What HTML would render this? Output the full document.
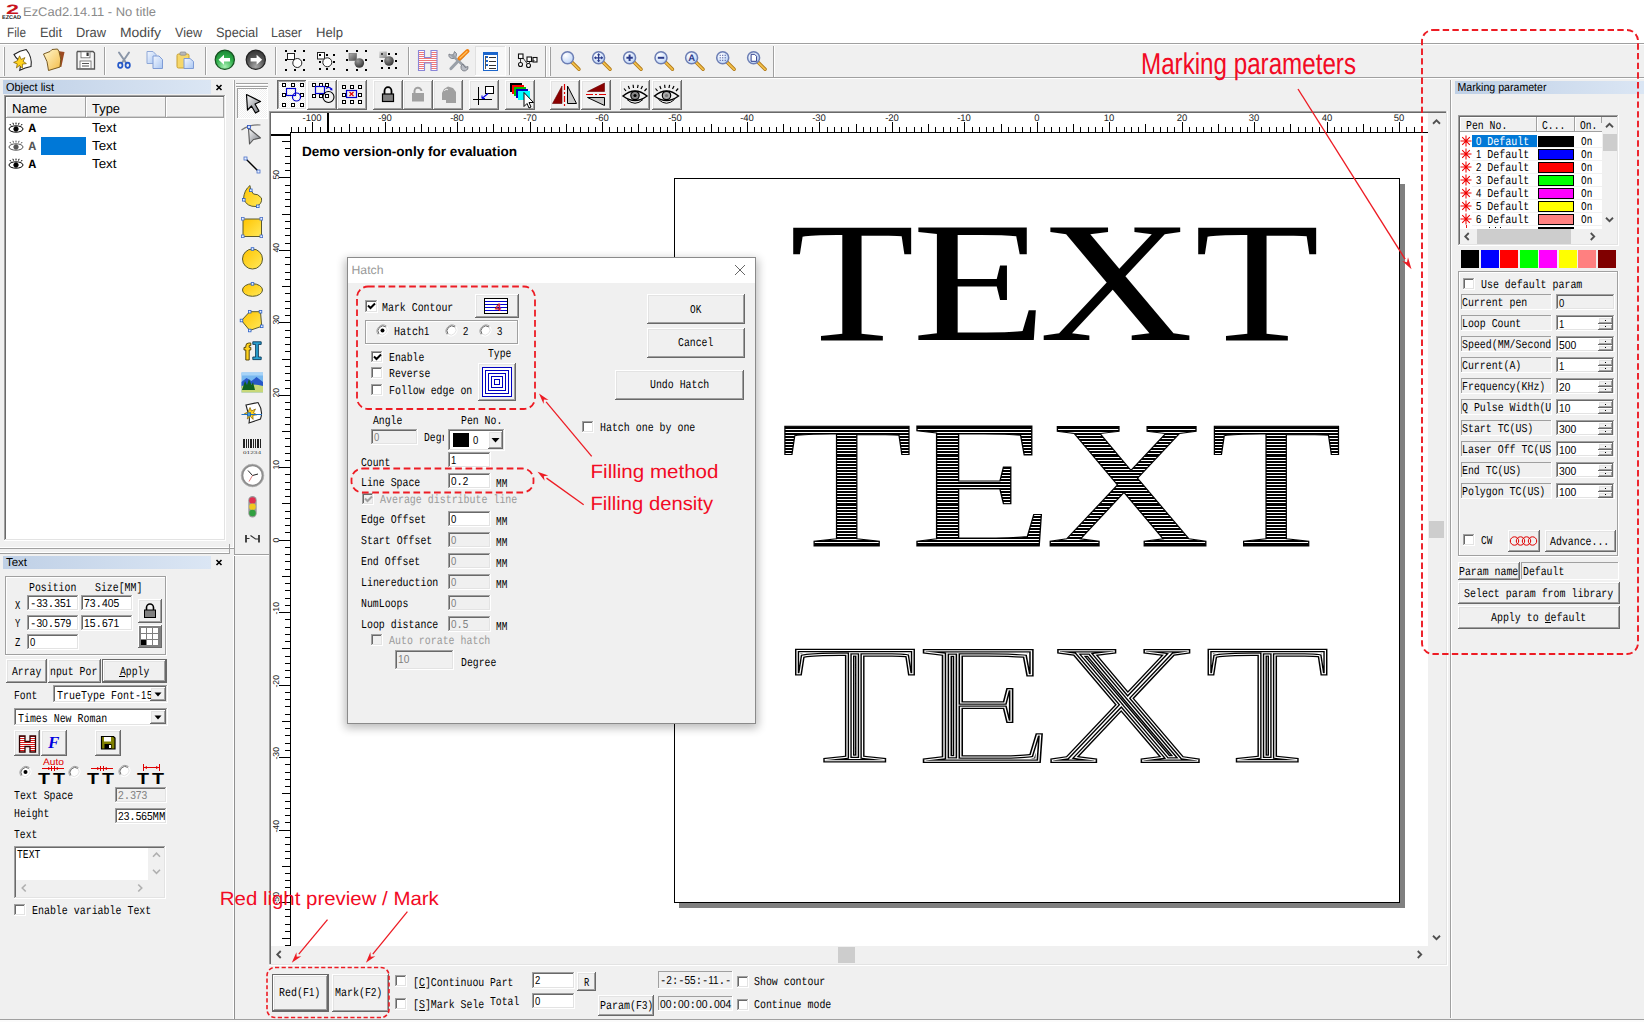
<!DOCTYPE html>
<html lang="en"><head><meta charset="utf-8"><title>EzCad2.14.11 - No title</title>
<style>
html,body{margin:0;padding:0;background:#f0f0f0;overflow:hidden}
body{width:1644px;height:1022px;font-family:"Liberation Sans",sans-serif}
svg{display:block}
svg text{white-space:pre}
</style></head><body>
<svg width="1644" height="1022" viewBox="0 0 1644 1022" shape-rendering="crispEdges" text-rendering="geometricPrecision">
<rect x="0" y="0" width="1644" height="1022" fill="#f0f0f0" />
<rect x="0" y="0" width="1644" height="43" fill="#ffffff" />
<g id="appicon">
<text x="6" y="13.5" font-family='"Liberation Sans", sans-serif' font-size="13.5" fill="#c8141e" textLength="13" lengthAdjust="spacingAndGlyphs" font-weight="bold" >2</text>
<text x="2" y="18.5" font-family='"Liberation Sans", sans-serif' font-size="5.5" fill="#222" textLength="19" lengthAdjust="spacingAndGlyphs" font-weight="bold" >EZCAD</text>
</g>
<text x="23" y="15.5" font-family='"Liberation Sans", sans-serif' font-size="12.5" fill="#8a8a8a" textLength="133" lengthAdjust="spacingAndGlyphs" >EzCad2.14.11 - No title</text>
<text x="7" y="37" font-family='"Liberation Sans", sans-serif' font-size="13.5" fill="#4a4a4a" textLength="19" lengthAdjust="spacingAndGlyphs" >File</text>
<text x="40" y="37" font-family='"Liberation Sans", sans-serif' font-size="13.5" fill="#4a4a4a" textLength="22" lengthAdjust="spacingAndGlyphs" >Edit</text>
<text x="76" y="37" font-family='"Liberation Sans", sans-serif' font-size="13.5" fill="#4a4a4a" textLength="30" lengthAdjust="spacingAndGlyphs" >Draw</text>
<text x="120" y="37" font-family='"Liberation Sans", sans-serif' font-size="13.5" fill="#4a4a4a" textLength="41" lengthAdjust="spacingAndGlyphs" >Modify</text>
<text x="175" y="37" font-family='"Liberation Sans", sans-serif' font-size="13.5" fill="#4a4a4a" textLength="27" lengthAdjust="spacingAndGlyphs" >View</text>
<text x="216" y="37" font-family='"Liberation Sans", sans-serif' font-size="13.5" fill="#4a4a4a" textLength="42" lengthAdjust="spacingAndGlyphs" >Special</text>
<text x="271" y="37" font-family='"Liberation Sans", sans-serif' font-size="13.5" fill="#4a4a4a" textLength="31" lengthAdjust="spacingAndGlyphs" >Laser</text>
<text x="316" y="37" font-family='"Liberation Sans", sans-serif' font-size="13.5" fill="#4a4a4a" textLength="27" lengthAdjust="spacingAndGlyphs" >Help</text>
<rect x="0" y="43" width="1644" height="1" fill="#a0a0a0" />
<rect x="0" y="44" width="1644" height="1" fill="#ffffff" />
<rect x="0" y="77" width="1644" height="1" fill="#a0a0a0" />
<rect x="0" y="78" width="1644" height="1" fill="#ffffff" />
<rect x="3" y="47" width="1" height="29" fill="#ffffff" />
<rect x="4" y="47" width="1" height="29" fill="#a0a0a0" />
<rect x="104" y="47" width="1" height="28" fill="#a0a0a0" />
<rect x="105" y="47" width="1" height="28" fill="#ffffff" />
<rect x="205" y="47" width="1" height="28" fill="#a0a0a0" />
<rect x="206" y="47" width="1" height="28" fill="#ffffff" />
<rect x="275" y="47" width="1" height="28" fill="#a0a0a0" />
<rect x="276" y="47" width="1" height="28" fill="#ffffff" />
<rect x="408" y="47" width="1" height="28" fill="#a0a0a0" />
<rect x="409" y="47" width="1" height="28" fill="#ffffff" />
<rect x="509" y="47" width="1" height="28" fill="#a0a0a0" />
<rect x="510" y="47" width="1" height="28" fill="#ffffff" />
<rect x="545" y="46" width="1" height="31" fill="#a0a0a0" />
<rect x="546" y="46" width="1" height="31" fill="#ffffff" />
<rect x="549" y="47" width="1" height="29" fill="#ffffff" />
<rect x="550" y="47" width="1" height="29" fill="#a0a0a0" />
<rect x="773" y="46" width="1" height="31" fill="#a0a0a0" />
<rect x="774" y="46" width="1" height="31" fill="#ffffff" />
<rect x="475" y="46" width="31" height="30" fill="#f8f8f8" />
<rect x="475" y="75" width="31" height="1" fill="#ffffff" />
<rect x="505" y="46" width="1" height="30" fill="#ffffff" />
<rect x="475" y="46" width="30" height="1" fill="#e0e0e0" />
<rect x="475" y="46" width="1" height="29" fill="#e0e0e0" />
<defs><linearGradient id="gY" x1="0" y1="0" x2="1" y2="1"><stop offset="0" stop-color="#ffc400"/><stop offset="1" stop-color="#ffe95a"/></linearGradient><linearGradient id="gFold" x1="0" y1="0" x2="1" y2="1"><stop offset="0" stop-color="#fff8d0"/><stop offset="1" stop-color="#f4bc48"/></linearGradient><radialGradient id="gGreen" cx="0.5" cy="0.85" r="0.8"><stop offset="0" stop-color="#a8f0b4"/><stop offset="0.6" stop-color="#2fae4a"/><stop offset="1" stop-color="#1d8a38"/></radialGradient><radialGradient id="gGray" cx="0.5" cy="0.85" r="0.8"><stop offset="0" stop-color="#a8a8a8"/><stop offset="0.6" stop-color="#555"/><stop offset="1" stop-color="#3a3a3a"/></radialGradient><radialGradient id="gLens" cx="0.35" cy="0.3" r="0.9"><stop offset="0" stop-color="#ffffff"/><stop offset="0.6" stop-color="#cfe0fa"/><stop offset="1" stop-color="#a9c2ee"/></radialGradient><radialGradient id="gBall" cx="0.35" cy="0.3" r="0.8"><stop offset="0" stop-color="#9a9a9a"/><stop offset="1" stop-color="#2a2a2a"/></radialGradient><linearGradient id="gSq" x1="0" y1="0" x2="1" y2="1"><stop offset="0" stop-color="#b0b0b0"/><stop offset="1" stop-color="#505050"/></linearGradient><linearGradient id="gSqL" x1="0" y1="0" x2="1" y2="1"><stop offset="0" stop-color="#d8d8d8"/><stop offset="1" stop-color="#8a8a8a"/></linearGradient><linearGradient id="gArrow" x1="0" y1="0" x2="1" y2="1"><stop offset="0" stop-color="#ffffff"/><stop offset="1" stop-color="#70747c"/></linearGradient><linearGradient id="gPage" x1="0" y1="0" x2="1" y2="1"><stop offset="0" stop-color="#f4f8ff"/><stop offset="1" stop-color="#a9c6f2"/></linearGradient><pattern id="pStripe" width="4" height="2" patternUnits="userSpaceOnUse"><rect width="4" height="2" fill="#fff"/><rect width="4" height="1" fill="#f07878"/></pattern><pattern id="pStripeR" width="4" height="2" patternUnits="userSpaceOnUse"><rect width="4" height="2" fill="#fff"/><rect width="4" height="1.2" fill="#d81818"/></pattern><pattern id="pChk" width="2" height="2" patternUnits="userSpaceOnUse"><rect width="2" height="2" fill="#ffffff"/><rect width="1" height="1" fill="#f0f0f0"/><rect x="1" y="1" width="1" height="1" fill="#f0f0f0"/></pattern></defs>
<g shape-rendering="geometricPrecision">
<path d="M14 54.5 Q20 50.5 26.200 49.500 Q32.500 57 31 66.500 Q25 67.500 19.800 70.200 Q21.500 64 18 59.500 Q15.500 57.500 14 54.500Z" fill="#fff" stroke="#222" stroke-width="1.100"/>
<path d="M19.600 55.800 l1.500 3.600 3.900 -1.800 -1.900 3.700 3.300 2.300 -4 .6 .1 4.100 -2.900 -2.900 -3.200 2.500 .9 -4 -3.700 -1.500 3.700 -1.600z" fill="#ffd21e" stroke="#7a5a00" stroke-width=".7"/>
<path d="M57.5 51 l7 1 -3.2 15 -5 -1z" fill="#9c4a22"/>
<path d="M43.5 54 L50 51.5 52 49.5 57.5 49 59 51.5 Q62 59 60 67 L48.5 70.5 Q48 61 43.5 54Z" fill="url(#gFold)" stroke="#6a4a10" stroke-width=".9"/>
<path d="M77.5 51.5 h15.5 l1.5 1.5 v16 h-17.5 v-16.5z" fill="#f4f4f4" stroke="#555" stroke-width="1.3"/>
<rect x="81" y="51.8" width="9" height="6" fill="#fff" stroke="#666" stroke-width=".8"/><rect x="86.5" y="52.5" width="2.2" height="3.5" fill="#333"/>
<rect x="80" y="61" width="11" height="7.5" fill="#fff" stroke="#666" stroke-width=".8"/><path d="M82 63.5h7M82 66h7" stroke="#555" stroke-width="1"/>
<path d="M119 52.5 L126.5 63.5 M129 52.5 L121.5 63.5" stroke="#8a96a8" stroke-width="2" stroke-linecap="round"/>
<ellipse cx="120.3" cy="65.3" rx="2.2" ry="2.6" fill="none" stroke="#2458c8" stroke-width="1.7"/><ellipse cx="127.7" cy="65.3" rx="2.2" ry="2.6" fill="none" stroke="#2458c8" stroke-width="1.7"/>
<path d="M147 51.5 h6 l3 3 v9 h-9z" fill="url(#gPage)" stroke="#8fa8d8" stroke-width="1"/>
<path d="M153 56 h6 l3.5 3.5 v9 h-9.500z" fill="url(#gPage)" stroke="#7f9cd6" stroke-width="1"/>
<rect x="177" y="54" width="12" height="14" rx="1.5" fill="#f6d76a" stroke="#c8a030" stroke-width="1"/><rect x="180" y="52" width="6" height="3.2" rx="1" fill="#b8b8b8" stroke="#888" stroke-width=".7"/>
<path d="M184 58.500 h6 l3.5 3 v7 h-9.500z" fill="url(#gPage)" stroke="#7f9cd6" stroke-width="1"/>
<circle cx="224.800" cy="59.800" r="9.600" fill="url(#gGreen)" stroke="#14501f" stroke-width="1.2"/>
<path d="M218.500 59.800 l5.500 -5 v3.200 h6 v3.600 h-6 v3.200z" fill="#fff"/>
<circle cx="255.800" cy="59.800" r="9.600" fill="url(#gGray)" stroke="#222" stroke-width="1.2"/>
<path d="M262.100 59.800 l-5.500 -5 v3.200 h-6 v3.600 h6 v3.200z" fill="#fff"/>
</g>
<rect x="285" y="50" width="2" height="2" fill="#000" />
<rect x="285" y="59" width="2" height="2" fill="#000" />
<rect x="285" y="69" width="2" height="2" fill="#000" />
<rect x="294" y="50" width="2" height="2" fill="#000" />
<rect x="294" y="69" width="2" height="2" fill="#000" />
<rect x="303" y="50" width="2" height="2" fill="#000" />
<rect x="303" y="59" width="2" height="2" fill="#000" />
<rect x="303" y="69" width="2" height="2" fill="#000" />
<g shape-rendering="geometricPrecision"><rect x="287.500" y="53.500" width="7" height="6" fill="#fff" stroke="#222" stroke-width="1"/><circle cx="297.300" cy="63" r="4.500" fill="#fff" stroke="#222" stroke-width="1"/></g>
<rect x="319" y="54" width="2" height="2" fill="#000" />
<rect x="319" y="61" width="2" height="2" fill="#000" />
<rect x="319" y="68" width="2" height="2" fill="#000" />
<rect x="326" y="54" width="2" height="2" fill="#000" />
<rect x="326" y="68" width="2" height="2" fill="#000" />
<rect x="333" y="54" width="2" height="2" fill="#000" />
<rect x="333" y="61" width="2" height="2" fill="#000" />
<rect x="333" y="68" width="2" height="2" fill="#000" />
<g shape-rendering="geometricPrecision"><rect x="317.500" y="52.500" width="7" height="6.500" fill="#fff" stroke="#222" stroke-width="1"/><circle cx="327.300" cy="62.300" r="4.500" fill="#fff" stroke="#222" stroke-width="1"/></g>
<rect x="319" y="54" width="2" height="2" fill="#000" />
<rect x="346" y="50" width="2" height="2" fill="#000" />
<rect x="346" y="59" width="2" height="2" fill="#000" />
<rect x="346" y="69" width="2" height="2" fill="#000" />
<rect x="356" y="50" width="2" height="2" fill="#000" />
<rect x="356" y="69" width="2" height="2" fill="#000" />
<rect x="365" y="50" width="2" height="2" fill="#000" />
<rect x="365" y="59" width="2" height="2" fill="#000" />
<rect x="365" y="69" width="2" height="2" fill="#000" />
<g shape-rendering="geometricPrecision"><rect x="349" y="53.500" width="7.500" height="7" fill="url(#gSq)" stroke="#666" stroke-width=".6"/><circle cx="359.300" cy="63" r="4.800" fill="url(#gBall)"/></g>
<rect x="381" y="53" width="2" height="2" fill="#000" />
<rect x="381" y="60" width="2" height="2" fill="#000" />
<rect x="381" y="67" width="2" height="2" fill="#000" />
<rect x="388" y="53" width="2" height="2" fill="#000" />
<rect x="388" y="67" width="2" height="2" fill="#000" />
<rect x="395" y="53" width="2" height="2" fill="#000" />
<rect x="395" y="60" width="2" height="2" fill="#000" />
<rect x="395" y="67" width="2" height="2" fill="#000" />
<g shape-rendering="geometricPrecision"><rect x="379.300" y="51.500" width="7.500" height="6.500" fill="url(#gSqL)"/><circle cx="389" cy="61" r="4.800" fill="url(#gBall)"/></g>
<rect x="381" y="53" width="2" height="2" fill="#444" />
<g shape-rendering="geometricPrecision"><path d="M418.500 50.500 h6 v7 h6.500 v-7 h6 v20 h-6 v-7.500 h-6.500 v7.500 h-6z" fill="url(#pStripe)" stroke="#8a86d8" stroke-width="1.1"/></g>
<g shape-rendering="geometricPrecision">
<path d="M451 68.500 L463.500 55.500" stroke="#9aa0a8" stroke-width="3.200" stroke-linecap="round"/>
<path d="M449 54 a3.800 3.800 0 1 0 5.500 -2.500 l-1 3 -2.500 .5z" fill="#b8bcc4" stroke="#70747c" stroke-width=".8"/>
<path d="M452.500 55.500 L466 68" stroke="#9aa0a8" stroke-width="2.600" stroke-linecap="round"/>
<path d="M463 64 a3.600 3.600 0 1 0 5 2.500 l-2.800 1 -1.500 -1.800z" fill="#b8bcc4" stroke="#70747c" stroke-width=".8"/>
<path d="M459.500 58.500 L467.500 51" stroke="#f08010" stroke-width="4" stroke-linecap="round"/><path d="M460 58 L467 51.500" stroke="#ffc060" stroke-width="1.200" stroke-linecap="round"/>
</g>
<rect x="483" y="52" width="15" height="19" fill="#ffffff" />
<rect x="483" y="52" width="15" height="1" fill="#1c66cc" />
<rect x="483" y="70" width="15" height="1" fill="#1c66cc" />
<rect x="483" y="52" width="1" height="19" fill="#1c66cc" />
<rect x="497" y="52" width="1" height="19" fill="#1c66cc" />
<rect x="483" y="52" width="15" height="3" fill="#1c66cc" />
<rect x="489" y="57" width="7" height="1" fill="#333" />
<rect x="489" y="61" width="7" height="1" fill="#333" />
<rect x="489" y="65" width="7" height="1" fill="#333" />
<rect x="489" y="68" width="7" height="1" fill="#333" />
<rect x="486" y="56" width="2" height="2" fill="#1c66cc" />
<rect x="486" y="60" width="2" height="2" fill="#1c66cc" />
<rect x="486" y="64" width="2" height="2" fill="#1c66cc" />
<rect x="485" y="56" width="1" height="13" fill="#555" />
<g shape-rendering="geometricPrecision"><g fill="#fff" stroke="#111" stroke-width="1.1"><rect x="518.500" y="54" width="4.500" height="4.500"/><rect x="527" y="57" width="4.500" height="4.500"/><rect x="533" y="57.500" width="4" height="4.500"/><circle cx="520.500" cy="64.500" r="2"/><circle cx="528.500" cy="65.500" r="2"/></g><path d="M520.500 58.500 v4 M523 58 l4.500 6 M530 61.500 l-1 2 M531.500 61.500 l3 -1" stroke="#111" stroke-width=".8" fill="none"/></g>
<g shape-rendering="geometricPrecision">
<path d="M572.0 62.3 L579.0 69.3" stroke="#b07818" stroke-width="3.400" stroke-linecap="round"/>
<path d="M572.0 62.3 L579.0 69.3" stroke="#f2c04a" stroke-width="1.800" stroke-linecap="round"/>
<circle cx="567.5" cy="57.8" r="6" fill="url(#gLens)" stroke="#6c7eb4" stroke-width="1.500"/>
</g>
<g shape-rendering="geometricPrecision">
<path d="M603.1 62.3 L610.1 69.3" stroke="#b07818" stroke-width="3.400" stroke-linecap="round"/>
<path d="M603.1 62.3 L610.1 69.3" stroke="#f2c04a" stroke-width="1.800" stroke-linecap="round"/>
<circle cx="598.6" cy="57.8" r="6" fill="url(#gLens)" stroke="#6c7eb4" stroke-width="1.500"/>
<path d="M594.6 57.8h8M598.6 53.8v8" stroke="#2c3c8c" stroke-width="1.200"/><path d="M594.1 57.8l2 -1.800v3.600zM603.1 57.8l-2 -1.800v3.600zM598.6 53.3l-1.800 2h3.600zM598.6 62.3l-1.800 -2h3.600z" fill="#2c3c8c"/>
</g>
<g shape-rendering="geometricPrecision">
<path d="M634.1 62.3 L641.1 69.3" stroke="#b07818" stroke-width="3.400" stroke-linecap="round"/>
<path d="M634.1 62.3 L641.1 69.3" stroke="#f2c04a" stroke-width="1.800" stroke-linecap="round"/>
<circle cx="629.6" cy="57.8" r="6" fill="url(#gLens)" stroke="#6c7eb4" stroke-width="1.500"/>
<path d="M626.4 57.8h6.400M629.6 54.599999999999994v6.400" stroke="#2c3c8c" stroke-width="2"/>
</g>
<g shape-rendering="geometricPrecision">
<path d="M665.5 62.3 L672.5 69.3" stroke="#b07818" stroke-width="3.400" stroke-linecap="round"/>
<path d="M665.5 62.3 L672.5 69.3" stroke="#f2c04a" stroke-width="1.800" stroke-linecap="round"/>
<circle cx="661" cy="57.8" r="6" fill="url(#gLens)" stroke="#6c7eb4" stroke-width="1.500"/>
<path d="M657.8 57.8h6.400" stroke="#2c3c8c" stroke-width="2"/>
</g>
<g shape-rendering="geometricPrecision">
<path d="M696.1 62.3 L703.1 69.3" stroke="#b07818" stroke-width="3.400" stroke-linecap="round"/>
<path d="M696.1 62.3 L703.1 69.3" stroke="#f2c04a" stroke-width="1.800" stroke-linecap="round"/>
<circle cx="691.6" cy="57.8" r="6" fill="url(#gLens)" stroke="#6c7eb4" stroke-width="1.500"/>
<text x="691.6" y="61.199999999999996" font-family='"Liberation Sans", sans-serif' font-size="9.500" font-weight="bold" fill="#2c3c8c" text-anchor="middle">A</text>
</g>
<g shape-rendering="geometricPrecision">
<path d="M727.2 62.3 L734.2 69.3" stroke="#b07818" stroke-width="3.400" stroke-linecap="round"/>
<path d="M727.2 62.3 L734.2 69.3" stroke="#f2c04a" stroke-width="1.800" stroke-linecap="round"/>
<circle cx="722.7" cy="57.8" r="6" fill="url(#gLens)" stroke="#6c7eb4" stroke-width="1.500"/>
<rect x="719.7" y="54.8" width="1" height="1" fill="#2c3c8c"/>
<rect x="719.7" y="57.3" width="1" height="1" fill="#2c3c8c"/>
<rect x="719.7" y="59.8" width="1" height="1" fill="#2c3c8c"/>
<rect x="722.2" y="54.8" width="1" height="1" fill="#2c3c8c"/>
<rect x="722.2" y="57.3" width="1" height="1" fill="#2c3c8c"/>
<rect x="722.2" y="59.8" width="1" height="1" fill="#2c3c8c"/>
<rect x="724.7" y="54.8" width="1" height="1" fill="#2c3c8c"/>
<rect x="724.7" y="57.3" width="1" height="1" fill="#2c3c8c"/>
<rect x="724.7" y="59.8" width="1" height="1" fill="#2c3c8c"/>
</g>
<g shape-rendering="geometricPrecision">
<path d="M758.1 62.3 L765.1 69.3" stroke="#b07818" stroke-width="3.400" stroke-linecap="round"/>
<path d="M758.1 62.3 L765.1 69.3" stroke="#f2c04a" stroke-width="1.800" stroke-linecap="round"/>
<circle cx="753.6" cy="57.8" r="6" fill="url(#gLens)" stroke="#6c7eb4" stroke-width="1.500"/>
<path d="M751.1 54.3h3.500l2 2v5h-5.500z" fill="#fff" stroke="#2c3c8c" stroke-width="1"/>
</g>
<defs><linearGradient id="gHdr" x1="0" y1="0" x2="1" y2="0"><stop offset="0" stop-color="#bfd0e6"/><stop offset="1" stop-color="#dbe6f4"/></linearGradient></defs>
<rect x="3" y="80" width="208" height="14" fill="url(#gHdr)" />
<text x="6" y="90.5" font-family='"Liberation Sans", sans-serif' font-size="11.5" fill="#000" textLength="48" lengthAdjust="spacingAndGlyphs" >Object list</text>
<g shape-rendering="geometricPrecision"><path d="M216.5 85.0l5 5M221.5 85.0l-5 5" stroke="#000" stroke-width="1.600"/></g>
<rect x="4" y="95" width="222" height="446" fill="#ffffff" />
<rect x="4" y="540" width="222" height="1" fill="#ffffff" />
<rect x="225" y="95" width="1" height="446" fill="#ffffff" />
<rect x="4" y="95" width="221" height="1" fill="#a0a0a0" />
<rect x="4" y="95" width="1" height="445" fill="#a0a0a0" />
<rect x="5" y="539" width="220" height="1" fill="#e3e3e3" />
<rect x="224" y="96" width="1" height="444" fill="#e3e3e3" />
<rect x="5" y="96" width="219" height="1" fill="#696969" />
<rect x="5" y="96" width="1" height="443" fill="#696969" />
<rect x="6" y="97" width="80" height="21" fill="#f0f0f0" />
<rect x="6" y="117" width="80" height="1" fill="#a0a0a0" />
<rect x="85" y="97" width="1" height="21" fill="#a0a0a0" />
<rect x="6" y="97" width="79" height="1" fill="#ffffff" />
<rect x="6" y="97" width="1" height="20" fill="#ffffff" />
<rect x="7" y="116" width="78" height="1" fill="#d0d0d0" />
<rect x="86" y="97" width="80" height="21" fill="#f0f0f0" />
<rect x="86" y="117" width="80" height="1" fill="#a0a0a0" />
<rect x="165" y="97" width="1" height="21" fill="#a0a0a0" />
<rect x="86" y="97" width="79" height="1" fill="#ffffff" />
<rect x="86" y="97" width="1" height="20" fill="#ffffff" />
<rect x="87" y="116" width="78" height="1" fill="#d0d0d0" />
<rect x="166" y="97" width="58" height="21" fill="#f0f0f0" />
<rect x="166" y="117" width="58" height="1" fill="#a0a0a0" />
<rect x="223" y="97" width="1" height="21" fill="#a0a0a0" />
<rect x="166" y="97" width="57" height="1" fill="#ffffff" />
<rect x="166" y="97" width="1" height="20" fill="#ffffff" />
<rect x="167" y="116" width="56" height="1" fill="#d0d0d0" />
<text x="12" y="113" font-family='"Liberation Sans", sans-serif' font-size="13" fill="#000" textLength="35" lengthAdjust="spacingAndGlyphs" >Name</text>
<text x="92" y="113" font-family='"Liberation Sans", sans-serif' font-size="13" fill="#000" textLength="28" lengthAdjust="spacingAndGlyphs" >Type</text>
<g shape-rendering="geometricPrecision"><g stroke="#000" fill="none" stroke-width="1"><ellipse cx="16" cy="129" rx="7" ry="3.2"/><circle cx="16" cy="129" r="2.2" fill="#000"/><path d="M11 125.5l-1.200 -1.500M13.5 124.6l-.6 -1.800M16 124.4v-1.800M18.5 124.6l.6 -1.800M21 125.5l1.200 -1.500"/></g></g>
<text x="28.5" y="131.5" font-family='"Liberation Mono", monospace' font-size="12.5" fill="#000" font-weight="bold" >A</text>
<text x="92" y="131.5" font-family='"Liberation Sans", sans-serif' font-size="13" fill="#000" textLength="24.5" lengthAdjust="spacingAndGlyphs" >Text</text>
<g shape-rendering="geometricPrecision"><g stroke="#555" fill="none" stroke-width="1"><ellipse cx="16" cy="147" rx="7" ry="3.2"/><circle cx="16" cy="147" r="2.2" fill="#555"/><path d="M11 143.5l-1.200 -1.500M13.5 142.6l-.6 -1.800M16 142.4v-1.800M18.5 142.6l.6 -1.800M21 143.5l1.200 -1.500"/></g></g>
<text x="28.5" y="149.5" font-family='"Liberation Mono", monospace' font-size="12.5" fill="#555" font-weight="bold" >A</text>
<rect x="41" y="137" width="45" height="18" fill="#0078d7" />
<text x="92" y="149.5" font-family='"Liberation Sans", sans-serif' font-size="13" fill="#000" textLength="24.5" lengthAdjust="spacingAndGlyphs" >Text</text>
<g shape-rendering="geometricPrecision"><g stroke="#000" fill="none" stroke-width="1"><ellipse cx="16" cy="165" rx="7" ry="3.2"/><circle cx="16" cy="165" r="2.2" fill="#000"/><path d="M11 161.5l-1.200 -1.500M13.5 160.6l-.6 -1.800M16 160.4v-1.800M18.5 160.6l.6 -1.800M21 161.5l1.200 -1.500"/></g></g>
<text x="28.5" y="167.5" font-family='"Liberation Mono", monospace' font-size="12.5" fill="#000" font-weight="bold" >A</text>
<text x="92" y="167.5" font-family='"Liberation Sans", sans-serif' font-size="13" fill="#000" textLength="24.5" lengthAdjust="spacingAndGlyphs" >Text</text>
<rect x="0" y="547" width="234" height="1" fill="#ffffff" />
<rect x="0" y="548" width="234" height="1" fill="#a0a0a0" />
<rect x="0" y="552" width="230" height="1" fill="#ffffff" />
<rect x="0" y="553" width="230" height="1" fill="#a0a0a0" />
<rect x="229" y="544" width="1" height="10" fill="#a0a0a0" />
<rect x="233" y="80" width="1" height="468" fill="#ffffff" />
<rect x="234" y="80" width="1" height="474" fill="#a0a0a0" />
<rect x="233" y="556" width="1" height="463" fill="#ffffff" />
<rect x="234" y="556" width="1" height="463" fill="#909090" />
<rect x="3" y="556" width="208" height="13" fill="url(#gHdr)" />
<text x="6" y="566" font-family='"Liberation Sans", sans-serif' font-size="11.5" fill="#000" textLength="21" lengthAdjust="spacingAndGlyphs" >Text</text>
<g shape-rendering="geometricPrecision"><path d="M216.5 560.0l5 5M221.5 560.0l-5 5" stroke="#000" stroke-width="1.600"/></g>
<rect x="5" y="576" width="161" height="1" fill="#a0a0a0" />
<rect x="5" y="654" width="161" height="1" fill="#a0a0a0" />
<rect x="5" y="576" width="1" height="79" fill="#a0a0a0" />
<rect x="165" y="576" width="1" height="79" fill="#a0a0a0" />
<rect x="6" y="577" width="159" height="1" fill="#ffffff" />
<rect x="6" y="577" width="1" height="77" fill="#ffffff" />
<rect x="5" y="655" width="162" height="1" fill="#ffffff" />
<rect x="166" y="576" width="1" height="80" fill="#ffffff" />
<text x="29" y="591" font-family='"Liberation Mono", monospace' font-size="12" fill="#000" textLength="47.3" lengthAdjust="spacingAndGlyphs">Position</text>
<text x="95" y="591" font-family='"Liberation Mono", monospace' font-size="12" fill="#000" textLength="47.3" lengthAdjust="spacingAndGlyphs">Size[MM]</text>
<text x="15" y="609" font-family='"Liberation Mono", monospace' font-size="12" fill="#000" textLength="5.3" lengthAdjust="spacingAndGlyphs">X</text>
<text x="15" y="627" font-family='"Liberation Mono", monospace' font-size="12" fill="#000" textLength="5.3" lengthAdjust="spacingAndGlyphs">Y</text>
<text x="15" y="645.5" font-family='"Liberation Mono", monospace' font-size="12" fill="#000" textLength="5.3" lengthAdjust="spacingAndGlyphs">Z</text>
<rect x="27" y="595" width="52" height="16" fill="#ffffff" />
<rect x="27" y="610" width="52" height="1" fill="#ffffff" />
<rect x="78" y="595" width="1" height="16" fill="#ffffff" />
<rect x="27" y="595" width="51" height="1" fill="#a0a0a0" />
<rect x="27" y="595" width="1" height="15" fill="#a0a0a0" />
<rect x="28" y="609" width="50" height="1" fill="#e3e3e3" />
<rect x="77" y="596" width="1" height="14" fill="#e3e3e3" />
<rect x="28" y="596" width="49" height="1" fill="#696969" />
<rect x="28" y="596" width="1" height="13" fill="#696969" />
<text x="30" y="606.7" font-family='"Liberation Mono", monospace' font-size="12" fill="#000" textLength="41.3" lengthAdjust="spacingAndGlyphs">-<tspan font-family='"Liberation Sans", sans-serif' font-size="11.5">33</tspan>.<tspan font-family='"Liberation Sans", sans-serif' font-size="11.5">351</tspan></text>
<rect x="81" y="595" width="52" height="16" fill="#ffffff" />
<rect x="81" y="610" width="52" height="1" fill="#ffffff" />
<rect x="132" y="595" width="1" height="16" fill="#ffffff" />
<rect x="81" y="595" width="51" height="1" fill="#a0a0a0" />
<rect x="81" y="595" width="1" height="15" fill="#a0a0a0" />
<rect x="82" y="609" width="50" height="1" fill="#e3e3e3" />
<rect x="131" y="596" width="1" height="14" fill="#e3e3e3" />
<rect x="82" y="596" width="49" height="1" fill="#696969" />
<rect x="82" y="596" width="1" height="13" fill="#696969" />
<text x="84" y="606.7" font-family='"Liberation Mono", monospace' font-size="12" fill="#000" textLength="35.3" lengthAdjust="spacingAndGlyphs"><tspan font-family='"Liberation Sans", sans-serif' font-size="11.5">73</tspan>.<tspan font-family='"Liberation Sans", sans-serif' font-size="11.5">405</tspan></text>
<rect x="27" y="615" width="52" height="16" fill="#ffffff" />
<rect x="27" y="630" width="52" height="1" fill="#ffffff" />
<rect x="78" y="615" width="1" height="16" fill="#ffffff" />
<rect x="27" y="615" width="51" height="1" fill="#a0a0a0" />
<rect x="27" y="615" width="1" height="15" fill="#a0a0a0" />
<rect x="28" y="629" width="50" height="1" fill="#e3e3e3" />
<rect x="77" y="616" width="1" height="14" fill="#e3e3e3" />
<rect x="28" y="616" width="49" height="1" fill="#696969" />
<rect x="28" y="616" width="1" height="13" fill="#696969" />
<text x="30" y="626.7" font-family='"Liberation Mono", monospace' font-size="12" fill="#000" textLength="41.3" lengthAdjust="spacingAndGlyphs">-<tspan font-family='"Liberation Sans", sans-serif' font-size="11.5">30</tspan>.<tspan font-family='"Liberation Sans", sans-serif' font-size="11.5">579</tspan></text>
<rect x="81" y="615" width="52" height="16" fill="#ffffff" />
<rect x="81" y="630" width="52" height="1" fill="#ffffff" />
<rect x="132" y="615" width="1" height="16" fill="#ffffff" />
<rect x="81" y="615" width="51" height="1" fill="#a0a0a0" />
<rect x="81" y="615" width="1" height="15" fill="#a0a0a0" />
<rect x="82" y="629" width="50" height="1" fill="#e3e3e3" />
<rect x="131" y="616" width="1" height="14" fill="#e3e3e3" />
<rect x="82" y="616" width="49" height="1" fill="#696969" />
<rect x="82" y="616" width="1" height="13" fill="#696969" />
<text x="84" y="626.7" font-family='"Liberation Mono", monospace' font-size="12" fill="#000" textLength="35.3" lengthAdjust="spacingAndGlyphs"><tspan font-family='"Liberation Sans", sans-serif' font-size="11.5">15</tspan>.<tspan font-family='"Liberation Sans", sans-serif' font-size="11.5">671</tspan></text>
<rect x="27" y="634" width="52" height="16" fill="#ffffff" />
<rect x="27" y="649" width="52" height="1" fill="#ffffff" />
<rect x="78" y="634" width="1" height="16" fill="#ffffff" />
<rect x="27" y="634" width="51" height="1" fill="#a0a0a0" />
<rect x="27" y="634" width="1" height="15" fill="#a0a0a0" />
<rect x="28" y="648" width="50" height="1" fill="#e3e3e3" />
<rect x="77" y="635" width="1" height="14" fill="#e3e3e3" />
<rect x="28" y="635" width="49" height="1" fill="#696969" />
<rect x="28" y="635" width="1" height="13" fill="#696969" />
<text x="30" y="645.7" font-family='"Liberation Mono", monospace' font-size="12" fill="#000" textLength="5.3" lengthAdjust="spacingAndGlyphs"><tspan font-family='"Liberation Sans", sans-serif' font-size="11.5">0</tspan></text>
<rect x="138" y="599" width="24" height="24" fill="#f0f0f0" />
<rect x="138" y="622" width="24" height="1" fill="#696969" />
<rect x="161" y="599" width="1" height="24" fill="#696969" />
<rect x="138" y="599" width="23" height="1" fill="#ffffff" />
<rect x="138" y="599" width="1" height="23" fill="#ffffff" />
<rect x="139" y="621" width="22" height="1" fill="#a0a0a0" />
<rect x="160" y="600" width="1" height="22" fill="#a0a0a0" />
<rect x="139" y="600" width="21" height="1" fill="#e3e3e3" />
<rect x="139" y="600" width="1" height="21" fill="#e3e3e3" />
<g shape-rendering="geometricPrecision"><path d="M146.500 610 v-2.500 a3.500 3.500 0 0 1 7 0 v2.500" fill="none" stroke="#000" stroke-width="1.600"/><rect x="144.500" y="610" width="11" height="7.500" fill="#808080" stroke="#000" stroke-width="1"/></g>
<rect x="138" y="625" width="24" height="23" fill="#808080" />
<rect x="138" y="647" width="24" height="1" fill="#696969" />
<rect x="161" y="625" width="1" height="23" fill="#696969" />
<rect x="138" y="625" width="23" height="1" fill="#ffffff" />
<rect x="138" y="625" width="1" height="22" fill="#ffffff" />
<rect x="141" y="628" width="5" height="5" fill="#ffffff" />
<rect x="141" y="634" width="5" height="5" fill="#ffffff" />
<rect x="141" y="640" width="5" height="5" fill="#000" />
<rect x="147" y="628" width="5" height="5" fill="#ffffff" />
<rect x="147" y="634" width="5" height="5" fill="#ffffff" />
<rect x="147" y="640" width="5" height="5" fill="#ffffff" />
<rect x="153" y="628" width="5" height="5" fill="#ffffff" />
<rect x="153" y="634" width="5" height="5" fill="#ffffff" />
<rect x="153" y="640" width="5" height="5" fill="#ffffff" />
<rect x="6" y="659" width="41" height="24" fill="#f0f0f0" />
<rect x="6" y="682" width="41" height="1" fill="#696969" />
<rect x="46" y="659" width="1" height="24" fill="#696969" />
<rect x="6" y="659" width="40" height="1" fill="#ffffff" />
<rect x="6" y="659" width="1" height="23" fill="#ffffff" />
<rect x="7" y="681" width="39" height="1" fill="#a0a0a0" />
<rect x="45" y="660" width="1" height="22" fill="#a0a0a0" />
<rect x="7" y="660" width="38" height="1" fill="#e3e3e3" />
<rect x="7" y="660" width="1" height="21" fill="#e3e3e3" />
<text x="12" y="674.5" font-family='"Liberation Mono", monospace' font-size="12" fill="#000" textLength="29.3" lengthAdjust="spacingAndGlyphs">Array</text>
<rect x="48" y="659" width="53" height="24" fill="#f0f0f0" />
<rect x="48" y="682" width="53" height="1" fill="#696969" />
<rect x="100" y="659" width="1" height="24" fill="#696969" />
<rect x="48" y="659" width="52" height="1" fill="#ffffff" />
<rect x="48" y="659" width="1" height="23" fill="#ffffff" />
<rect x="49" y="681" width="51" height="1" fill="#a0a0a0" />
<rect x="99" y="660" width="1" height="22" fill="#a0a0a0" />
<rect x="49" y="660" width="50" height="1" fill="#e3e3e3" />
<rect x="49" y="660" width="1" height="21" fill="#e3e3e3" />
<text x="50" y="674.5" font-family='"Liberation Mono", monospace' font-size="12" fill="#000" textLength="47.3" lengthAdjust="spacingAndGlyphs">nput Por</text>
<rect x="102" y="659" width="65" height="1" fill="#696969" />
<rect x="102" y="682" width="65" height="1" fill="#696969" />
<rect x="102" y="659" width="1" height="24" fill="#696969" />
<rect x="166" y="659" width="1" height="24" fill="#696969" />
<rect x="103" y="660" width="63" height="22" fill="#f0f0f0" />
<rect x="103" y="681" width="63" height="1" fill="#696969" />
<rect x="165" y="660" width="1" height="22" fill="#696969" />
<rect x="103" y="660" width="62" height="1" fill="#ffffff" />
<rect x="103" y="660" width="1" height="21" fill="#ffffff" />
<rect x="104" y="680" width="61" height="1" fill="#a0a0a0" />
<rect x="164" y="661" width="1" height="20" fill="#a0a0a0" />
<rect x="104" y="661" width="60" height="1" fill="#e3e3e3" />
<rect x="104" y="661" width="1" height="19" fill="#e3e3e3" />
<text x="120" y="674.5" font-family='"Liberation Mono", monospace' font-size="12" fill="#000" textLength="29.3" lengthAdjust="spacingAndGlyphs">Apply</text>
<rect x="119" y="676" width="6" height="1" fill="#000" />
<text x="14" y="698.5" font-family='"Liberation Mono", monospace' font-size="12" fill="#000" textLength="23.3" lengthAdjust="spacingAndGlyphs">Font</text>
<rect x="53" y="685" width="115" height="18" fill="#ffffff" />
<rect x="53" y="702" width="115" height="1" fill="#ffffff" />
<rect x="167" y="685" width="1" height="18" fill="#ffffff" />
<rect x="53" y="685" width="114" height="1" fill="#a0a0a0" />
<rect x="53" y="685" width="1" height="17" fill="#a0a0a0" />
<rect x="54" y="701" width="113" height="1" fill="#e3e3e3" />
<rect x="166" y="686" width="1" height="16" fill="#e3e3e3" />
<rect x="54" y="686" width="112" height="1" fill="#696969" />
<rect x="54" y="686" width="1" height="15" fill="#696969" />
<text x="57" y="698.5" font-family='"Liberation Mono", monospace' font-size="12" fill="#000" textLength="89.3" lengthAdjust="spacingAndGlyphs">TrueType Font-<tspan font-family='"Liberation Sans", sans-serif' font-size="11.5">1</tspan></text>
<rect x="150" y="687" width="16" height="14" fill="#f0f0f0" />
<rect x="150" y="700" width="16" height="1" fill="#696969" />
<rect x="165" y="687" width="1" height="14" fill="#696969" />
<rect x="150" y="687" width="15" height="1" fill="#ffffff" />
<rect x="150" y="687" width="1" height="13" fill="#ffffff" />
<rect x="151" y="699" width="14" height="1" fill="#a0a0a0" />
<rect x="164" y="688" width="1" height="12" fill="#a0a0a0" />
<rect x="151" y="688" width="13" height="1" fill="#e3e3e3" />
<rect x="151" y="688" width="1" height="11" fill="#e3e3e3" />
<g shape-rendering="geometricPrecision"><path d="M154.5 692.5h7l-3.500 4z" fill="#000"/></g>
<clipPath id="clip5"><rect x="147" y="687" width="4" height="14"/></clipPath>
<g clip-path="url(#clip5)">
<text x="147" y="698.5" font-family='"Liberation Mono", monospace' font-size="12" fill="#000" textLength="5.3" lengthAdjust="spacingAndGlyphs"><tspan font-family='"Liberation Sans", sans-serif' font-size="11.5">5</tspan></text>
</g>
<rect x="14" y="708" width="154" height="18" fill="#ffffff" />
<rect x="14" y="725" width="154" height="1" fill="#ffffff" />
<rect x="167" y="708" width="1" height="18" fill="#ffffff" />
<rect x="14" y="708" width="153" height="1" fill="#a0a0a0" />
<rect x="14" y="708" width="1" height="17" fill="#a0a0a0" />
<rect x="15" y="724" width="152" height="1" fill="#e3e3e3" />
<rect x="166" y="709" width="1" height="16" fill="#e3e3e3" />
<rect x="15" y="709" width="151" height="1" fill="#696969" />
<rect x="15" y="709" width="1" height="15" fill="#696969" />
<text x="18" y="721.5" font-family='"Liberation Mono", monospace' font-size="12" fill="#000" textLength="89.3" lengthAdjust="spacingAndGlyphs">Times New Roman</text>
<rect x="150" y="710" width="16" height="14" fill="#f0f0f0" />
<rect x="150" y="723" width="16" height="1" fill="#696969" />
<rect x="165" y="710" width="1" height="14" fill="#696969" />
<rect x="150" y="710" width="15" height="1" fill="#ffffff" />
<rect x="150" y="710" width="1" height="13" fill="#ffffff" />
<rect x="151" y="722" width="14" height="1" fill="#a0a0a0" />
<rect x="164" y="711" width="1" height="12" fill="#a0a0a0" />
<rect x="151" y="711" width="13" height="1" fill="#e3e3e3" />
<rect x="151" y="711" width="1" height="11" fill="#e3e3e3" />
<g shape-rendering="geometricPrecision"><path d="M154.5 715.5h7l-3.500 4z" fill="#000"/></g>
<rect x="14" y="730" width="26" height="26" fill="#f0f0f0" />
<rect x="14" y="755" width="26" height="1" fill="#696969" />
<rect x="39" y="730" width="1" height="26" fill="#696969" />
<rect x="14" y="730" width="25" height="1" fill="#ffffff" />
<rect x="14" y="730" width="1" height="25" fill="#ffffff" />
<rect x="15" y="754" width="24" height="1" fill="#a0a0a0" />
<rect x="38" y="731" width="1" height="24" fill="#a0a0a0" />
<rect x="15" y="731" width="23" height="1" fill="#e3e3e3" />
<rect x="15" y="731" width="1" height="23" fill="#e3e3e3" />
<rect x="41" y="730" width="26" height="26" fill="#f0f0f0" />
<rect x="41" y="755" width="26" height="1" fill="#696969" />
<rect x="66" y="730" width="1" height="26" fill="#696969" />
<rect x="41" y="730" width="25" height="1" fill="#ffffff" />
<rect x="41" y="730" width="1" height="25" fill="#ffffff" />
<rect x="42" y="754" width="24" height="1" fill="#a0a0a0" />
<rect x="65" y="731" width="1" height="24" fill="#a0a0a0" />
<rect x="42" y="731" width="23" height="1" fill="#e3e3e3" />
<rect x="42" y="731" width="1" height="23" fill="#e3e3e3" />
<rect x="95" y="730" width="26" height="26" fill="#f0f0f0" />
<rect x="95" y="755" width="26" height="1" fill="#696969" />
<rect x="120" y="730" width="1" height="26" fill="#696969" />
<rect x="95" y="730" width="25" height="1" fill="#ffffff" />
<rect x="95" y="730" width="1" height="25" fill="#ffffff" />
<rect x="96" y="754" width="24" height="1" fill="#a0a0a0" />
<rect x="119" y="731" width="1" height="24" fill="#a0a0a0" />
<rect x="96" y="731" width="23" height="1" fill="#e3e3e3" />
<rect x="96" y="731" width="1" height="23" fill="#e3e3e3" />
<g shape-rendering="geometricPrecision"><path d="M19.500 736 h5.500 v5.500 h5 v-5.500 h5.500 v16 h-5.500 v-5.500 h-5 v5.500 h-5.500z" fill="url(#pStripeR)" stroke="#300" stroke-width="1.300"/></g>
<text x="48" y="748" font-family='"Liberation Serif", serif' font-size="17" fill="#0000e0" font-weight="bold" font-style="italic">F</text>
<g shape-rendering="geometricPrecision"><path d="M101.500 736.500 h12 l1.500 1.500 v11 h-13.500z" fill="#808000" stroke="#000" stroke-width="1.200"/><rect x="104" y="737" width="7" height="4.500" fill="#fff"/><rect x="104.500" y="744" width="7" height="5" fill="#000"/><rect x="109" y="745" width="2" height="3" fill="#fff"/></g>
<g shape-rendering="geometricPrecision"><circle cx="25.5" cy="772" r="5.5" fill="#fff"/><path d="M21.3 776.2 A6 6 0 0 1 29.7 767.8" stroke="#a0a0a0" stroke-width="1" fill="none"/><path d="M22.0 775.5 A5 5 0 0 1 29.0 768.5" stroke="#696969" stroke-width="1" fill="none"/><path d="M21.3 776.2 A6 6 0 0 0 29.7 767.8" stroke="#ffffff" stroke-width="1" fill="none"/><path d="M22.0 775.5 A5 5 0 0 0 29.0 768.5" stroke="#e3e3e3" stroke-width="1" fill="none"/><circle cx="25.5" cy="772" r="2" fill="#000"/></g>
<g shape-rendering="geometricPrecision"><circle cx="74.5" cy="772" r="5.5" fill="#fff"/><path d="M70.3 776.2 A6 6 0 0 1 78.7 767.8" stroke="#a0a0a0" stroke-width="1" fill="none"/><path d="M71.0 775.5 A5 5 0 0 1 78.0 768.5" stroke="#696969" stroke-width="1" fill="none"/><path d="M70.3 776.2 A6 6 0 0 0 78.7 767.8" stroke="#ffffff" stroke-width="1" fill="none"/><path d="M71.0 775.5 A5 5 0 0 0 78.0 768.5" stroke="#e3e3e3" stroke-width="1" fill="none"/></g>
<g shape-rendering="geometricPrecision"><circle cx="124.5" cy="771" r="5.5" fill="#fff"/><path d="M120.3 775.2 A6 6 0 0 1 128.7 766.8" stroke="#a0a0a0" stroke-width="1" fill="none"/><path d="M121.0 774.5 A5 5 0 0 1 128.0 767.5" stroke="#696969" stroke-width="1" fill="none"/><path d="M120.3 775.2 A6 6 0 0 0 128.7 766.8" stroke="#ffffff" stroke-width="1" fill="none"/><path d="M121.0 774.5 A5 5 0 0 0 128.0 767.5" stroke="#e3e3e3" stroke-width="1" fill="none"/></g>
<text x="38" y="783.5" font-family='"Liberation Sans", sans-serif' font-size="16" fill="#000" textLength="12" lengthAdjust="spacingAndGlyphs" font-weight="bold" >T</text>
<text x="53" y="783.5" font-family='"Liberation Sans", sans-serif' font-size="16" fill="#000" textLength="12" lengthAdjust="spacingAndGlyphs" font-weight="bold" >T</text>
<text x="87" y="783.5" font-family='"Liberation Sans", sans-serif' font-size="16" fill="#000" textLength="12" lengthAdjust="spacingAndGlyphs" font-weight="bold" >T</text>
<text x="102" y="783.5" font-family='"Liberation Sans", sans-serif' font-size="16" fill="#000" textLength="12" lengthAdjust="spacingAndGlyphs" font-weight="bold" >T</text>
<text x="137" y="783.5" font-family='"Liberation Sans", sans-serif' font-size="16" fill="#000" textLength="12" lengthAdjust="spacingAndGlyphs" font-weight="bold" >T</text>
<text x="152" y="783.5" font-family='"Liberation Sans", sans-serif' font-size="16" fill="#000" textLength="12" lengthAdjust="spacingAndGlyphs" font-weight="bold" >T</text>
<text x="43" y="764.5" font-family='"Liberation Sans", sans-serif' font-size="9.5" fill="#e00000" textLength="21" lengthAdjust="spacingAndGlyphs" >Auto</text>
<rect x="42" y="768" width="22" height="1" fill="#e00000" />
<rect x="51" y="766" width="1" height="5" fill="#e00000" />
<rect x="54" y="766" width="1" height="5" fill="#e00000" />
<g shape-rendering="geometricPrecision"><path d="M48 767.0l3 1.500l-3 1.500zM58 767.0l-3 1.500l3 1.500z" fill="#e00000"/></g>
<rect x="91" y="768" width="22" height="1" fill="#e00000" />
<rect x="100" y="766" width="1" height="5" fill="#e00000" />
<rect x="103" y="766" width="1" height="5" fill="#e00000" />
<g shape-rendering="geometricPrecision"><path d="M97 767.0l3 1.500l-3 1.500zM107 767.0l-3 1.500l3 1.500z" fill="#e00000"/></g>
<rect x="143" y="767" width="17" height="1" fill="#e00000" />
<rect x="143" y="764" width="1" height="7" fill="#e00000" />
<rect x="159" y="764" width="1" height="7" fill="#e00000" />
<g shape-rendering="geometricPrecision"><path d="M144 767.500l3 -1.500v3zM159 767.500l-3 -1.500v3z" fill="#e00000"/></g>
<text x="14" y="798.5" font-family='"Liberation Mono", monospace' font-size="12" fill="#000" textLength="59.3" lengthAdjust="spacingAndGlyphs">Text Space</text>
<rect x="115" y="787" width="52" height="16" fill="#f0f0f0" />
<rect x="115" y="802" width="52" height="1" fill="#ffffff" />
<rect x="166" y="787" width="1" height="16" fill="#ffffff" />
<rect x="115" y="787" width="51" height="1" fill="#a0a0a0" />
<rect x="115" y="787" width="1" height="15" fill="#a0a0a0" />
<rect x="116" y="801" width="50" height="1" fill="#e3e3e3" />
<rect x="165" y="788" width="1" height="14" fill="#e3e3e3" />
<rect x="116" y="788" width="49" height="1" fill="#696969" />
<rect x="116" y="788" width="1" height="13" fill="#696969" />
<text x="118" y="799" font-family='"Liberation Mono", monospace' font-size="12" fill="#808080" textLength="29.3" lengthAdjust="spacingAndGlyphs"><tspan font-family='"Liberation Sans", sans-serif' font-size="11.5">2</tspan>.<tspan font-family='"Liberation Sans", sans-serif' font-size="11.5">373</tspan></text>
<text x="14" y="817" font-family='"Liberation Mono", monospace' font-size="12" fill="#000" textLength="35.3" lengthAdjust="spacingAndGlyphs">Height</text>
<rect x="115" y="808" width="52" height="16" fill="#ffffff" />
<rect x="115" y="823" width="52" height="1" fill="#ffffff" />
<rect x="166" y="808" width="1" height="16" fill="#ffffff" />
<rect x="115" y="808" width="51" height="1" fill="#a0a0a0" />
<rect x="115" y="808" width="1" height="15" fill="#a0a0a0" />
<rect x="116" y="822" width="50" height="1" fill="#e3e3e3" />
<rect x="165" y="809" width="1" height="14" fill="#e3e3e3" />
<rect x="116" y="809" width="49" height="1" fill="#696969" />
<rect x="116" y="809" width="1" height="13" fill="#696969" />
<text x="118" y="820" font-family='"Liberation Mono", monospace' font-size="12" fill="#000" textLength="47.3" lengthAdjust="spacingAndGlyphs"><tspan font-family='"Liberation Sans", sans-serif' font-size="11.5">23</tspan>.<tspan font-family='"Liberation Sans", sans-serif' font-size="11.5">565</tspan>MM</text>
<text x="14" y="837.5" font-family='"Liberation Mono", monospace' font-size="12" fill="#000" textLength="23.3" lengthAdjust="spacingAndGlyphs">Text</text>
<rect x="14" y="846" width="152" height="53" fill="#f0f0f0" />
<rect x="14" y="898" width="152" height="1" fill="#ffffff" />
<rect x="165" y="846" width="1" height="53" fill="#ffffff" />
<rect x="14" y="846" width="151" height="1" fill="#a0a0a0" />
<rect x="14" y="846" width="1" height="52" fill="#a0a0a0" />
<rect x="15" y="897" width="150" height="1" fill="#e3e3e3" />
<rect x="164" y="847" width="1" height="51" fill="#e3e3e3" />
<rect x="15" y="847" width="149" height="1" fill="#696969" />
<rect x="15" y="847" width="1" height="50" fill="#696969" />
<rect x="16" y="848" width="132" height="32" fill="#ffffff" />
<text x="17" y="858" font-family='"Liberation Mono", monospace' font-size="12" fill="#000" textLength="23.3" lengthAdjust="spacingAndGlyphs">TEXT</text>
<g shape-rendering="geometricPrecision"><path d="M153.0 856.75l3.5 -3.5l3.5 3.5" fill="none" stroke="#b0b0b0" stroke-width="1.6"/></g>
<g shape-rendering="geometricPrecision"><path d="M153.0 869.75l3.5 3.5l3.5 -3.5" fill="none" stroke="#b0b0b0" stroke-width="1.6"/></g>
<g shape-rendering="geometricPrecision"><path d="M25.75 884.5l-3.5 3.5l3.5 3.5" fill="none" stroke="#b0b0b0" stroke-width="1.6"/></g>
<g shape-rendering="geometricPrecision"><path d="M138.25 884.5l3.5 3.5l-3.5 3.5" fill="none" stroke="#b0b0b0" stroke-width="1.6"/></g>
<rect x="14" y="904" width="12" height="12" fill="#ffffff" />
<rect x="14" y="915" width="12" height="1" fill="#ffffff" />
<rect x="25" y="904" width="1" height="12" fill="#ffffff" />
<rect x="14" y="904" width="11" height="1" fill="#a0a0a0" />
<rect x="14" y="904" width="1" height="11" fill="#a0a0a0" />
<rect x="15" y="914" width="10" height="1" fill="#e3e3e3" />
<rect x="24" y="905" width="1" height="10" fill="#e3e3e3" />
<rect x="15" y="905" width="9" height="1" fill="#696969" />
<rect x="15" y="905" width="1" height="9" fill="#696969" />
<text x="32" y="914" font-family='"Liberation Mono", monospace' font-size="12" fill="#000" textLength="119.3" lengthAdjust="spacingAndGlyphs">Enable variable Text</text>
<rect x="277" y="80" width="30" height="30" fill="url(#pChk)" />
<rect x="277" y="109" width="30" height="1" fill="#ffffff" />
<rect x="306" y="80" width="1" height="30" fill="#ffffff" />
<rect x="277" y="80" width="29" height="1" fill="#696969" />
<rect x="277" y="80" width="1" height="29" fill="#696969" />
<rect x="278" y="108" width="28" height="1" fill="#e3e3e3" />
<rect x="305" y="81" width="1" height="28" fill="#e3e3e3" />
<rect x="278" y="81" width="27" height="1" fill="#a0a0a0" />
<rect x="278" y="81" width="1" height="27" fill="#a0a0a0" />
<rect x="307" y="80" width="30" height="30" fill="#f0f0f0" />
<rect x="307" y="109" width="30" height="1" fill="#696969" />
<rect x="336" y="80" width="1" height="30" fill="#696969" />
<rect x="307" y="80" width="29" height="1" fill="#ffffff" />
<rect x="307" y="80" width="1" height="29" fill="#ffffff" />
<rect x="308" y="108" width="28" height="1" fill="#a0a0a0" />
<rect x="335" y="81" width="1" height="28" fill="#a0a0a0" />
<rect x="308" y="81" width="27" height="1" fill="#e3e3e3" />
<rect x="308" y="81" width="1" height="27" fill="#e3e3e3" />
<rect x="337" y="80" width="30" height="30" fill="#f0f0f0" />
<rect x="337" y="109" width="30" height="1" fill="#696969" />
<rect x="366" y="80" width="1" height="30" fill="#696969" />
<rect x="337" y="80" width="29" height="1" fill="#ffffff" />
<rect x="337" y="80" width="1" height="29" fill="#ffffff" />
<rect x="338" y="108" width="28" height="1" fill="#a0a0a0" />
<rect x="365" y="81" width="1" height="28" fill="#a0a0a0" />
<rect x="338" y="81" width="27" height="1" fill="#e3e3e3" />
<rect x="338" y="81" width="1" height="27" fill="#e3e3e3" />
<rect x="373" y="80" width="30" height="30" fill="#f0f0f0" />
<rect x="373" y="109" width="30" height="1" fill="#696969" />
<rect x="402" y="80" width="1" height="30" fill="#696969" />
<rect x="373" y="80" width="29" height="1" fill="#ffffff" />
<rect x="373" y="80" width="1" height="29" fill="#ffffff" />
<rect x="374" y="108" width="28" height="1" fill="#a0a0a0" />
<rect x="401" y="81" width="1" height="28" fill="#a0a0a0" />
<rect x="374" y="81" width="27" height="1" fill="#e3e3e3" />
<rect x="374" y="81" width="1" height="27" fill="#e3e3e3" />
<rect x="403" y="80" width="30" height="30" fill="#f0f0f0" />
<rect x="403" y="109" width="30" height="1" fill="#696969" />
<rect x="432" y="80" width="1" height="30" fill="#696969" />
<rect x="403" y="80" width="29" height="1" fill="#ffffff" />
<rect x="403" y="80" width="1" height="29" fill="#ffffff" />
<rect x="404" y="108" width="28" height="1" fill="#a0a0a0" />
<rect x="431" y="81" width="1" height="28" fill="#a0a0a0" />
<rect x="404" y="81" width="27" height="1" fill="#e3e3e3" />
<rect x="404" y="81" width="1" height="27" fill="#e3e3e3" />
<rect x="433" y="80" width="30" height="30" fill="#f0f0f0" />
<rect x="433" y="109" width="30" height="1" fill="#696969" />
<rect x="462" y="80" width="1" height="30" fill="#696969" />
<rect x="433" y="80" width="29" height="1" fill="#ffffff" />
<rect x="433" y="80" width="1" height="29" fill="#ffffff" />
<rect x="434" y="108" width="28" height="1" fill="#a0a0a0" />
<rect x="461" y="81" width="1" height="28" fill="#a0a0a0" />
<rect x="434" y="81" width="27" height="1" fill="#e3e3e3" />
<rect x="434" y="81" width="1" height="27" fill="#e3e3e3" />
<rect x="469" y="80" width="30" height="30" fill="#f0f0f0" />
<rect x="469" y="109" width="30" height="1" fill="#696969" />
<rect x="498" y="80" width="1" height="30" fill="#696969" />
<rect x="469" y="80" width="29" height="1" fill="#ffffff" />
<rect x="469" y="80" width="1" height="29" fill="#ffffff" />
<rect x="470" y="108" width="28" height="1" fill="#a0a0a0" />
<rect x="497" y="81" width="1" height="28" fill="#a0a0a0" />
<rect x="470" y="81" width="27" height="1" fill="#e3e3e3" />
<rect x="470" y="81" width="1" height="27" fill="#e3e3e3" />
<rect x="505" y="80" width="30" height="30" fill="#f0f0f0" />
<rect x="505" y="109" width="30" height="1" fill="#696969" />
<rect x="534" y="80" width="1" height="30" fill="#696969" />
<rect x="505" y="80" width="29" height="1" fill="#ffffff" />
<rect x="505" y="80" width="1" height="29" fill="#ffffff" />
<rect x="506" y="108" width="28" height="1" fill="#a0a0a0" />
<rect x="533" y="81" width="1" height="28" fill="#a0a0a0" />
<rect x="506" y="81" width="27" height="1" fill="#e3e3e3" />
<rect x="506" y="81" width="1" height="27" fill="#e3e3e3" />
<rect x="550" y="80" width="30" height="30" fill="#f0f0f0" />
<rect x="550" y="109" width="30" height="1" fill="#696969" />
<rect x="579" y="80" width="1" height="30" fill="#696969" />
<rect x="550" y="80" width="29" height="1" fill="#ffffff" />
<rect x="550" y="80" width="1" height="29" fill="#ffffff" />
<rect x="551" y="108" width="28" height="1" fill="#a0a0a0" />
<rect x="578" y="81" width="1" height="28" fill="#a0a0a0" />
<rect x="551" y="81" width="27" height="1" fill="#e3e3e3" />
<rect x="551" y="81" width="1" height="27" fill="#e3e3e3" />
<rect x="581" y="80" width="30" height="30" fill="#f0f0f0" />
<rect x="581" y="109" width="30" height="1" fill="#696969" />
<rect x="610" y="80" width="1" height="30" fill="#696969" />
<rect x="581" y="80" width="29" height="1" fill="#ffffff" />
<rect x="581" y="80" width="1" height="29" fill="#ffffff" />
<rect x="582" y="108" width="28" height="1" fill="#a0a0a0" />
<rect x="609" y="81" width="1" height="28" fill="#a0a0a0" />
<rect x="582" y="81" width="27" height="1" fill="#e3e3e3" />
<rect x="582" y="81" width="1" height="27" fill="#e3e3e3" />
<rect x="620" y="80" width="30" height="30" fill="#f0f0f0" />
<rect x="620" y="109" width="30" height="1" fill="#696969" />
<rect x="649" y="80" width="1" height="30" fill="#696969" />
<rect x="620" y="80" width="29" height="1" fill="#ffffff" />
<rect x="620" y="80" width="1" height="29" fill="#ffffff" />
<rect x="621" y="108" width="28" height="1" fill="#a0a0a0" />
<rect x="648" y="81" width="1" height="28" fill="#a0a0a0" />
<rect x="621" y="81" width="27" height="1" fill="#e3e3e3" />
<rect x="621" y="81" width="1" height="27" fill="#e3e3e3" />
<rect x="652" y="80" width="30" height="30" fill="#f0f0f0" />
<rect x="652" y="109" width="30" height="1" fill="#696969" />
<rect x="681" y="80" width="1" height="30" fill="#696969" />
<rect x="652" y="80" width="29" height="1" fill="#ffffff" />
<rect x="652" y="80" width="1" height="29" fill="#ffffff" />
<rect x="653" y="108" width="28" height="1" fill="#a0a0a0" />
<rect x="680" y="81" width="1" height="28" fill="#a0a0a0" />
<rect x="653" y="81" width="27" height="1" fill="#e3e3e3" />
<rect x="653" y="81" width="1" height="27" fill="#e3e3e3" />
<rect x="281.5" y="82.5" width="4" height="4" fill="#000" />
<rect x="282.5" y="83.5" width="2" height="2" fill="#fff" />
<rect x="281.5" y="92.5" width="4" height="4" fill="#000" />
<rect x="282.5" y="93.5" width="2" height="2" fill="#fff" />
<rect x="281.5" y="102.5" width="4" height="4" fill="#000" />
<rect x="282.5" y="103.5" width="2" height="2" fill="#fff" />
<rect x="290.5" y="82.5" width="4" height="4" fill="#000" />
<rect x="291.5" y="83.5" width="2" height="2" fill="#fff" />
<rect x="290.5" y="102.5" width="4" height="4" fill="#000" />
<rect x="291.5" y="103.5" width="2" height="2" fill="#fff" />
<rect x="299.5" y="82.5" width="4" height="4" fill="#000" />
<rect x="300.5" y="83.5" width="2" height="2" fill="#fff" />
<rect x="299.5" y="92.5" width="4" height="4" fill="#000" />
<rect x="300.5" y="93.5" width="2" height="2" fill="#fff" />
<rect x="299.5" y="102.5" width="4" height="4" fill="#000" />
<rect x="300.5" y="103.5" width="2" height="2" fill="#fff" />
<g shape-rendering="geometricPrecision"><rect x="286.500" y="88.500" width="9" height="7" fill="none" stroke="#0000d0" stroke-width="1.200"/><circle cx="296.500" cy="97" r="4" fill="none" stroke="#0000d0" stroke-width="1.200"/></g>
<rect x="311.5" y="82.5" width="4" height="4" fill="#000" />
<rect x="312.5" y="83.5" width="2" height="2" fill="#fff" />
<rect x="318.5" y="82.5" width="4" height="4" fill="#000" />
<rect x="319.5" y="83.5" width="2" height="2" fill="#fff" />
<rect x="324.5" y="82.5" width="4" height="4" fill="#000" />
<rect x="325.5" y="83.5" width="2" height="2" fill="#fff" />
<rect x="311.5" y="93.5" width="4" height="4" fill="#000" />
<rect x="312.5" y="94.5" width="2" height="2" fill="#fff" />
<rect x="318.5" y="93.5" width="4" height="4" fill="#000" />
<rect x="319.5" y="94.5" width="2" height="2" fill="#fff" />
<rect x="324.5" y="93.5" width="4" height="4" fill="#000" />
<rect x="325.5" y="94.5" width="2" height="2" fill="#fff" />
<g shape-rendering="geometricPrecision"><rect x="315.500" y="86.500" width="9" height="7" fill="none" stroke="#0000d0" stroke-width="1.200"/><circle cx="328.500" cy="97" r="5.500" fill="none" stroke="#000" stroke-width="1.100"/><path d="M326 88.500 q3 -2.500 5.500 .5" fill="none" stroke="#0000d0" stroke-width="1.200"/><path d="M332.500 90.500 l-2.800 -.4 2.400 -2.400z" fill="#0000d0"/></g>
<rect x="341.5" y="84.5" width="4" height="4" fill="#000" />
<rect x="342.5" y="85.5" width="2" height="2" fill="#fff" />
<rect x="341.5" y="92.5" width="4" height="4" fill="#000" />
<rect x="342.5" y="93.5" width="2" height="2" fill="#fff" />
<rect x="341.5" y="99.5" width="4" height="4" fill="#000" />
<rect x="342.5" y="100.5" width="2" height="2" fill="#fff" />
<rect x="349.5" y="84.5" width="4" height="4" fill="#000" />
<rect x="350.5" y="85.5" width="2" height="2" fill="#fff" />
<rect x="349.5" y="99.5" width="4" height="4" fill="#000" />
<rect x="350.5" y="100.5" width="2" height="2" fill="#fff" />
<rect x="357.5" y="84.5" width="4" height="4" fill="#000" />
<rect x="358.5" y="85.5" width="2" height="2" fill="#fff" />
<rect x="357.5" y="92.5" width="4" height="4" fill="#000" />
<rect x="358.5" y="93.5" width="2" height="2" fill="#fff" />
<rect x="357.5" y="99.5" width="4" height="4" fill="#000" />
<rect x="358.5" y="100.5" width="2" height="2" fill="#fff" />
<g shape-rendering="geometricPrecision"><rect x="346.500" y="90.500" width="10" height="7" fill="none" stroke="#0000d0" stroke-width="1.200"/><path d="M349.500 92l4 4M353.500 92l-4 4" stroke="#e00000" stroke-width="1.200"/></g>
<g shape-rendering="geometricPrecision"><path d="M384.500 94 v-3 a3.500 3.800 0 0 1 7 0 v3" fill="none" stroke="#000" stroke-width="1.800"/><rect x="382.500" y="94" width="11" height="7.500" fill="#808080" stroke="#000" stroke-width="1.200"/></g>
<g shape-rendering="geometricPrecision"><path d="M414.500 94 v-2 a3.500 3.800 0 0 1 7 -1" fill="none" stroke="#a0a0a0" stroke-width="2"/><rect x="412" y="93" width="12" height="8.500" fill="#a0a0a0"/></g>
<g shape-rendering="geometricPrecision"><path d="M442 93 l2 -4 4 -2.500 5 1.500 3 4 v11 h-10 v-3 h-4z" fill="#a0a0a0"/><path d="M444.500 91 a2 2 0 0 1 3.500 -1" fill="none" stroke="#f0f0f0" stroke-width="1"/></g>
<rect x="478" y="87" width="1" height="18" fill="#000" />
<rect x="473" y="99" width="19" height="1" fill="#000" />
<rect x="485" y="86" width="9" height="1" fill="#000" />
<rect x="485" y="93" width="9" height="1" fill="#000" />
<rect x="485" y="86" width="1" height="8" fill="#000" />
<rect x="493" y="86" width="1" height="8" fill="#000" />
<rect x="486" y="87" width="7" height="6" fill="#fff" />
<g shape-rendering="geometricPrecision"><path d="M488 93.500 l-6 5 M482 98.500 v-3 M482 98.500 h3" stroke="#0000e0" stroke-width="1.100" fill="none"/></g>
<rect x="510" y="83" width="12" height="9" fill="#000000" />
<rect x="512" y="85" width="12" height="9" fill="#ff0000" />
<rect x="514" y="87" width="12" height="9" fill="#00c000" />
<rect x="516" y="89" width="12" height="9" fill="#0000c0" />
<rect x="518" y="91" width="12" height="9" fill="#00ffff" />
<g shape-rendering="geometricPrecision"><path d="M524 92.500 v14 l3 -3 2 4.500 2 -1 -2 -4.500 h4.500z" fill="#fff" stroke="#000" stroke-width="1"/></g>
<g shape-rendering="geometricPrecision"><path d="M552.500 103.500 H562 V86z" fill="#8b0000" stroke="#600" stroke-width=".6"/><path d="M567.500 86 V103.500 H576.500z" fill="#c8c8c8" stroke="#000" stroke-width="1"/><path d="M564.500 84 V107" stroke="#e00000" stroke-width="1.200" stroke-dasharray="6 2 2 2"/></g>
<g shape-rendering="geometricPrecision"><path d="M604.500 83 V91.500 H587.500z" fill="#8b0000" stroke="#600" stroke-width=".6"/><path d="M587.500 97.500 H604.500 V105.500z" fill="#c8c8c8" stroke="#000" stroke-width="1"/><path d="M586 94.500 H607" stroke="#e00000" stroke-width="1.200" stroke-dasharray="7 2 2 2"/></g>
<g shape-rendering="geometricPrecision"><g fill="none" stroke="#000" stroke-width="1.500"><path d="M623 96 Q635 86 647 96 Q635 105 623 96z"/><circle cx="635" cy="95.5" r="4.200" fill="#888" stroke-width="1.200"/><circle cx="635" cy="95.5" r="1.600" fill="#000" stroke="none"/><path d="M626 91l-2 -2.500M629.5 89l-1.200 -3M633.5 88l-.4 -3.200M637.5 88l.6 -3.200M641 89l1.500 -3M644.5 91l2.200 -2.500" stroke-width="1.200"/><path d="M627 99.5 Q635 107 643 99.5" stroke-width="1"/></g></g>
<g shape-rendering="geometricPrecision"><g fill="none" stroke="#000" stroke-width="1.500"><path d="M654.5 96 Q666.5 86 678.5 96 Q666.5 105 654.5 96z"/><circle cx="666.5" cy="95.5" r="4.200" fill="#aaa" stroke-width="1.200"/><circle cx="666.5" cy="95.5" r="1.600" fill="#777" stroke="none"/><path d="M657.5 91l-2 -2.500M661.0 89l-1.200 -3M665.0 88l-.4 -3.200M669.0 88l.6 -3.200M672.5 89l1.500 -3M676.0 91l2.200 -2.500" stroke-width="1.200"/><path d="M658.5 99.5 Q666.5 107 674.5 99.5" stroke-width="1"/></g></g>
<rect x="236" y="83" width="32" height="1" fill="#a0a0a0" />
<rect x="236" y="84" width="32" height="1" fill="#ffffff" />
<rect x="236" y="86" width="32" height="1" fill="#a0a0a0" />
<rect x="236" y="87" width="32" height="1" fill="#ffffff" />
<rect x="237" y="88" width="31" height="31" fill="url(#pChk)" />
<rect x="237" y="118" width="31" height="1" fill="#ffffff" />
<rect x="267" y="88" width="1" height="31" fill="#ffffff" />
<rect x="237" y="88" width="30" height="1" fill="#a0a0a0" />
<rect x="237" y="88" width="1" height="30" fill="#a0a0a0" />
<rect x="234" y="554" width="36" height="1" fill="#a0a0a0" />
<rect x="234" y="555" width="36" height="1" fill="#ffffff" />
<g shape-rendering="geometricPrecision">
<path d="M246.500 94.500 L260.500 101.500 L255 104 L259 111 L255.500 113 L251.500 106 L247.500 110z" fill="url(#gArrow)" stroke="#000" stroke-width="1.200" stroke-linejoin="round"/>
<path d="M241.500 130 Q250 124 260.500 125" fill="none" stroke="#777" stroke-width="1.200"/>
<path d="M248.500 128 L260.500 138 L253.500 139.500 L249.500 144z" fill="url(#gArrow)" stroke="#555" stroke-width="1.100" stroke-linejoin="round"/>
<rect x="247.500" y="125.500" width="3" height="3" fill="#cfe0ff" stroke="#2a50c0" stroke-width=".8"/>
<path d="M245.500 158.500 L258.500 171.500" stroke="#000" stroke-width="1.300"/><rect x="244" y="157" width="3" height="3" fill="#e8f0ff" stroke="#4a70c8" stroke-width=".8"/><rect x="257" y="170" width="3" height="3" fill="#e8f0ff" stroke="#4a70c8" stroke-width=".8"/>
<path d="M250 185.500 Q244 190 243.500 199 Q247 207 256 206.500 Q262.500 204 261.500 198 Q258 193.500 253.500 194 Q249.500 190 250 185.500z" fill="url(#gY)" stroke="#5a5a30" stroke-width="1"/>
<rect x="249.5" y="189" width="2.600" height="2.600" fill="#e8f0ff" stroke="#2a60c8" stroke-width=".8"/>
<rect x="242.5" y="198.5" width="2.600" height="2.600" fill="#e8f0ff" stroke="#2a60c8" stroke-width=".8"/>
<rect x="256.5" y="205" width="2.600" height="2.600" fill="#e8f0ff" stroke="#2a60c8" stroke-width=".8"/>
<rect x="243" y="219" width="18.500" height="17.500" fill="url(#gY)" stroke="#5a5a30" stroke-width="1"/>
<rect x="241.5" y="217.5" width="2.600" height="2.600" fill="#e8f0ff" stroke="#4a70c8" stroke-width=".8"/>
<rect x="260" y="217.5" width="2.600" height="2.600" fill="#e8f0ff" stroke="#4a70c8" stroke-width=".8"/>
<rect x="241.5" y="235" width="2.600" height="2.600" fill="#e8f0ff" stroke="#4a70c8" stroke-width=".8"/>
<rect x="260" y="235" width="2.600" height="2.600" fill="#e8f0ff" stroke="#4a70c8" stroke-width=".8"/>
<circle cx="252.500" cy="259" r="10" fill="url(#gY)" stroke="#5a5a30" stroke-width="1"/><rect x="251.200" y="247.700" width="2.600" height="2.600" fill="#e8f0ff" stroke="#2a60c8" stroke-width=".8"/>
<ellipse cx="252.500" cy="290" rx="10" ry="6.300" fill="url(#gY)" stroke="#5a5a30" stroke-width="1"/><rect x="251.200" y="282.600" width="2.600" height="2.600" fill="#e8f0ff" stroke="#2a60c8" stroke-width=".8"/>
<path d="M241.500 320.500 L249.700 311.700 L260.500 311.700 L261.700 326.300 L249.700 330.500z" fill="url(#gY)" stroke="#5a5a30" stroke-width="1"/>
<rect x="240.2" y="319.2" width="2.600" height="2.600" fill="#e8f0ff" stroke="#2a60c8" stroke-width=".8"/>
<rect x="248.4" y="310.4" width="2.600" height="2.600" fill="#e8f0ff" stroke="#2a60c8" stroke-width=".8"/>
<rect x="259.2" y="310.4" width="2.600" height="2.600" fill="#e8f0ff" stroke="#2a60c8" stroke-width=".8"/>
<rect x="260.4" y="325" width="2.600" height="2.600" fill="#e8f0ff" stroke="#2a60c8" stroke-width=".8"/>
<rect x="248.4" y="329.2" width="2.600" height="2.600" fill="#e8f0ff" stroke="#2a60c8" stroke-width=".8"/>
<path d="M245.800 360 v-10 h-1.800 v-2.600 h1.800 v-1.400 q0 -3 3 -3 h2 v2.600 h-1.600 v1.800 h1.600 v2.600 h-1.600 v10z" fill="#ffd21e" stroke="#4a3a00" stroke-width=".9"/>
<path d="M252.800 341.800 h8.400 v2.600 h-2.800 v12.600 h2.800 v2.600 h-8.400 v-2.600 h2.800 v-12.600 h-2.800z" fill="#2aa0d0" stroke="#0a3a5a" stroke-width=".9"/>
<rect x="241.500" y="372.500" width="21.500" height="20" fill="#78b8f0"/><path d="M241.500 382 l5 -4 5 3 5 -4 6.500 5 v6 h-21.500z" fill="#2858c8"/><path d="M241.500 386 q10 -3 21.500 0 v6.500 h-21.500z" fill="#c8d878"/><path d="M242 390 l3 -9 2 4 2 -6 2.500 6 1.500 -3 2 8z" fill="#106020"/><rect x="241.500" y="372.500" width="21.500" height="3" fill="#a8d4f8"/>
<path d="M246 405 L258 402.500 Q263.500 411 260.500 419 L249 423 Q250 418 248.500 414 Q247 409 246 405z" fill="#fff" stroke="#222" stroke-width="1.100"/>
<path d="M250 407.500 l1.500 3.500 4 -2 -2 3.800 3.400 2 -4 .6 .2 4 -2.800 -3 -3 2.600 .8 -4 -3.600 -1.400 3.600 -1.600z" fill="#ffd21e" stroke="#806000" stroke-width=".7"/><path d="M241.500 414.500 h20.500" stroke="#2070c0" stroke-width="1"/><rect x="247.500" y="412.800" width="3.200" height="3.200" fill="#40a0e0" stroke="#1050a0" stroke-width=".6"/>
</g>
<rect x="243" y="439" width="2" height="9" fill="#222" />
<rect x="246" y="439" width="1" height="9" fill="#222" />
<rect x="248" y="439" width="1" height="9" fill="#222" />
<rect x="250" y="439" width="2" height="9" fill="#222" />
<rect x="253" y="439" width="1" height="9" fill="#222" />
<rect x="255" y="439" width="1" height="9" fill="#222" />
<rect x="257" y="439" width="2" height="9" fill="#222" />
<rect x="260" y="439" width="1" height="9" fill="#222" />
<text x="243" y="453.5" font-family='"Liberation Serif", serif' font-size="4.5" fill="#333" textLength="18" lengthAdjust="spacingAndGlyphs" >01234</text>
<g shape-rendering="geometricPrecision">
<circle cx="252.500" cy="475.500" r="10.300" fill="#fff" stroke="#8c8c8c" stroke-width="2.200"/><circle cx="252.500" cy="475.500" r="11.300" fill="none" stroke="#b8b8b8" stroke-width=".8"/><path d="M252.500 475.500 L248 470.500 M252.500 475.500 L258 474" stroke="#222" stroke-width="1"/><path d="M252.500 475.500 L249 481.500" stroke="#d04040" stroke-width=".7"/>
<rect x="248.300" y="496" width="8.400" height="21.500" rx="4.200" fill="#9a9a9a"/><circle cx="252.500" cy="500.500" r="3.300" fill="#e03050"/><circle cx="252.500" cy="506.700" r="3.300" fill="#f0c820"/><circle cx="252.500" cy="513" r="3.300" fill="#30a040"/>
<path d="M246 535 v7.500 M259 535 v7.500" stroke="#333" stroke-width="1.800"/><path d="M246 538.500 h3.500 M250.500 535.500 l5 3.500 h3.500" stroke="#333" stroke-width="1.100" fill="none"/>
</g>
<rect x="269" y="111" width="1178" height="854" fill="#ffffff" />
<rect x="269" y="111" width="1178" height="1" fill="#a0a0a0" />
<rect x="269" y="112" width="1178" height="1" fill="#696969" />
<rect x="269" y="111" width="1" height="854" fill="#a0a0a0" />
<rect x="270" y="112" width="1" height="852" fill="#696969" />
<rect x="269" y="964" width="1178" height="1" fill="#e3e3e3" />
<rect x="269" y="965" width="1178" height="1" fill="#ffffff" />
<rect x="1446" y="111" width="1" height="854" fill="#e3e3e3" />
<rect x="1447" y="111" width="1" height="855" fill="#ffffff" />
<rect x="1428" y="113" width="18" height="833" fill="#f0f0f0" />
<rect x="271" y="946" width="1175" height="18" fill="#f0f0f0" />
<rect x="1429" y="521" width="15" height="17" fill="#cdcdcd" />
<rect x="838" y="947" width="17" height="16" fill="#cdcdcd" />
<g shape-rendering="geometricPrecision"><path d="M1433.0 123.75l3.5 -3.5l3.5 3.5" fill="none" stroke="#505050" stroke-width="1.8"/></g>
<g shape-rendering="geometricPrecision"><path d="M1433.0 935.75l3.5 3.5l3.5 -3.5" fill="none" stroke="#505050" stroke-width="1.8"/></g>
<g shape-rendering="geometricPrecision"><path d="M280.75 951.0l-3.5 3.5l3.5 3.5" fill="none" stroke="#505050" stroke-width="1.8"/></g>
<g shape-rendering="geometricPrecision"><path d="M1417.75 951.0l3.5 3.5l-3.5 3.5" fill="none" stroke="#505050" stroke-width="1.8"/></g>
<rect x="290" y="132" width="1138" height="1" fill="#000" />
<rect x="290" y="133" width="1" height="813" fill="#000" />
<rect x="291" y="127" width="1" height="5" fill="#000" />
<rect x="298" y="127" width="1" height="5" fill="#000" />
<rect x="305" y="127" width="1" height="5" fill="#000" />
<rect x="312" y="122" width="1" height="10" fill="#000" />
<text x="312" y="120.5" font-family='"Liberation Sans", sans-serif' font-size="9.5" fill="#222" text-anchor="middle" >-100</text>
<rect x="320" y="127" width="1" height="5" fill="#000" />
<rect x="327" y="127" width="1" height="5" fill="#000" />
<rect x="334" y="127" width="1" height="5" fill="#000" />
<rect x="341" y="127" width="1" height="5" fill="#000" />
<rect x="349" y="124" width="1" height="8" fill="#000" />
<rect x="356" y="127" width="1" height="5" fill="#000" />
<rect x="363" y="127" width="1" height="5" fill="#000" />
<rect x="370" y="127" width="1" height="5" fill="#000" />
<rect x="378" y="127" width="1" height="5" fill="#000" />
<rect x="385" y="122" width="1" height="10" fill="#000" />
<text x="385" y="120.5" font-family='"Liberation Sans", sans-serif' font-size="9.5" fill="#222" text-anchor="middle" >-90</text>
<rect x="392" y="127" width="1" height="5" fill="#000" />
<rect x="399" y="127" width="1" height="5" fill="#000" />
<rect x="406" y="127" width="1" height="5" fill="#000" />
<rect x="414" y="127" width="1" height="5" fill="#000" />
<rect x="421" y="124" width="1" height="8" fill="#000" />
<rect x="428" y="127" width="1" height="5" fill="#000" />
<rect x="435" y="127" width="1" height="5" fill="#000" />
<rect x="443" y="127" width="1" height="5" fill="#000" />
<rect x="450" y="127" width="1" height="5" fill="#000" />
<rect x="457" y="122" width="1" height="10" fill="#000" />
<text x="457" y="120.5" font-family='"Liberation Sans", sans-serif' font-size="9.5" fill="#222" text-anchor="middle" >-80</text>
<rect x="464" y="127" width="1" height="5" fill="#000" />
<rect x="472" y="127" width="1" height="5" fill="#000" />
<rect x="479" y="127" width="1" height="5" fill="#000" />
<rect x="486" y="127" width="1" height="5" fill="#000" />
<rect x="493" y="124" width="1" height="8" fill="#000" />
<rect x="501" y="127" width="1" height="5" fill="#000" />
<rect x="508" y="127" width="1" height="5" fill="#000" />
<rect x="515" y="127" width="1" height="5" fill="#000" />
<rect x="522" y="127" width="1" height="5" fill="#000" />
<rect x="530" y="122" width="1" height="10" fill="#000" />
<text x="530" y="120.5" font-family='"Liberation Sans", sans-serif' font-size="9.5" fill="#222" text-anchor="middle" >-70</text>
<rect x="537" y="127" width="1" height="5" fill="#000" />
<rect x="544" y="127" width="1" height="5" fill="#000" />
<rect x="551" y="127" width="1" height="5" fill="#000" />
<rect x="559" y="127" width="1" height="5" fill="#000" />
<rect x="566" y="124" width="1" height="8" fill="#000" />
<rect x="573" y="127" width="1" height="5" fill="#000" />
<rect x="580" y="127" width="1" height="5" fill="#000" />
<rect x="588" y="127" width="1" height="5" fill="#000" />
<rect x="595" y="127" width="1" height="5" fill="#000" />
<rect x="602" y="122" width="1" height="10" fill="#000" />
<text x="602" y="120.5" font-family='"Liberation Sans", sans-serif' font-size="9.5" fill="#222" text-anchor="middle" >-60</text>
<rect x="609" y="127" width="1" height="5" fill="#000" />
<rect x="617" y="127" width="1" height="5" fill="#000" />
<rect x="624" y="127" width="1" height="5" fill="#000" />
<rect x="631" y="127" width="1" height="5" fill="#000" />
<rect x="638" y="124" width="1" height="8" fill="#000" />
<rect x="646" y="127" width="1" height="5" fill="#000" />
<rect x="653" y="127" width="1" height="5" fill="#000" />
<rect x="660" y="127" width="1" height="5" fill="#000" />
<rect x="667" y="127" width="1" height="5" fill="#000" />
<rect x="675" y="122" width="1" height="10" fill="#000" />
<text x="675" y="120.5" font-family='"Liberation Sans", sans-serif' font-size="9.5" fill="#222" text-anchor="middle" >-50</text>
<rect x="682" y="127" width="1" height="5" fill="#000" />
<rect x="689" y="127" width="1" height="5" fill="#000" />
<rect x="696" y="127" width="1" height="5" fill="#000" />
<rect x="704" y="127" width="1" height="5" fill="#000" />
<rect x="711" y="124" width="1" height="8" fill="#000" />
<rect x="718" y="127" width="1" height="5" fill="#000" />
<rect x="725" y="127" width="1" height="5" fill="#000" />
<rect x="733" y="127" width="1" height="5" fill="#000" />
<rect x="740" y="127" width="1" height="5" fill="#000" />
<rect x="747" y="122" width="1" height="10" fill="#000" />
<text x="747" y="120.5" font-family='"Liberation Sans", sans-serif' font-size="9.5" fill="#222" text-anchor="middle" >-40</text>
<rect x="754" y="127" width="1" height="5" fill="#000" />
<rect x="761" y="127" width="1" height="5" fill="#000" />
<rect x="769" y="127" width="1" height="5" fill="#000" />
<rect x="776" y="127" width="1" height="5" fill="#000" />
<rect x="783" y="124" width="1" height="8" fill="#000" />
<rect x="790" y="127" width="1" height="5" fill="#000" />
<rect x="798" y="127" width="1" height="5" fill="#000" />
<rect x="805" y="127" width="1" height="5" fill="#000" />
<rect x="812" y="127" width="1" height="5" fill="#000" />
<rect x="819" y="122" width="1" height="10" fill="#000" />
<text x="819" y="120.5" font-family='"Liberation Sans", sans-serif' font-size="9.5" fill="#222" text-anchor="middle" >-30</text>
<rect x="827" y="127" width="1" height="5" fill="#000" />
<rect x="834" y="127" width="1" height="5" fill="#000" />
<rect x="841" y="127" width="1" height="5" fill="#000" />
<rect x="848" y="127" width="1" height="5" fill="#000" />
<rect x="856" y="124" width="1" height="8" fill="#000" />
<rect x="863" y="127" width="1" height="5" fill="#000" />
<rect x="870" y="127" width="1" height="5" fill="#000" />
<rect x="877" y="127" width="1" height="5" fill="#000" />
<rect x="885" y="127" width="1" height="5" fill="#000" />
<rect x="892" y="122" width="1" height="10" fill="#000" />
<text x="892" y="120.5" font-family='"Liberation Sans", sans-serif' font-size="9.5" fill="#222" text-anchor="middle" >-20</text>
<rect x="899" y="127" width="1" height="5" fill="#000" />
<rect x="906" y="127" width="1" height="5" fill="#000" />
<rect x="914" y="127" width="1" height="5" fill="#000" />
<rect x="921" y="127" width="1" height="5" fill="#000" />
<rect x="928" y="124" width="1" height="8" fill="#000" />
<rect x="935" y="127" width="1" height="5" fill="#000" />
<rect x="943" y="127" width="1" height="5" fill="#000" />
<rect x="950" y="127" width="1" height="5" fill="#000" />
<rect x="957" y="127" width="1" height="5" fill="#000" />
<rect x="964" y="122" width="1" height="10" fill="#000" />
<text x="964" y="120.5" font-family='"Liberation Sans", sans-serif' font-size="9.5" fill="#222" text-anchor="middle" >-10</text>
<rect x="972" y="127" width="1" height="5" fill="#000" />
<rect x="979" y="127" width="1" height="5" fill="#000" />
<rect x="986" y="127" width="1" height="5" fill="#000" />
<rect x="993" y="127" width="1" height="5" fill="#000" />
<rect x="1001" y="124" width="1" height="8" fill="#000" />
<rect x="1008" y="127" width="1" height="5" fill="#000" />
<rect x="1015" y="127" width="1" height="5" fill="#000" />
<rect x="1022" y="127" width="1" height="5" fill="#000" />
<rect x="1030" y="127" width="1" height="5" fill="#000" />
<rect x="1037" y="122" width="1" height="10" fill="#000" />
<text x="1037" y="120.5" font-family='"Liberation Sans", sans-serif' font-size="9.5" fill="#222" text-anchor="middle" >0</text>
<rect x="1044" y="127" width="1" height="5" fill="#000" />
<rect x="1051" y="127" width="1" height="5" fill="#000" />
<rect x="1059" y="127" width="1" height="5" fill="#000" />
<rect x="1066" y="127" width="1" height="5" fill="#000" />
<rect x="1073" y="124" width="1" height="8" fill="#000" />
<rect x="1080" y="127" width="1" height="5" fill="#000" />
<rect x="1088" y="127" width="1" height="5" fill="#000" />
<rect x="1095" y="127" width="1" height="5" fill="#000" />
<rect x="1102" y="127" width="1" height="5" fill="#000" />
<rect x="1109" y="122" width="1" height="10" fill="#000" />
<text x="1109" y="120.5" font-family='"Liberation Sans", sans-serif' font-size="9.5" fill="#222" text-anchor="middle" >10</text>
<rect x="1116" y="127" width="1" height="5" fill="#000" />
<rect x="1124" y="127" width="1" height="5" fill="#000" />
<rect x="1131" y="127" width="1" height="5" fill="#000" />
<rect x="1138" y="127" width="1" height="5" fill="#000" />
<rect x="1145" y="124" width="1" height="8" fill="#000" />
<rect x="1153" y="127" width="1" height="5" fill="#000" />
<rect x="1160" y="127" width="1" height="5" fill="#000" />
<rect x="1167" y="127" width="1" height="5" fill="#000" />
<rect x="1174" y="127" width="1" height="5" fill="#000" />
<rect x="1182" y="122" width="1" height="10" fill="#000" />
<text x="1182" y="120.5" font-family='"Liberation Sans", sans-serif' font-size="9.5" fill="#222" text-anchor="middle" >20</text>
<rect x="1189" y="127" width="1" height="5" fill="#000" />
<rect x="1196" y="127" width="1" height="5" fill="#000" />
<rect x="1203" y="127" width="1" height="5" fill="#000" />
<rect x="1211" y="127" width="1" height="5" fill="#000" />
<rect x="1218" y="124" width="1" height="8" fill="#000" />
<rect x="1225" y="127" width="1" height="5" fill="#000" />
<rect x="1232" y="127" width="1" height="5" fill="#000" />
<rect x="1240" y="127" width="1" height="5" fill="#000" />
<rect x="1247" y="127" width="1" height="5" fill="#000" />
<rect x="1254" y="122" width="1" height="10" fill="#000" />
<text x="1254" y="120.5" font-family='"Liberation Sans", sans-serif' font-size="9.5" fill="#222" text-anchor="middle" >30</text>
<rect x="1261" y="127" width="1" height="5" fill="#000" />
<rect x="1269" y="127" width="1" height="5" fill="#000" />
<rect x="1276" y="127" width="1" height="5" fill="#000" />
<rect x="1283" y="127" width="1" height="5" fill="#000" />
<rect x="1290" y="124" width="1" height="8" fill="#000" />
<rect x="1298" y="127" width="1" height="5" fill="#000" />
<rect x="1305" y="127" width="1" height="5" fill="#000" />
<rect x="1312" y="127" width="1" height="5" fill="#000" />
<rect x="1319" y="127" width="1" height="5" fill="#000" />
<rect x="1327" y="122" width="1" height="10" fill="#000" />
<text x="1327" y="120.5" font-family='"Liberation Sans", sans-serif' font-size="9.5" fill="#222" text-anchor="middle" >40</text>
<rect x="1334" y="127" width="1" height="5" fill="#000" />
<rect x="1341" y="127" width="1" height="5" fill="#000" />
<rect x="1348" y="127" width="1" height="5" fill="#000" />
<rect x="1356" y="127" width="1" height="5" fill="#000" />
<rect x="1363" y="124" width="1" height="8" fill="#000" />
<rect x="1370" y="127" width="1" height="5" fill="#000" />
<rect x="1377" y="127" width="1" height="5" fill="#000" />
<rect x="1385" y="127" width="1" height="5" fill="#000" />
<rect x="1392" y="127" width="1" height="5" fill="#000" />
<rect x="1399" y="122" width="1" height="10" fill="#000" />
<text x="1399" y="120.5" font-family='"Liberation Sans", sans-serif' font-size="9.5" fill="#222" text-anchor="middle" >50</text>
<rect x="1406" y="127" width="1" height="5" fill="#000" />
<rect x="1414" y="127" width="1" height="5" fill="#000" />
<rect x="1421" y="127" width="1" height="5" fill="#000" />
<rect x="285" y="945" width="5" height="1" fill="#000" />
<rect x="282" y="938" width="8" height="1" fill="#000" />
<rect x="285" y="931" width="5" height="1" fill="#000" />
<rect x="285" y="924" width="5" height="1" fill="#000" />
<rect x="285" y="916" width="5" height="1" fill="#000" />
<rect x="285" y="909" width="5" height="1" fill="#000" />
<rect x="279" y="902" width="11" height="1" fill="#000" />
<text transform="translate(278.800,904.5) rotate(-90)" font-family='"Liberation Sans", sans-serif' font-size="8.600" fill="#222">-50</text>
<rect x="285" y="895" width="5" height="1" fill="#000" />
<rect x="285" y="887" width="5" height="1" fill="#000" />
<rect x="285" y="880" width="5" height="1" fill="#000" />
<rect x="285" y="873" width="5" height="1" fill="#000" />
<rect x="282" y="866" width="8" height="1" fill="#000" />
<rect x="285" y="858" width="5" height="1" fill="#000" />
<rect x="285" y="851" width="5" height="1" fill="#000" />
<rect x="285" y="844" width="5" height="1" fill="#000" />
<rect x="285" y="837" width="5" height="1" fill="#000" />
<rect x="279" y="830" width="11" height="1" fill="#000" />
<text transform="translate(278.800,832.5) rotate(-90)" font-family='"Liberation Sans", sans-serif' font-size="8.600" fill="#222">-40</text>
<rect x="285" y="822" width="5" height="1" fill="#000" />
<rect x="285" y="815" width="5" height="1" fill="#000" />
<rect x="285" y="808" width="5" height="1" fill="#000" />
<rect x="285" y="801" width="5" height="1" fill="#000" />
<rect x="282" y="793" width="8" height="1" fill="#000" />
<rect x="285" y="786" width="5" height="1" fill="#000" />
<rect x="285" y="779" width="5" height="1" fill="#000" />
<rect x="285" y="772" width="5" height="1" fill="#000" />
<rect x="285" y="764" width="5" height="1" fill="#000" />
<rect x="279" y="757" width="11" height="1" fill="#000" />
<text transform="translate(278.800,759.5) rotate(-90)" font-family='"Liberation Sans", sans-serif' font-size="8.600" fill="#222">-30</text>
<rect x="285" y="750" width="5" height="1" fill="#000" />
<rect x="285" y="743" width="5" height="1" fill="#000" />
<rect x="285" y="735" width="5" height="1" fill="#000" />
<rect x="285" y="728" width="5" height="1" fill="#000" />
<rect x="282" y="721" width="8" height="1" fill="#000" />
<rect x="285" y="714" width="5" height="1" fill="#000" />
<rect x="285" y="706" width="5" height="1" fill="#000" />
<rect x="285" y="699" width="5" height="1" fill="#000" />
<rect x="285" y="692" width="5" height="1" fill="#000" />
<rect x="279" y="685" width="11" height="1" fill="#000" />
<text transform="translate(278.800,687.5) rotate(-90)" font-family='"Liberation Sans", sans-serif' font-size="8.600" fill="#222">-20</text>
<rect x="285" y="677" width="5" height="1" fill="#000" />
<rect x="285" y="670" width="5" height="1" fill="#000" />
<rect x="285" y="663" width="5" height="1" fill="#000" />
<rect x="285" y="656" width="5" height="1" fill="#000" />
<rect x="282" y="648" width="8" height="1" fill="#000" />
<rect x="285" y="641" width="5" height="1" fill="#000" />
<rect x="285" y="634" width="5" height="1" fill="#000" />
<rect x="285" y="627" width="5" height="1" fill="#000" />
<rect x="285" y="619" width="5" height="1" fill="#000" />
<rect x="279" y="612" width="11" height="1" fill="#000" />
<text transform="translate(278.800,614.5) rotate(-90)" font-family='"Liberation Sans", sans-serif' font-size="8.600" fill="#222">-10</text>
<rect x="285" y="605" width="5" height="1" fill="#000" />
<rect x="285" y="598" width="5" height="1" fill="#000" />
<rect x="285" y="590" width="5" height="1" fill="#000" />
<rect x="285" y="583" width="5" height="1" fill="#000" />
<rect x="282" y="576" width="8" height="1" fill="#000" />
<rect x="285" y="569" width="5" height="1" fill="#000" />
<rect x="285" y="561" width="5" height="1" fill="#000" />
<rect x="285" y="554" width="5" height="1" fill="#000" />
<rect x="285" y="547" width="5" height="1" fill="#000" />
<rect x="279" y="540" width="11" height="1" fill="#000" />
<text transform="translate(278.800,542.5) rotate(-90)" font-family='"Liberation Sans", sans-serif' font-size="8.600" fill="#222">0</text>
<rect x="285" y="532" width="5" height="1" fill="#000" />
<rect x="285" y="525" width="5" height="1" fill="#000" />
<rect x="285" y="518" width="5" height="1" fill="#000" />
<rect x="285" y="511" width="5" height="1" fill="#000" />
<rect x="282" y="503" width="8" height="1" fill="#000" />
<rect x="285" y="496" width="5" height="1" fill="#000" />
<rect x="285" y="489" width="5" height="1" fill="#000" />
<rect x="285" y="482" width="5" height="1" fill="#000" />
<rect x="285" y="474" width="5" height="1" fill="#000" />
<rect x="279" y="467" width="11" height="1" fill="#000" />
<text transform="translate(278.800,469.5) rotate(-90)" font-family='"Liberation Sans", sans-serif' font-size="8.600" fill="#222">10</text>
<rect x="285" y="460" width="5" height="1" fill="#000" />
<rect x="285" y="453" width="5" height="1" fill="#000" />
<rect x="285" y="446" width="5" height="1" fill="#000" />
<rect x="285" y="438" width="5" height="1" fill="#000" />
<rect x="282" y="431" width="8" height="1" fill="#000" />
<rect x="285" y="424" width="5" height="1" fill="#000" />
<rect x="285" y="417" width="5" height="1" fill="#000" />
<rect x="285" y="409" width="5" height="1" fill="#000" />
<rect x="285" y="402" width="5" height="1" fill="#000" />
<rect x="279" y="395" width="11" height="1" fill="#000" />
<text transform="translate(278.800,397.5) rotate(-90)" font-family='"Liberation Sans", sans-serif' font-size="8.600" fill="#222">20</text>
<rect x="285" y="388" width="5" height="1" fill="#000" />
<rect x="285" y="380" width="5" height="1" fill="#000" />
<rect x="285" y="373" width="5" height="1" fill="#000" />
<rect x="285" y="366" width="5" height="1" fill="#000" />
<rect x="282" y="359" width="8" height="1" fill="#000" />
<rect x="285" y="351" width="5" height="1" fill="#000" />
<rect x="285" y="344" width="5" height="1" fill="#000" />
<rect x="285" y="337" width="5" height="1" fill="#000" />
<rect x="285" y="330" width="5" height="1" fill="#000" />
<rect x="279" y="322" width="11" height="1" fill="#000" />
<text transform="translate(278.800,324.5) rotate(-90)" font-family='"Liberation Sans", sans-serif' font-size="8.600" fill="#222">30</text>
<rect x="285" y="315" width="5" height="1" fill="#000" />
<rect x="285" y="308" width="5" height="1" fill="#000" />
<rect x="285" y="301" width="5" height="1" fill="#000" />
<rect x="285" y="293" width="5" height="1" fill="#000" />
<rect x="282" y="286" width="8" height="1" fill="#000" />
<rect x="285" y="279" width="5" height="1" fill="#000" />
<rect x="285" y="272" width="5" height="1" fill="#000" />
<rect x="285" y="264" width="5" height="1" fill="#000" />
<rect x="285" y="257" width="5" height="1" fill="#000" />
<rect x="279" y="250" width="11" height="1" fill="#000" />
<text transform="translate(278.800,252.5) rotate(-90)" font-family='"Liberation Sans", sans-serif' font-size="8.600" fill="#222">40</text>
<rect x="285" y="243" width="5" height="1" fill="#000" />
<rect x="285" y="235" width="5" height="1" fill="#000" />
<rect x="285" y="228" width="5" height="1" fill="#000" />
<rect x="285" y="221" width="5" height="1" fill="#000" />
<rect x="282" y="214" width="8" height="1" fill="#000" />
<rect x="285" y="206" width="5" height="1" fill="#000" />
<rect x="285" y="199" width="5" height="1" fill="#000" />
<rect x="285" y="192" width="5" height="1" fill="#000" />
<rect x="285" y="185" width="5" height="1" fill="#000" />
<rect x="279" y="177" width="11" height="1" fill="#000" />
<text transform="translate(278.800,179.5) rotate(-90)" font-family='"Liberation Sans", sans-serif' font-size="8.600" fill="#222">50</text>
<rect x="285" y="170" width="5" height="1" fill="#000" />
<rect x="285" y="163" width="5" height="1" fill="#000" />
<rect x="285" y="156" width="5" height="1" fill="#000" />
<rect x="285" y="148" width="5" height="1" fill="#000" />
<rect x="282" y="141" width="8" height="1" fill="#000" />
<rect x="285" y="134" width="5" height="1" fill="#000" />
<rect x="327" y="113" width="2" height="20" fill="#000" />
<rect x="271" y="134" width="20" height="2" fill="#000" />
<text x="302" y="156" font-family='"Liberation Sans", sans-serif' font-size="13.5" fill="#000" textLength="215" lengthAdjust="spacingAndGlyphs" font-weight="bold" >Demo version-only for evaluation</text>
<rect x="679" y="184" width="726" height="724" fill="#808080" />
<rect x="674" y="178" width="725" height="724" fill="#ffffff" />
<rect x="674" y="178" width="726" height="1" fill="#000" />
<rect x="674" y="902" width="726" height="1" fill="#000" />
<rect x="674" y="178" width="1" height="725" fill="#000" />
<rect x="1399" y="178" width="1" height="725" fill="#000" />
<defs><pattern id="pHatch" width="8" height="2.9" patternUnits="userSpaceOnUse"><rect width="8" height="2.9" fill="#fff"/><rect width="8" height="1.9" fill="#000"/></pattern></defs>
<g shape-rendering="crispEdges" text-rendering="optimizeSpeed">
<text id="bt1" transform="translate(0,339.6) scale(1.2,1.0)" y="0" font-family='"Liberation Serif", serif' font-size="170.7" fill="#000" ><tspan x="657.92" textLength="104.27" lengthAdjust="spacingAndGlyphs">T</tspan><tspan x="760.00" textLength="112.40" lengthAdjust="spacingAndGlyphs">E</tspan><tspan x="865.83" textLength="128.58" lengthAdjust="spacingAndGlyphs">X</tspan><tspan x="995.42" textLength="104.27" lengthAdjust="spacingAndGlyphs">T</tspan></text>
<text id="bt2" transform="translate(0,545.6) scale(1.262,1.064)" y="0" font-family='"Liberation Serif", serif' font-size="170.7" fill="#000" ><tspan x="618.86" textLength="104.27" lengthAdjust="spacingAndGlyphs">T</tspan><tspan x="721.32" textLength="113.13" lengthAdjust="spacingAndGlyphs">E</tspan><tspan x="828.29" textLength="130.55" lengthAdjust="spacingAndGlyphs">X</tspan><tspan x="959.19" textLength="104.27" lengthAdjust="spacingAndGlyphs">T</tspan></text>
<rect x="780" y="429" width="562" height="1" fill="#fff"/>
<rect x="780" y="432" width="562" height="1" fill="#fff"/>
<rect x="780" y="435" width="562" height="1" fill="#fff"/>
<rect x="780" y="438" width="562" height="1" fill="#fff"/>
<rect x="780" y="441" width="562" height="1" fill="#fff"/>
<rect x="780" y="444" width="562" height="1" fill="#fff"/>
<rect x="780" y="447" width="562" height="1" fill="#fff"/>
<rect x="780" y="450" width="562" height="1" fill="#fff"/>
<rect x="780" y="453" width="562" height="1" fill="#fff"/>
<rect x="780" y="457" width="562" height="1" fill="#fff"/>
<rect x="780" y="460" width="562" height="1" fill="#fff"/>
<rect x="780" y="463" width="562" height="1" fill="#fff"/>
<rect x="780" y="466" width="562" height="1" fill="#fff"/>
<rect x="780" y="469" width="562" height="1" fill="#fff"/>
<rect x="780" y="472" width="562" height="1" fill="#fff"/>
<rect x="780" y="475" width="562" height="1" fill="#fff"/>
<rect x="780" y="478" width="562" height="1" fill="#fff"/>
<rect x="780" y="481" width="562" height="1" fill="#fff"/>
<rect x="780" y="484" width="562" height="1" fill="#fff"/>
<rect x="780" y="487" width="562" height="1" fill="#fff"/>
<rect x="780" y="490" width="562" height="1" fill="#fff"/>
<rect x="780" y="493" width="562" height="1" fill="#fff"/>
<rect x="780" y="496" width="562" height="1" fill="#fff"/>
<rect x="780" y="499" width="562" height="1" fill="#fff"/>
<rect x="780" y="502" width="562" height="1" fill="#fff"/>
<rect x="780" y="506" width="562" height="1" fill="#fff"/>
<rect x="780" y="509" width="562" height="1" fill="#fff"/>
<rect x="780" y="512" width="562" height="1" fill="#fff"/>
<rect x="780" y="515" width="562" height="1" fill="#fff"/>
<rect x="780" y="518" width="562" height="1" fill="#fff"/>
<rect x="780" y="521" width="562" height="1" fill="#fff"/>
<rect x="780" y="524" width="562" height="1" fill="#fff"/>
<rect x="780" y="527" width="562" height="1" fill="#fff"/>
<rect x="780" y="530" width="562" height="1" fill="#fff"/>
<rect x="780" y="533" width="562" height="1" fill="#fff"/>
<rect x="780" y="536" width="562" height="1" fill="#fff"/>
<rect x="780" y="539" width="562" height="1" fill="#fff"/>
<rect x="780" y="542" width="562" height="1" fill="#fff"/>
<text id="bt2o" transform="translate(0,545.6) scale(1.262,1.064)" y="0" font-family='"Liberation Serif", serif' font-size="170.7" fill="none" stroke="#000" stroke-width="1" vector-effect="non-scaling-stroke"><tspan x="618.86" textLength="104.27" lengthAdjust="spacingAndGlyphs">T</tspan><tspan x="721.32" textLength="113.13" lengthAdjust="spacingAndGlyphs">E</tspan><tspan x="828.29" textLength="130.55" lengthAdjust="spacingAndGlyphs">X</tspan><tspan x="959.19" textLength="104.27" lengthAdjust="spacingAndGlyphs">T</tspan></text>
<clipPath id="cpT3"><text id="bt3c" transform="translate(0,762.5) scale(1.22,1.024)" y="0" font-family='"Liberation Serif", serif' font-size="170.7" fill="#000" ><tspan x="648.61" textLength="104.27" lengthAdjust="spacingAndGlyphs">T</tspan><tspan x="750.98" textLength="113.13" lengthAdjust="spacingAndGlyphs">E</tspan><tspan x="856.89" textLength="129.68" lengthAdjust="spacingAndGlyphs">X</tspan><tspan x="986.72" textLength="104.27" lengthAdjust="spacingAndGlyphs">T</tspan></text></clipPath>
<filter id="fThr" x="0" y="0" width="100%" height="100%" color-interpolation-filters="sRGB"><feComponentTransfer><feFuncR type="discrete" tableValues="0 1"/><feFuncG type="discrete" tableValues="0 1"/><feFuncB type="discrete" tableValues="0 1"/></feComponentTransfer></filter>
<g><g clip-path="url(#cpT3)">
<text id="bt3" transform="translate(0,762.5) scale(1.22,1.024)" y="0" font-family='"Liberation Serif", serif' font-size="170.7" fill="#fff" ><tspan x="648.61" textLength="104.27" lengthAdjust="spacingAndGlyphs">T</tspan><tspan x="750.98" textLength="113.13" lengthAdjust="spacingAndGlyphs">E</tspan><tspan x="856.89" textLength="129.68" lengthAdjust="spacingAndGlyphs">X</tspan><tspan x="986.72" textLength="104.27" lengthAdjust="spacingAndGlyphs">T</tspan></text>
<text id="bt3s0" transform="translate(0,762.5) scale(1.22,1.024)" y="0" font-family='"Liberation Serif", serif' font-size="170.7" fill="none" stroke="#000" stroke-width="20.00" stroke-linejoin="miter" vector-effect="non-scaling-stroke"><tspan x="648.61" textLength="104.27" lengthAdjust="spacingAndGlyphs">T</tspan><tspan x="750.98" textLength="113.13" lengthAdjust="spacingAndGlyphs">E</tspan><tspan x="856.89" textLength="129.68" lengthAdjust="spacingAndGlyphs">X</tspan><tspan x="986.72" textLength="104.27" lengthAdjust="spacingAndGlyphs">T</tspan></text>
<text id="bt3s1" transform="translate(0,762.5) scale(1.22,1.024)" y="0" font-family='"Liberation Serif", serif' font-size="170.7" fill="none" stroke="#fff" stroke-width="17.60" stroke-linejoin="miter" vector-effect="non-scaling-stroke"><tspan x="648.61" textLength="104.27" lengthAdjust="spacingAndGlyphs">T</tspan><tspan x="750.98" textLength="113.13" lengthAdjust="spacingAndGlyphs">E</tspan><tspan x="856.89" textLength="129.68" lengthAdjust="spacingAndGlyphs">X</tspan><tspan x="986.72" textLength="104.27" lengthAdjust="spacingAndGlyphs">T</tspan></text>
<text id="bt3s2" transform="translate(0,762.5) scale(1.22,1.024)" y="0" font-family='"Liberation Serif", serif' font-size="170.7" fill="none" stroke="#000" stroke-width="15.60" stroke-linejoin="miter" vector-effect="non-scaling-stroke"><tspan x="648.61" textLength="104.27" lengthAdjust="spacingAndGlyphs">T</tspan><tspan x="750.98" textLength="113.13" lengthAdjust="spacingAndGlyphs">E</tspan><tspan x="856.89" textLength="129.68" lengthAdjust="spacingAndGlyphs">X</tspan><tspan x="986.72" textLength="104.27" lengthAdjust="spacingAndGlyphs">T</tspan></text>
<text id="bt3s3" transform="translate(0,762.5) scale(1.22,1.024)" y="0" font-family='"Liberation Serif", serif' font-size="170.7" fill="none" stroke="#fff" stroke-width="13.20" stroke-linejoin="miter" vector-effect="non-scaling-stroke"><tspan x="648.61" textLength="104.27" lengthAdjust="spacingAndGlyphs">T</tspan><tspan x="750.98" textLength="113.13" lengthAdjust="spacingAndGlyphs">E</tspan><tspan x="856.89" textLength="129.68" lengthAdjust="spacingAndGlyphs">X</tspan><tspan x="986.72" textLength="104.27" lengthAdjust="spacingAndGlyphs">T</tspan></text>
<text id="bt3s4" transform="translate(0,762.5) scale(1.22,1.024)" y="0" font-family='"Liberation Serif", serif' font-size="170.7" fill="none" stroke="#000" stroke-width="11.20" stroke-linejoin="miter" vector-effect="non-scaling-stroke"><tspan x="648.61" textLength="104.27" lengthAdjust="spacingAndGlyphs">T</tspan><tspan x="750.98" textLength="113.13" lengthAdjust="spacingAndGlyphs">E</tspan><tspan x="856.89" textLength="129.68" lengthAdjust="spacingAndGlyphs">X</tspan><tspan x="986.72" textLength="104.27" lengthAdjust="spacingAndGlyphs">T</tspan></text>
<text id="bt3s5" transform="translate(0,762.5) scale(1.22,1.024)" y="0" font-family='"Liberation Serif", serif' font-size="170.7" fill="none" stroke="#fff" stroke-width="8.80" stroke-linejoin="miter" vector-effect="non-scaling-stroke"><tspan x="648.61" textLength="104.27" lengthAdjust="spacingAndGlyphs">T</tspan><tspan x="750.98" textLength="113.13" lengthAdjust="spacingAndGlyphs">E</tspan><tspan x="856.89" textLength="129.68" lengthAdjust="spacingAndGlyphs">X</tspan><tspan x="986.72" textLength="104.27" lengthAdjust="spacingAndGlyphs">T</tspan></text>
<text id="bt3s6" transform="translate(0,762.5) scale(1.22,1.024)" y="0" font-family='"Liberation Serif", serif' font-size="170.7" fill="none" stroke="#000" stroke-width="6.80" stroke-linejoin="miter" vector-effect="non-scaling-stroke"><tspan x="648.61" textLength="104.27" lengthAdjust="spacingAndGlyphs">T</tspan><tspan x="750.98" textLength="113.13" lengthAdjust="spacingAndGlyphs">E</tspan><tspan x="856.89" textLength="129.68" lengthAdjust="spacingAndGlyphs">X</tspan><tspan x="986.72" textLength="104.27" lengthAdjust="spacingAndGlyphs">T</tspan></text>
<text id="bt3s7" transform="translate(0,762.5) scale(1.22,1.024)" y="0" font-family='"Liberation Serif", serif' font-size="170.7" fill="none" stroke="#fff" stroke-width="4.40" stroke-linejoin="miter" vector-effect="non-scaling-stroke"><tspan x="648.61" textLength="104.27" lengthAdjust="spacingAndGlyphs">T</tspan><tspan x="750.98" textLength="113.13" lengthAdjust="spacingAndGlyphs">E</tspan><tspan x="856.89" textLength="129.68" lengthAdjust="spacingAndGlyphs">X</tspan><tspan x="986.72" textLength="104.27" lengthAdjust="spacingAndGlyphs">T</tspan></text>
<text id="bt3s8" transform="translate(0,762.5) scale(1.22,1.024)" y="0" font-family='"Liberation Serif", serif' font-size="170.7" fill="none" stroke="#000" stroke-width="2.40" stroke-linejoin="miter" vector-effect="non-scaling-stroke"><tspan x="648.61" textLength="104.27" lengthAdjust="spacingAndGlyphs">T</tspan><tspan x="750.98" textLength="113.13" lengthAdjust="spacingAndGlyphs">E</tspan><tspan x="856.89" textLength="129.68" lengthAdjust="spacingAndGlyphs">X</tspan><tspan x="986.72" textLength="104.27" lengthAdjust="spacingAndGlyphs">T</tspan></text>
</g></g></g>
<rect x="1450" y="80" width="1" height="938" fill="#a0a0a0" />
<rect x="1451" y="80" width="1" height="938" fill="#ffffff" />
<rect x="1455" y="81" width="189" height="13" fill="url(#gHdr)" />
<text x="1457.5" y="91" font-family='"Liberation Sans", sans-serif' font-size="11.5" fill="#000" textLength="89" lengthAdjust="spacingAndGlyphs" >Marking parameter</text>
<rect x="1458" y="115" width="161" height="131" fill="#ffffff" />
<rect x="1458" y="245" width="161" height="1" fill="#ffffff" />
<rect x="1618" y="115" width="1" height="131" fill="#ffffff" />
<rect x="1458" y="115" width="160" height="1" fill="#a0a0a0" />
<rect x="1458" y="115" width="1" height="130" fill="#a0a0a0" />
<rect x="1459" y="244" width="159" height="1" fill="#e3e3e3" />
<rect x="1617" y="116" width="1" height="129" fill="#e3e3e3" />
<rect x="1459" y="116" width="158" height="1" fill="#696969" />
<rect x="1459" y="116" width="1" height="128" fill="#696969" />
<rect x="1460" y="117" width="77" height="15" fill="#f0f0f0" />
<rect x="1460" y="131" width="77" height="1" fill="#a0a0a0" />
<rect x="1536" y="117" width="1" height="15" fill="#a0a0a0" />
<rect x="1460" y="117" width="76" height="1" fill="#ffffff" />
<rect x="1460" y="117" width="1" height="14" fill="#ffffff" />
<rect x="1537" y="117" width="38" height="15" fill="#f0f0f0" />
<rect x="1537" y="131" width="38" height="1" fill="#a0a0a0" />
<rect x="1574" y="117" width="1" height="15" fill="#a0a0a0" />
<rect x="1537" y="117" width="37" height="1" fill="#ffffff" />
<rect x="1537" y="117" width="1" height="14" fill="#ffffff" />
<rect x="1575" y="117" width="27" height="15" fill="#f0f0f0" />
<rect x="1575" y="131" width="27" height="1" fill="#a0a0a0" />
<rect x="1601" y="117" width="1" height="15" fill="#a0a0a0" />
<rect x="1575" y="117" width="26" height="1" fill="#ffffff" />
<rect x="1575" y="117" width="1" height="14" fill="#ffffff" />
<text x="1466" y="129" font-family='"Liberation Mono", monospace' font-size="12" fill="#000" textLength="41.3" lengthAdjust="spacingAndGlyphs">Pen No.</text>
<text x="1542" y="129" font-family='"Liberation Mono", monospace' font-size="12" fill="#000" textLength="23.3" lengthAdjust="spacingAndGlyphs">C...</text>
<text x="1580" y="129" font-family='"Liberation Mono", monospace' font-size="12" fill="#000" textLength="17.3" lengthAdjust="spacingAndGlyphs">On.</text>
<rect x="1600" y="123" width="2" height="8" fill="#f0f0f0" />
<g shape-rendering="geometricPrecision"><path d="M1466 135.5v11M1460.5 141h11M1462.2 137.2l7.600 7.600M1469.8 137.2l-7.600 7.600" stroke="#f00000" stroke-width="1.05"/></g>
<rect x="1472" y="135" width="65" height="12" fill="#0078d7" />
<text x="1476" y="145" font-family='"Liberation Mono", monospace' font-size="12" fill="#fff" textLength="53.3" lengthAdjust="spacingAndGlyphs"><tspan font-family='"Liberation Sans", sans-serif' font-size="11.5">0</tspan> Default</text>
<rect x="1538" y="136" width="36" height="11" fill="#000" />
<rect x="1539" y="137" width="34" height="9" fill="#000000" />
<text x="1581" y="145" font-family='"Liberation Mono", monospace' font-size="12" fill="#000" textLength="11.3" lengthAdjust="spacingAndGlyphs">On</text>
<rect x="1472" y="147" width="130" height="1" fill="#f0f0f0" />
<g shape-rendering="geometricPrecision"><path d="M1466 148.5v11M1460.5 154h11M1462.2 150.2l7.600 7.600M1469.8 150.2l-7.600 7.600" stroke="#f00000" stroke-width="1.05"/></g>
<text x="1476" y="158" font-family='"Liberation Mono", monospace' font-size="12" fill="#000" textLength="53.3" lengthAdjust="spacingAndGlyphs"><tspan font-family='"Liberation Sans", sans-serif' font-size="11.5">1</tspan> Default</text>
<rect x="1538" y="149" width="36" height="11" fill="#000" />
<rect x="1539" y="150" width="34" height="9" fill="#0000ff" />
<text x="1581" y="158" font-family='"Liberation Mono", monospace' font-size="12" fill="#000" textLength="11.3" lengthAdjust="spacingAndGlyphs">On</text>
<rect x="1472" y="160" width="130" height="1" fill="#f0f0f0" />
<g shape-rendering="geometricPrecision"><path d="M1466 161.5v11M1460.5 167h11M1462.2 163.2l7.600 7.600M1469.8 163.2l-7.600 7.600" stroke="#f00000" stroke-width="1.05"/></g>
<text x="1476" y="171" font-family='"Liberation Mono", monospace' font-size="12" fill="#000" textLength="53.3" lengthAdjust="spacingAndGlyphs"><tspan font-family='"Liberation Sans", sans-serif' font-size="11.5">2</tspan> Default</text>
<rect x="1538" y="162" width="36" height="11" fill="#000" />
<rect x="1539" y="163" width="34" height="9" fill="#ff0000" />
<text x="1581" y="171" font-family='"Liberation Mono", monospace' font-size="12" fill="#000" textLength="11.3" lengthAdjust="spacingAndGlyphs">On</text>
<rect x="1472" y="173" width="130" height="1" fill="#f0f0f0" />
<g shape-rendering="geometricPrecision"><path d="M1466 174.5v11M1460.5 180h11M1462.2 176.2l7.600 7.600M1469.8 176.2l-7.600 7.600" stroke="#f00000" stroke-width="1.05"/></g>
<text x="1476" y="184" font-family='"Liberation Mono", monospace' font-size="12" fill="#000" textLength="53.3" lengthAdjust="spacingAndGlyphs"><tspan font-family='"Liberation Sans", sans-serif' font-size="11.5">3</tspan> Default</text>
<rect x="1538" y="175" width="36" height="11" fill="#000" />
<rect x="1539" y="176" width="34" height="9" fill="#00ff00" />
<text x="1581" y="184" font-family='"Liberation Mono", monospace' font-size="12" fill="#000" textLength="11.3" lengthAdjust="spacingAndGlyphs">On</text>
<rect x="1472" y="186" width="130" height="1" fill="#f0f0f0" />
<g shape-rendering="geometricPrecision"><path d="M1466 187.5v11M1460.5 193h11M1462.2 189.2l7.600 7.600M1469.8 189.2l-7.600 7.600" stroke="#f00000" stroke-width="1.05"/></g>
<text x="1476" y="197" font-family='"Liberation Mono", monospace' font-size="12" fill="#000" textLength="53.3" lengthAdjust="spacingAndGlyphs"><tspan font-family='"Liberation Sans", sans-serif' font-size="11.5">4</tspan> Default</text>
<rect x="1538" y="188" width="36" height="11" fill="#000" />
<rect x="1539" y="189" width="34" height="9" fill="#ff00ff" />
<text x="1581" y="197" font-family='"Liberation Mono", monospace' font-size="12" fill="#000" textLength="11.3" lengthAdjust="spacingAndGlyphs">On</text>
<rect x="1472" y="199" width="130" height="1" fill="#f0f0f0" />
<g shape-rendering="geometricPrecision"><path d="M1466 200.5v11M1460.5 206h11M1462.2 202.2l7.600 7.600M1469.8 202.2l-7.600 7.600" stroke="#f00000" stroke-width="1.05"/></g>
<text x="1476" y="210" font-family='"Liberation Mono", monospace' font-size="12" fill="#000" textLength="53.3" lengthAdjust="spacingAndGlyphs"><tspan font-family='"Liberation Sans", sans-serif' font-size="11.5">5</tspan> Default</text>
<rect x="1538" y="201" width="36" height="11" fill="#000" />
<rect x="1539" y="202" width="34" height="9" fill="#ffff00" />
<text x="1581" y="210" font-family='"Liberation Mono", monospace' font-size="12" fill="#000" textLength="11.3" lengthAdjust="spacingAndGlyphs">On</text>
<rect x="1472" y="212" width="130" height="1" fill="#f0f0f0" />
<g shape-rendering="geometricPrecision"><path d="M1466 213.5v11M1460.5 219h11M1462.2 215.2l7.600 7.600M1469.8 215.2l-7.600 7.600" stroke="#f00000" stroke-width="1.05"/></g>
<text x="1476" y="223" font-family='"Liberation Mono", monospace' font-size="12" fill="#000" textLength="53.3" lengthAdjust="spacingAndGlyphs"><tspan font-family='"Liberation Sans", sans-serif' font-size="11.5">6</tspan> Default</text>
<rect x="1538" y="214" width="36" height="11" fill="#000" />
<rect x="1539" y="215" width="34" height="9" fill="#ff8080" />
<text x="1581" y="223" font-family='"Liberation Mono", monospace' font-size="12" fill="#000" textLength="11.3" lengthAdjust="spacingAndGlyphs">On</text>
<rect x="1472" y="225" width="130" height="1" fill="#f0f0f0" />
<rect x="1538" y="227" width="36" height="2" fill="#000" />
<rect x="1489" y="227" width="1" height="1" fill="#000" />
<rect x="1495" y="227" width="1" height="1" fill="#000" />
<rect x="1500" y="227" width="1" height="1" fill="#000" />
<rect x="1466" y="225" width="1" height="3" fill="#e81818" />
<rect x="1602" y="117" width="15" height="112" fill="#f0f0f0" />
<rect x="1603" y="134" width="14" height="17" fill="#cdcdcd" />
<g shape-rendering="geometricPrecision"><path d="M1606.0 127.25l3.5 -3.5l3.5 3.5" fill="none" stroke="#505050" stroke-width="1.8"/></g>
<g shape-rendering="geometricPrecision"><path d="M1606.0 217.75l3.5 3.5l3.5 -3.5" fill="none" stroke="#505050" stroke-width="1.8"/></g>
<rect x="1460" y="229" width="157" height="15" fill="#f0f0f0" />
<rect x="1477" y="229" width="94" height="15" fill="#cdcdcd" />
<g shape-rendering="geometricPrecision"><path d="M1468.75 233.0l-3.5 3.5l3.5 3.5" fill="none" stroke="#505050" stroke-width="1.8"/></g>
<g shape-rendering="geometricPrecision"><path d="M1590.75 233.0l3.5 3.5l-3.5 3.5" fill="none" stroke="#505050" stroke-width="1.8"/></g>
<rect x="1461" y="250" width="18" height="18" fill="#000000" />
<rect x="1481" y="250" width="18" height="18" fill="#0000ff" />
<rect x="1500" y="250" width="18" height="18" fill="#ff0000" />
<rect x="1520" y="250" width="18" height="18" fill="#00ff00" />
<rect x="1539" y="250" width="18" height="18" fill="#ff00ff" />
<rect x="1559" y="250" width="18" height="18" fill="#ffff00" />
<rect x="1578" y="250" width="18" height="18" fill="#ff8080" />
<rect x="1598" y="250" width="18" height="18" fill="#800000" />
<rect x="1458" y="271" width="160" height="1" fill="#a0a0a0" />
<rect x="1458" y="555" width="160" height="1" fill="#a0a0a0" />
<rect x="1458" y="271" width="1" height="285" fill="#a0a0a0" />
<rect x="1617" y="271" width="1" height="285" fill="#a0a0a0" />
<rect x="1459" y="272" width="158" height="1" fill="#ffffff" />
<rect x="1459" y="272" width="1" height="283" fill="#ffffff" />
<rect x="1458" y="556" width="161" height="1" fill="#ffffff" />
<rect x="1618" y="271" width="1" height="286" fill="#ffffff" />
<rect x="1463" y="278" width="12" height="12" fill="#ffffff" />
<rect x="1463" y="289" width="12" height="1" fill="#ffffff" />
<rect x="1474" y="278" width="1" height="12" fill="#ffffff" />
<rect x="1463" y="278" width="11" height="1" fill="#a0a0a0" />
<rect x="1463" y="278" width="1" height="11" fill="#a0a0a0" />
<rect x="1464" y="288" width="10" height="1" fill="#e3e3e3" />
<rect x="1473" y="279" width="1" height="10" fill="#e3e3e3" />
<rect x="1464" y="279" width="9" height="1" fill="#696969" />
<rect x="1464" y="279" width="1" height="9" fill="#696969" />
<text x="1481" y="288" font-family='"Liberation Mono", monospace' font-size="12" fill="#000" textLength="101.3" lengthAdjust="spacingAndGlyphs">Use default param</text>
<rect x="1461" y="294" width="91" height="16" fill="#f0f0f0" />
<rect x="1461" y="309" width="91" height="1" fill="#ffffff" />
<rect x="1551" y="294" width="1" height="16" fill="#ffffff" />
<rect x="1461" y="294" width="90" height="1" fill="#a0a0a0" />
<rect x="1461" y="294" width="1" height="15" fill="#a0a0a0" />
<text x="1462" y="306" font-family='"Liberation Mono", monospace' font-size="12" fill="#000" textLength="65.3" lengthAdjust="spacingAndGlyphs">Current pen</text>
<rect x="1556" y="294" width="59" height="16" fill="#f0f0f0" />
<rect x="1556" y="309" width="59" height="1" fill="#ffffff" />
<rect x="1614" y="294" width="1" height="16" fill="#ffffff" />
<rect x="1556" y="294" width="58" height="1" fill="#a0a0a0" />
<rect x="1556" y="294" width="1" height="15" fill="#a0a0a0" />
<rect x="1557" y="308" width="57" height="1" fill="#e3e3e3" />
<rect x="1613" y="295" width="1" height="14" fill="#e3e3e3" />
<rect x="1557" y="295" width="56" height="1" fill="#696969" />
<rect x="1557" y="295" width="1" height="13" fill="#696969" />
<text x="1559" y="306.5" font-family='"Liberation Mono", monospace' font-size="12" fill="#000" textLength="5.3" lengthAdjust="spacingAndGlyphs"><tspan font-family='"Liberation Sans", sans-serif' font-size="11.5">0</tspan></text>
<rect x="1461" y="315" width="91" height="16" fill="#f0f0f0" />
<rect x="1461" y="330" width="91" height="1" fill="#ffffff" />
<rect x="1551" y="315" width="1" height="16" fill="#ffffff" />
<rect x="1461" y="315" width="90" height="1" fill="#a0a0a0" />
<rect x="1461" y="315" width="1" height="15" fill="#a0a0a0" />
<text x="1462" y="327" font-family='"Liberation Mono", monospace' font-size="12" fill="#000" textLength="59.3" lengthAdjust="spacingAndGlyphs">Loop Count</text>
<rect x="1556" y="315" width="59" height="16" fill="#ffffff" />
<rect x="1556" y="330" width="59" height="1" fill="#ffffff" />
<rect x="1614" y="315" width="1" height="16" fill="#ffffff" />
<rect x="1556" y="315" width="58" height="1" fill="#a0a0a0" />
<rect x="1556" y="315" width="1" height="15" fill="#a0a0a0" />
<rect x="1557" y="329" width="57" height="1" fill="#e3e3e3" />
<rect x="1613" y="316" width="1" height="14" fill="#e3e3e3" />
<rect x="1557" y="316" width="56" height="1" fill="#696969" />
<rect x="1557" y="316" width="1" height="13" fill="#696969" />
<rect x="1598" y="317" width="15" height="7" fill="#f0f0f0" />
<rect x="1598" y="323" width="15" height="1" fill="#696969" />
<rect x="1612" y="317" width="1" height="7" fill="#696969" />
<rect x="1598" y="317" width="14" height="1" fill="#ffffff" />
<rect x="1598" y="317" width="1" height="6" fill="#ffffff" />
<rect x="1599" y="322" width="13" height="1" fill="#a0a0a0" />
<rect x="1611" y="318" width="1" height="5" fill="#a0a0a0" />
<rect x="1599" y="318" width="12" height="1" fill="#e3e3e3" />
<rect x="1599" y="318" width="1" height="4" fill="#e3e3e3" />
<rect x="1598" y="324" width="15" height="6" fill="#f0f0f0" />
<rect x="1598" y="329" width="15" height="1" fill="#696969" />
<rect x="1612" y="324" width="1" height="6" fill="#696969" />
<rect x="1598" y="324" width="14" height="1" fill="#ffffff" />
<rect x="1598" y="324" width="1" height="5" fill="#ffffff" />
<rect x="1599" y="328" width="13" height="1" fill="#a0a0a0" />
<rect x="1611" y="325" width="1" height="4" fill="#a0a0a0" />
<rect x="1599" y="325" width="12" height="1" fill="#e3e3e3" />
<rect x="1599" y="325" width="1" height="3" fill="#e3e3e3" />
<rect x="1605" y="320" width="1" height="1" fill="#000" />
<rect x="1605" y="326" width="1" height="1" fill="#000" />
<text x="1559" y="327.5" font-family='"Liberation Mono", monospace' font-size="12" fill="#000" textLength="5.3" lengthAdjust="spacingAndGlyphs"><tspan font-family='"Liberation Sans", sans-serif' font-size="11.5">1</tspan></text>
<rect x="1461" y="336" width="91" height="16" fill="#f0f0f0" />
<rect x="1461" y="351" width="91" height="1" fill="#ffffff" />
<rect x="1551" y="336" width="1" height="16" fill="#ffffff" />
<rect x="1461" y="336" width="90" height="1" fill="#a0a0a0" />
<rect x="1461" y="336" width="1" height="15" fill="#a0a0a0" />
<text x="1462" y="348" font-family='"Liberation Mono", monospace' font-size="12" fill="#000" textLength="89.3" lengthAdjust="spacingAndGlyphs">Speed(MM/Second</text>
<rect x="1556" y="336" width="59" height="16" fill="#ffffff" />
<rect x="1556" y="351" width="59" height="1" fill="#ffffff" />
<rect x="1614" y="336" width="1" height="16" fill="#ffffff" />
<rect x="1556" y="336" width="58" height="1" fill="#a0a0a0" />
<rect x="1556" y="336" width="1" height="15" fill="#a0a0a0" />
<rect x="1557" y="350" width="57" height="1" fill="#e3e3e3" />
<rect x="1613" y="337" width="1" height="14" fill="#e3e3e3" />
<rect x="1557" y="337" width="56" height="1" fill="#696969" />
<rect x="1557" y="337" width="1" height="13" fill="#696969" />
<rect x="1598" y="338" width="15" height="7" fill="#f0f0f0" />
<rect x="1598" y="344" width="15" height="1" fill="#696969" />
<rect x="1612" y="338" width="1" height="7" fill="#696969" />
<rect x="1598" y="338" width="14" height="1" fill="#ffffff" />
<rect x="1598" y="338" width="1" height="6" fill="#ffffff" />
<rect x="1599" y="343" width="13" height="1" fill="#a0a0a0" />
<rect x="1611" y="339" width="1" height="5" fill="#a0a0a0" />
<rect x="1599" y="339" width="12" height="1" fill="#e3e3e3" />
<rect x="1599" y="339" width="1" height="4" fill="#e3e3e3" />
<rect x="1598" y="345" width="15" height="6" fill="#f0f0f0" />
<rect x="1598" y="350" width="15" height="1" fill="#696969" />
<rect x="1612" y="345" width="1" height="6" fill="#696969" />
<rect x="1598" y="345" width="14" height="1" fill="#ffffff" />
<rect x="1598" y="345" width="1" height="5" fill="#ffffff" />
<rect x="1599" y="349" width="13" height="1" fill="#a0a0a0" />
<rect x="1611" y="346" width="1" height="4" fill="#a0a0a0" />
<rect x="1599" y="346" width="12" height="1" fill="#e3e3e3" />
<rect x="1599" y="346" width="1" height="3" fill="#e3e3e3" />
<rect x="1605" y="341" width="1" height="1" fill="#000" />
<rect x="1605" y="347" width="1" height="1" fill="#000" />
<text x="1559" y="348.5" font-family='"Liberation Mono", monospace' font-size="12" fill="#000" textLength="17.3" lengthAdjust="spacingAndGlyphs"><tspan font-family='"Liberation Sans", sans-serif' font-size="11.5">500</tspan></text>
<rect x="1461" y="357" width="91" height="16" fill="#f0f0f0" />
<rect x="1461" y="372" width="91" height="1" fill="#ffffff" />
<rect x="1551" y="357" width="1" height="16" fill="#ffffff" />
<rect x="1461" y="357" width="90" height="1" fill="#a0a0a0" />
<rect x="1461" y="357" width="1" height="15" fill="#a0a0a0" />
<text x="1462" y="369" font-family='"Liberation Mono", monospace' font-size="12" fill="#000" textLength="59.3" lengthAdjust="spacingAndGlyphs">Current(A)</text>
<rect x="1556" y="357" width="59" height="16" fill="#ffffff" />
<rect x="1556" y="372" width="59" height="1" fill="#ffffff" />
<rect x="1614" y="357" width="1" height="16" fill="#ffffff" />
<rect x="1556" y="357" width="58" height="1" fill="#a0a0a0" />
<rect x="1556" y="357" width="1" height="15" fill="#a0a0a0" />
<rect x="1557" y="371" width="57" height="1" fill="#e3e3e3" />
<rect x="1613" y="358" width="1" height="14" fill="#e3e3e3" />
<rect x="1557" y="358" width="56" height="1" fill="#696969" />
<rect x="1557" y="358" width="1" height="13" fill="#696969" />
<rect x="1598" y="359" width="15" height="7" fill="#f0f0f0" />
<rect x="1598" y="365" width="15" height="1" fill="#696969" />
<rect x="1612" y="359" width="1" height="7" fill="#696969" />
<rect x="1598" y="359" width="14" height="1" fill="#ffffff" />
<rect x="1598" y="359" width="1" height="6" fill="#ffffff" />
<rect x="1599" y="364" width="13" height="1" fill="#a0a0a0" />
<rect x="1611" y="360" width="1" height="5" fill="#a0a0a0" />
<rect x="1599" y="360" width="12" height="1" fill="#e3e3e3" />
<rect x="1599" y="360" width="1" height="4" fill="#e3e3e3" />
<rect x="1598" y="366" width="15" height="6" fill="#f0f0f0" />
<rect x="1598" y="371" width="15" height="1" fill="#696969" />
<rect x="1612" y="366" width="1" height="6" fill="#696969" />
<rect x="1598" y="366" width="14" height="1" fill="#ffffff" />
<rect x="1598" y="366" width="1" height="5" fill="#ffffff" />
<rect x="1599" y="370" width="13" height="1" fill="#a0a0a0" />
<rect x="1611" y="367" width="1" height="4" fill="#a0a0a0" />
<rect x="1599" y="367" width="12" height="1" fill="#e3e3e3" />
<rect x="1599" y="367" width="1" height="3" fill="#e3e3e3" />
<rect x="1605" y="362" width="1" height="1" fill="#000" />
<rect x="1605" y="368" width="1" height="1" fill="#000" />
<text x="1559" y="369.5" font-family='"Liberation Mono", monospace' font-size="12" fill="#000" textLength="5.3" lengthAdjust="spacingAndGlyphs"><tspan font-family='"Liberation Sans", sans-serif' font-size="11.5">1</tspan></text>
<rect x="1461" y="378" width="91" height="16" fill="#f0f0f0" />
<rect x="1461" y="393" width="91" height="1" fill="#ffffff" />
<rect x="1551" y="378" width="1" height="16" fill="#ffffff" />
<rect x="1461" y="378" width="90" height="1" fill="#a0a0a0" />
<rect x="1461" y="378" width="1" height="15" fill="#a0a0a0" />
<text x="1462" y="390" font-family='"Liberation Mono", monospace' font-size="12" fill="#000" textLength="83.3" lengthAdjust="spacingAndGlyphs">Frequency(KHz)</text>
<rect x="1556" y="378" width="59" height="16" fill="#ffffff" />
<rect x="1556" y="393" width="59" height="1" fill="#ffffff" />
<rect x="1614" y="378" width="1" height="16" fill="#ffffff" />
<rect x="1556" y="378" width="58" height="1" fill="#a0a0a0" />
<rect x="1556" y="378" width="1" height="15" fill="#a0a0a0" />
<rect x="1557" y="392" width="57" height="1" fill="#e3e3e3" />
<rect x="1613" y="379" width="1" height="14" fill="#e3e3e3" />
<rect x="1557" y="379" width="56" height="1" fill="#696969" />
<rect x="1557" y="379" width="1" height="13" fill="#696969" />
<rect x="1598" y="380" width="15" height="7" fill="#f0f0f0" />
<rect x="1598" y="386" width="15" height="1" fill="#696969" />
<rect x="1612" y="380" width="1" height="7" fill="#696969" />
<rect x="1598" y="380" width="14" height="1" fill="#ffffff" />
<rect x="1598" y="380" width="1" height="6" fill="#ffffff" />
<rect x="1599" y="385" width="13" height="1" fill="#a0a0a0" />
<rect x="1611" y="381" width="1" height="5" fill="#a0a0a0" />
<rect x="1599" y="381" width="12" height="1" fill="#e3e3e3" />
<rect x="1599" y="381" width="1" height="4" fill="#e3e3e3" />
<rect x="1598" y="387" width="15" height="6" fill="#f0f0f0" />
<rect x="1598" y="392" width="15" height="1" fill="#696969" />
<rect x="1612" y="387" width="1" height="6" fill="#696969" />
<rect x="1598" y="387" width="14" height="1" fill="#ffffff" />
<rect x="1598" y="387" width="1" height="5" fill="#ffffff" />
<rect x="1599" y="391" width="13" height="1" fill="#a0a0a0" />
<rect x="1611" y="388" width="1" height="4" fill="#a0a0a0" />
<rect x="1599" y="388" width="12" height="1" fill="#e3e3e3" />
<rect x="1599" y="388" width="1" height="3" fill="#e3e3e3" />
<rect x="1605" y="383" width="1" height="1" fill="#000" />
<rect x="1605" y="389" width="1" height="1" fill="#000" />
<text x="1559" y="390.5" font-family='"Liberation Mono", monospace' font-size="12" fill="#000" textLength="11.3" lengthAdjust="spacingAndGlyphs"><tspan font-family='"Liberation Sans", sans-serif' font-size="11.5">20</tspan></text>
<rect x="1461" y="399" width="91" height="16" fill="#f0f0f0" />
<rect x="1461" y="414" width="91" height="1" fill="#ffffff" />
<rect x="1551" y="399" width="1" height="16" fill="#ffffff" />
<rect x="1461" y="399" width="90" height="1" fill="#a0a0a0" />
<rect x="1461" y="399" width="1" height="15" fill="#a0a0a0" />
<text x="1462" y="411" font-family='"Liberation Mono", monospace' font-size="12" fill="#000" textLength="89.3" lengthAdjust="spacingAndGlyphs">Q Pulse Width(U</text>
<rect x="1556" y="399" width="59" height="16" fill="#ffffff" />
<rect x="1556" y="414" width="59" height="1" fill="#ffffff" />
<rect x="1614" y="399" width="1" height="16" fill="#ffffff" />
<rect x="1556" y="399" width="58" height="1" fill="#a0a0a0" />
<rect x="1556" y="399" width="1" height="15" fill="#a0a0a0" />
<rect x="1557" y="413" width="57" height="1" fill="#e3e3e3" />
<rect x="1613" y="400" width="1" height="14" fill="#e3e3e3" />
<rect x="1557" y="400" width="56" height="1" fill="#696969" />
<rect x="1557" y="400" width="1" height="13" fill="#696969" />
<rect x="1598" y="401" width="15" height="7" fill="#f0f0f0" />
<rect x="1598" y="407" width="15" height="1" fill="#696969" />
<rect x="1612" y="401" width="1" height="7" fill="#696969" />
<rect x="1598" y="401" width="14" height="1" fill="#ffffff" />
<rect x="1598" y="401" width="1" height="6" fill="#ffffff" />
<rect x="1599" y="406" width="13" height="1" fill="#a0a0a0" />
<rect x="1611" y="402" width="1" height="5" fill="#a0a0a0" />
<rect x="1599" y="402" width="12" height="1" fill="#e3e3e3" />
<rect x="1599" y="402" width="1" height="4" fill="#e3e3e3" />
<rect x="1598" y="408" width="15" height="6" fill="#f0f0f0" />
<rect x="1598" y="413" width="15" height="1" fill="#696969" />
<rect x="1612" y="408" width="1" height="6" fill="#696969" />
<rect x="1598" y="408" width="14" height="1" fill="#ffffff" />
<rect x="1598" y="408" width="1" height="5" fill="#ffffff" />
<rect x="1599" y="412" width="13" height="1" fill="#a0a0a0" />
<rect x="1611" y="409" width="1" height="4" fill="#a0a0a0" />
<rect x="1599" y="409" width="12" height="1" fill="#e3e3e3" />
<rect x="1599" y="409" width="1" height="3" fill="#e3e3e3" />
<rect x="1605" y="404" width="1" height="1" fill="#000" />
<rect x="1605" y="410" width="1" height="1" fill="#000" />
<text x="1559" y="411.5" font-family='"Liberation Mono", monospace' font-size="12" fill="#000" textLength="11.3" lengthAdjust="spacingAndGlyphs"><tspan font-family='"Liberation Sans", sans-serif' font-size="11.5">10</tspan></text>
<rect x="1461" y="420" width="91" height="16" fill="#f0f0f0" />
<rect x="1461" y="435" width="91" height="1" fill="#ffffff" />
<rect x="1551" y="420" width="1" height="16" fill="#ffffff" />
<rect x="1461" y="420" width="90" height="1" fill="#a0a0a0" />
<rect x="1461" y="420" width="1" height="15" fill="#a0a0a0" />
<text x="1462" y="432" font-family='"Liberation Mono", monospace' font-size="12" fill="#000" textLength="71.3" lengthAdjust="spacingAndGlyphs">Start TC(US)</text>
<rect x="1556" y="420" width="59" height="16" fill="#ffffff" />
<rect x="1556" y="435" width="59" height="1" fill="#ffffff" />
<rect x="1614" y="420" width="1" height="16" fill="#ffffff" />
<rect x="1556" y="420" width="58" height="1" fill="#a0a0a0" />
<rect x="1556" y="420" width="1" height="15" fill="#a0a0a0" />
<rect x="1557" y="434" width="57" height="1" fill="#e3e3e3" />
<rect x="1613" y="421" width="1" height="14" fill="#e3e3e3" />
<rect x="1557" y="421" width="56" height="1" fill="#696969" />
<rect x="1557" y="421" width="1" height="13" fill="#696969" />
<rect x="1598" y="422" width="15" height="7" fill="#f0f0f0" />
<rect x="1598" y="428" width="15" height="1" fill="#696969" />
<rect x="1612" y="422" width="1" height="7" fill="#696969" />
<rect x="1598" y="422" width="14" height="1" fill="#ffffff" />
<rect x="1598" y="422" width="1" height="6" fill="#ffffff" />
<rect x="1599" y="427" width="13" height="1" fill="#a0a0a0" />
<rect x="1611" y="423" width="1" height="5" fill="#a0a0a0" />
<rect x="1599" y="423" width="12" height="1" fill="#e3e3e3" />
<rect x="1599" y="423" width="1" height="4" fill="#e3e3e3" />
<rect x="1598" y="429" width="15" height="6" fill="#f0f0f0" />
<rect x="1598" y="434" width="15" height="1" fill="#696969" />
<rect x="1612" y="429" width="1" height="6" fill="#696969" />
<rect x="1598" y="429" width="14" height="1" fill="#ffffff" />
<rect x="1598" y="429" width="1" height="5" fill="#ffffff" />
<rect x="1599" y="433" width="13" height="1" fill="#a0a0a0" />
<rect x="1611" y="430" width="1" height="4" fill="#a0a0a0" />
<rect x="1599" y="430" width="12" height="1" fill="#e3e3e3" />
<rect x="1599" y="430" width="1" height="3" fill="#e3e3e3" />
<rect x="1605" y="425" width="1" height="1" fill="#000" />
<rect x="1605" y="431" width="1" height="1" fill="#000" />
<text x="1559" y="432.5" font-family='"Liberation Mono", monospace' font-size="12" fill="#000" textLength="17.3" lengthAdjust="spacingAndGlyphs"><tspan font-family='"Liberation Sans", sans-serif' font-size="11.5">300</tspan></text>
<rect x="1461" y="441" width="91" height="16" fill="#f0f0f0" />
<rect x="1461" y="456" width="91" height="1" fill="#ffffff" />
<rect x="1551" y="441" width="1" height="16" fill="#ffffff" />
<rect x="1461" y="441" width="90" height="1" fill="#a0a0a0" />
<rect x="1461" y="441" width="1" height="15" fill="#a0a0a0" />
<text x="1462" y="453" font-family='"Liberation Mono", monospace' font-size="12" fill="#000" textLength="89.3" lengthAdjust="spacingAndGlyphs">Laser Off TC(US</text>
<rect x="1556" y="441" width="59" height="16" fill="#ffffff" />
<rect x="1556" y="456" width="59" height="1" fill="#ffffff" />
<rect x="1614" y="441" width="1" height="16" fill="#ffffff" />
<rect x="1556" y="441" width="58" height="1" fill="#a0a0a0" />
<rect x="1556" y="441" width="1" height="15" fill="#a0a0a0" />
<rect x="1557" y="455" width="57" height="1" fill="#e3e3e3" />
<rect x="1613" y="442" width="1" height="14" fill="#e3e3e3" />
<rect x="1557" y="442" width="56" height="1" fill="#696969" />
<rect x="1557" y="442" width="1" height="13" fill="#696969" />
<rect x="1598" y="443" width="15" height="7" fill="#f0f0f0" />
<rect x="1598" y="449" width="15" height="1" fill="#696969" />
<rect x="1612" y="443" width="1" height="7" fill="#696969" />
<rect x="1598" y="443" width="14" height="1" fill="#ffffff" />
<rect x="1598" y="443" width="1" height="6" fill="#ffffff" />
<rect x="1599" y="448" width="13" height="1" fill="#a0a0a0" />
<rect x="1611" y="444" width="1" height="5" fill="#a0a0a0" />
<rect x="1599" y="444" width="12" height="1" fill="#e3e3e3" />
<rect x="1599" y="444" width="1" height="4" fill="#e3e3e3" />
<rect x="1598" y="450" width="15" height="6" fill="#f0f0f0" />
<rect x="1598" y="455" width="15" height="1" fill="#696969" />
<rect x="1612" y="450" width="1" height="6" fill="#696969" />
<rect x="1598" y="450" width="14" height="1" fill="#ffffff" />
<rect x="1598" y="450" width="1" height="5" fill="#ffffff" />
<rect x="1599" y="454" width="13" height="1" fill="#a0a0a0" />
<rect x="1611" y="451" width="1" height="4" fill="#a0a0a0" />
<rect x="1599" y="451" width="12" height="1" fill="#e3e3e3" />
<rect x="1599" y="451" width="1" height="3" fill="#e3e3e3" />
<rect x="1605" y="446" width="1" height="1" fill="#000" />
<rect x="1605" y="452" width="1" height="1" fill="#000" />
<text x="1559" y="453.5" font-family='"Liberation Mono", monospace' font-size="12" fill="#000" textLength="17.3" lengthAdjust="spacingAndGlyphs"><tspan font-family='"Liberation Sans", sans-serif' font-size="11.5">100</tspan></text>
<rect x="1461" y="462" width="91" height="16" fill="#f0f0f0" />
<rect x="1461" y="477" width="91" height="1" fill="#ffffff" />
<rect x="1551" y="462" width="1" height="16" fill="#ffffff" />
<rect x="1461" y="462" width="90" height="1" fill="#a0a0a0" />
<rect x="1461" y="462" width="1" height="15" fill="#a0a0a0" />
<text x="1462" y="474" font-family='"Liberation Mono", monospace' font-size="12" fill="#000" textLength="59.3" lengthAdjust="spacingAndGlyphs">End TC(US)</text>
<rect x="1556" y="462" width="59" height="16" fill="#ffffff" />
<rect x="1556" y="477" width="59" height="1" fill="#ffffff" />
<rect x="1614" y="462" width="1" height="16" fill="#ffffff" />
<rect x="1556" y="462" width="58" height="1" fill="#a0a0a0" />
<rect x="1556" y="462" width="1" height="15" fill="#a0a0a0" />
<rect x="1557" y="476" width="57" height="1" fill="#e3e3e3" />
<rect x="1613" y="463" width="1" height="14" fill="#e3e3e3" />
<rect x="1557" y="463" width="56" height="1" fill="#696969" />
<rect x="1557" y="463" width="1" height="13" fill="#696969" />
<rect x="1598" y="464" width="15" height="7" fill="#f0f0f0" />
<rect x="1598" y="470" width="15" height="1" fill="#696969" />
<rect x="1612" y="464" width="1" height="7" fill="#696969" />
<rect x="1598" y="464" width="14" height="1" fill="#ffffff" />
<rect x="1598" y="464" width="1" height="6" fill="#ffffff" />
<rect x="1599" y="469" width="13" height="1" fill="#a0a0a0" />
<rect x="1611" y="465" width="1" height="5" fill="#a0a0a0" />
<rect x="1599" y="465" width="12" height="1" fill="#e3e3e3" />
<rect x="1599" y="465" width="1" height="4" fill="#e3e3e3" />
<rect x="1598" y="471" width="15" height="6" fill="#f0f0f0" />
<rect x="1598" y="476" width="15" height="1" fill="#696969" />
<rect x="1612" y="471" width="1" height="6" fill="#696969" />
<rect x="1598" y="471" width="14" height="1" fill="#ffffff" />
<rect x="1598" y="471" width="1" height="5" fill="#ffffff" />
<rect x="1599" y="475" width="13" height="1" fill="#a0a0a0" />
<rect x="1611" y="472" width="1" height="4" fill="#a0a0a0" />
<rect x="1599" y="472" width="12" height="1" fill="#e3e3e3" />
<rect x="1599" y="472" width="1" height="3" fill="#e3e3e3" />
<rect x="1605" y="467" width="1" height="1" fill="#000" />
<rect x="1605" y="473" width="1" height="1" fill="#000" />
<text x="1559" y="474.5" font-family='"Liberation Mono", monospace' font-size="12" fill="#000" textLength="17.3" lengthAdjust="spacingAndGlyphs"><tspan font-family='"Liberation Sans", sans-serif' font-size="11.5">300</tspan></text>
<rect x="1461" y="483" width="91" height="16" fill="#f0f0f0" />
<rect x="1461" y="498" width="91" height="1" fill="#ffffff" />
<rect x="1551" y="483" width="1" height="16" fill="#ffffff" />
<rect x="1461" y="483" width="90" height="1" fill="#a0a0a0" />
<rect x="1461" y="483" width="1" height="15" fill="#a0a0a0" />
<text x="1462" y="495" font-family='"Liberation Mono", monospace' font-size="12" fill="#000" textLength="83.3" lengthAdjust="spacingAndGlyphs">Polygon TC(US)</text>
<rect x="1556" y="483" width="59" height="16" fill="#ffffff" />
<rect x="1556" y="498" width="59" height="1" fill="#ffffff" />
<rect x="1614" y="483" width="1" height="16" fill="#ffffff" />
<rect x="1556" y="483" width="58" height="1" fill="#a0a0a0" />
<rect x="1556" y="483" width="1" height="15" fill="#a0a0a0" />
<rect x="1557" y="497" width="57" height="1" fill="#e3e3e3" />
<rect x="1613" y="484" width="1" height="14" fill="#e3e3e3" />
<rect x="1557" y="484" width="56" height="1" fill="#696969" />
<rect x="1557" y="484" width="1" height="13" fill="#696969" />
<rect x="1598" y="485" width="15" height="7" fill="#f0f0f0" />
<rect x="1598" y="491" width="15" height="1" fill="#696969" />
<rect x="1612" y="485" width="1" height="7" fill="#696969" />
<rect x="1598" y="485" width="14" height="1" fill="#ffffff" />
<rect x="1598" y="485" width="1" height="6" fill="#ffffff" />
<rect x="1599" y="490" width="13" height="1" fill="#a0a0a0" />
<rect x="1611" y="486" width="1" height="5" fill="#a0a0a0" />
<rect x="1599" y="486" width="12" height="1" fill="#e3e3e3" />
<rect x="1599" y="486" width="1" height="4" fill="#e3e3e3" />
<rect x="1598" y="492" width="15" height="6" fill="#f0f0f0" />
<rect x="1598" y="497" width="15" height="1" fill="#696969" />
<rect x="1612" y="492" width="1" height="6" fill="#696969" />
<rect x="1598" y="492" width="14" height="1" fill="#ffffff" />
<rect x="1598" y="492" width="1" height="5" fill="#ffffff" />
<rect x="1599" y="496" width="13" height="1" fill="#a0a0a0" />
<rect x="1611" y="493" width="1" height="4" fill="#a0a0a0" />
<rect x="1599" y="493" width="12" height="1" fill="#e3e3e3" />
<rect x="1599" y="493" width="1" height="3" fill="#e3e3e3" />
<rect x="1605" y="488" width="1" height="1" fill="#000" />
<rect x="1605" y="494" width="1" height="1" fill="#000" />
<text x="1559" y="495.5" font-family='"Liberation Mono", monospace' font-size="12" fill="#000" textLength="17.3" lengthAdjust="spacingAndGlyphs"><tspan font-family='"Liberation Sans", sans-serif' font-size="11.5">100</tspan></text>
<rect x="1463" y="534" width="12" height="12" fill="#ffffff" />
<rect x="1463" y="545" width="12" height="1" fill="#ffffff" />
<rect x="1474" y="534" width="1" height="12" fill="#ffffff" />
<rect x="1463" y="534" width="11" height="1" fill="#a0a0a0" />
<rect x="1463" y="534" width="1" height="11" fill="#a0a0a0" />
<rect x="1464" y="544" width="10" height="1" fill="#e3e3e3" />
<rect x="1473" y="535" width="1" height="10" fill="#e3e3e3" />
<rect x="1464" y="535" width="9" height="1" fill="#696969" />
<rect x="1464" y="535" width="1" height="9" fill="#696969" />
<text x="1481" y="544" font-family='"Liberation Mono", monospace' font-size="12" fill="#000" textLength="11.3" lengthAdjust="spacingAndGlyphs">CW</text>
<rect x="1508" y="530" width="32" height="22" fill="#f0f0f0" />
<rect x="1508" y="551" width="32" height="1" fill="#696969" />
<rect x="1539" y="530" width="1" height="22" fill="#696969" />
<rect x="1508" y="530" width="31" height="1" fill="#ffffff" />
<rect x="1508" y="530" width="1" height="21" fill="#ffffff" />
<rect x="1509" y="550" width="30" height="1" fill="#a0a0a0" />
<rect x="1538" y="531" width="1" height="20" fill="#a0a0a0" />
<rect x="1509" y="531" width="29" height="1" fill="#e3e3e3" />
<rect x="1509" y="531" width="1" height="19" fill="#e3e3e3" />
<g shape-rendering="geometricPrecision"><g fill="none" stroke="#e00000" stroke-width="1"><circle cx="1514.5" cy="541" r="4.200"/><circle cx="1520.5" cy="541" r="4.200"/><circle cx="1526.5" cy="541" r="4.200"/><circle cx="1532.5" cy="541" r="4.200"/></g></g>
<rect x="1545" y="530" width="71" height="22" fill="#f0f0f0" />
<rect x="1545" y="551" width="71" height="1" fill="#696969" />
<rect x="1615" y="530" width="1" height="22" fill="#696969" />
<rect x="1545" y="530" width="70" height="1" fill="#ffffff" />
<rect x="1545" y="530" width="1" height="21" fill="#ffffff" />
<rect x="1546" y="550" width="69" height="1" fill="#a0a0a0" />
<rect x="1614" y="531" width="1" height="20" fill="#a0a0a0" />
<rect x="1546" y="531" width="68" height="1" fill="#e3e3e3" />
<rect x="1546" y="531" width="1" height="19" fill="#e3e3e3" />
<text x="1550" y="545" font-family='"Liberation Mono", monospace' font-size="12" fill="#000" textLength="59.3" lengthAdjust="spacingAndGlyphs">Advance...</text>
<rect x="1458" y="562" width="62" height="18" fill="#f0f0f0" />
<rect x="1458" y="579" width="62" height="1" fill="#696969" />
<rect x="1519" y="562" width="1" height="18" fill="#696969" />
<rect x="1458" y="562" width="61" height="1" fill="#ffffff" />
<rect x="1458" y="562" width="1" height="17" fill="#ffffff" />
<rect x="1459" y="578" width="60" height="1" fill="#a0a0a0" />
<rect x="1518" y="563" width="1" height="16" fill="#a0a0a0" />
<rect x="1459" y="563" width="59" height="1" fill="#e3e3e3" />
<rect x="1459" y="563" width="1" height="15" fill="#e3e3e3" />
<text x="1459" y="574.5" font-family='"Liberation Mono", monospace' font-size="12" fill="#000" textLength="59.3" lengthAdjust="spacingAndGlyphs">Param name</text>
<rect x="1521" y="562" width="98" height="18" fill="#f0f0f0" />
<rect x="1521" y="579" width="98" height="1" fill="#ffffff" />
<rect x="1618" y="562" width="1" height="18" fill="#ffffff" />
<rect x="1521" y="562" width="97" height="1" fill="#a0a0a0" />
<rect x="1521" y="562" width="1" height="17" fill="#a0a0a0" />
<text x="1523" y="575" font-family='"Liberation Mono", monospace' font-size="12" fill="#000" textLength="41.3" lengthAdjust="spacingAndGlyphs">Default</text>
<rect x="1458" y="582" width="162" height="22" fill="#f0f0f0" />
<rect x="1458" y="603" width="162" height="1" fill="#696969" />
<rect x="1619" y="582" width="1" height="22" fill="#696969" />
<rect x="1458" y="582" width="161" height="1" fill="#ffffff" />
<rect x="1458" y="582" width="1" height="21" fill="#ffffff" />
<rect x="1459" y="602" width="160" height="1" fill="#a0a0a0" />
<rect x="1618" y="583" width="1" height="20" fill="#a0a0a0" />
<rect x="1459" y="583" width="159" height="1" fill="#e3e3e3" />
<rect x="1459" y="583" width="1" height="19" fill="#e3e3e3" />
<text x="1464" y="596.5" font-family='"Liberation Mono", monospace' font-size="12" fill="#000" textLength="149.3" lengthAdjust="spacingAndGlyphs">Select param from library</text>
<rect x="1458" y="606" width="162" height="23" fill="#f0f0f0" />
<rect x="1458" y="628" width="162" height="1" fill="#696969" />
<rect x="1619" y="606" width="1" height="23" fill="#696969" />
<rect x="1458" y="606" width="161" height="1" fill="#ffffff" />
<rect x="1458" y="606" width="1" height="22" fill="#ffffff" />
<rect x="1459" y="627" width="160" height="1" fill="#a0a0a0" />
<rect x="1618" y="607" width="1" height="21" fill="#a0a0a0" />
<rect x="1459" y="607" width="159" height="1" fill="#e3e3e3" />
<rect x="1459" y="607" width="1" height="20" fill="#e3e3e3" />
<text x="1491" y="620.5" font-family='"Liberation Mono", monospace' font-size="12" fill="#000" textLength="95.3" lengthAdjust="spacingAndGlyphs">Apply to default</text>
<rect x="1545" y="622" width="6" height="1" fill="#000" />
<rect x="0" y="1019" width="1644" height="1" fill="#a0a0a0" />
<rect x="0" y="1020" width="1644" height="2" fill="#fbfbfb" />
<rect x="272" y="974" width="57" height="1" fill="#696969" />
<rect x="272" y="1011" width="57" height="1" fill="#696969" />
<rect x="272" y="974" width="1" height="38" fill="#696969" />
<rect x="328" y="974" width="1" height="38" fill="#696969" />
<rect x="273" y="975" width="55" height="36" fill="#f0f0f0" />
<rect x="273" y="1010" width="55" height="1" fill="#696969" />
<rect x="327" y="975" width="1" height="36" fill="#696969" />
<rect x="273" y="975" width="54" height="1" fill="#ffffff" />
<rect x="273" y="975" width="1" height="35" fill="#ffffff" />
<rect x="274" y="1009" width="53" height="1" fill="#a0a0a0" />
<rect x="326" y="976" width="1" height="34" fill="#a0a0a0" />
<rect x="274" y="976" width="52" height="1" fill="#e3e3e3" />
<rect x="274" y="976" width="1" height="33" fill="#e3e3e3" />
<text x="279" y="996" font-family='"Liberation Mono", monospace' font-size="12" fill="#000" textLength="41.3" lengthAdjust="spacingAndGlyphs">Red(F<tspan font-family='"Liberation Sans", sans-serif' font-size="11.5">1</tspan>)</text>
<rect x="332" y="974" width="57" height="38" fill="#f0f0f0" />
<rect x="332" y="1011" width="57" height="1" fill="#696969" />
<rect x="388" y="974" width="1" height="38" fill="#696969" />
<rect x="332" y="974" width="56" height="1" fill="#ffffff" />
<rect x="332" y="974" width="1" height="37" fill="#ffffff" />
<rect x="333" y="1010" width="55" height="1" fill="#a0a0a0" />
<rect x="387" y="975" width="1" height="36" fill="#a0a0a0" />
<rect x="333" y="975" width="54" height="1" fill="#e3e3e3" />
<rect x="333" y="975" width="1" height="35" fill="#e3e3e3" />
<text x="335" y="996" font-family='"Liberation Mono", monospace' font-size="12" fill="#000" textLength="47.3" lengthAdjust="spacingAndGlyphs">Mark(F<tspan font-family='"Liberation Sans", sans-serif' font-size="11.5">2</tspan>)</text>
<rect x="395" y="975" width="12" height="12" fill="#ffffff" />
<rect x="395" y="986" width="12" height="1" fill="#ffffff" />
<rect x="406" y="975" width="1" height="12" fill="#ffffff" />
<rect x="395" y="975" width="11" height="1" fill="#a0a0a0" />
<rect x="395" y="975" width="1" height="11" fill="#a0a0a0" />
<rect x="396" y="985" width="10" height="1" fill="#e3e3e3" />
<rect x="405" y="976" width="1" height="10" fill="#e3e3e3" />
<rect x="396" y="976" width="9" height="1" fill="#696969" />
<rect x="396" y="976" width="1" height="9" fill="#696969" />
<rect x="395" y="998" width="12" height="12" fill="#ffffff" />
<rect x="395" y="1009" width="12" height="1" fill="#ffffff" />
<rect x="406" y="998" width="1" height="12" fill="#ffffff" />
<rect x="395" y="998" width="11" height="1" fill="#a0a0a0" />
<rect x="395" y="998" width="1" height="11" fill="#a0a0a0" />
<rect x="396" y="1008" width="10" height="1" fill="#e3e3e3" />
<rect x="405" y="999" width="1" height="10" fill="#e3e3e3" />
<rect x="396" y="999" width="9" height="1" fill="#696969" />
<rect x="396" y="999" width="1" height="9" fill="#696969" />
<text x="413" y="985.5" font-family='"Liberation Mono", monospace' font-size="12" fill="#000" textLength="71.3" lengthAdjust="spacingAndGlyphs">[C]Continuou</text>
<rect x="419" y="987" width="6" height="1" fill="#000" />
<text x="413" y="1008" font-family='"Liberation Mono", monospace' font-size="12" fill="#000" textLength="71.3" lengthAdjust="spacingAndGlyphs">[S]Mark Sele</text>
<rect x="419" y="1010" width="6" height="1" fill="#000" />
<text x="490" y="985.5" font-family='"Liberation Mono", monospace' font-size="12" fill="#000" textLength="23.3" lengthAdjust="spacingAndGlyphs">Part</text>
<text x="490" y="1004.5" font-family='"Liberation Mono", monospace' font-size="12" fill="#000" textLength="29.3" lengthAdjust="spacingAndGlyphs">Total</text>
<rect x="532" y="972" width="43" height="17" fill="#ffffff" />
<rect x="532" y="988" width="43" height="1" fill="#ffffff" />
<rect x="574" y="972" width="1" height="17" fill="#ffffff" />
<rect x="532" y="972" width="42" height="1" fill="#a0a0a0" />
<rect x="532" y="972" width="1" height="16" fill="#a0a0a0" />
<rect x="533" y="987" width="41" height="1" fill="#e3e3e3" />
<rect x="573" y="973" width="1" height="15" fill="#e3e3e3" />
<rect x="533" y="973" width="40" height="1" fill="#696969" />
<rect x="533" y="973" width="1" height="14" fill="#696969" />
<text x="535" y="984" font-family='"Liberation Mono", monospace' font-size="12" fill="#000" textLength="5.3" lengthAdjust="spacingAndGlyphs"><tspan font-family='"Liberation Sans", sans-serif' font-size="11.5">2</tspan></text>
<rect x="532" y="993" width="43" height="16" fill="#ffffff" />
<rect x="532" y="1008" width="43" height="1" fill="#ffffff" />
<rect x="574" y="993" width="1" height="16" fill="#ffffff" />
<rect x="532" y="993" width="42" height="1" fill="#a0a0a0" />
<rect x="532" y="993" width="1" height="15" fill="#a0a0a0" />
<rect x="533" y="1007" width="41" height="1" fill="#e3e3e3" />
<rect x="573" y="994" width="1" height="14" fill="#e3e3e3" />
<rect x="533" y="994" width="40" height="1" fill="#696969" />
<rect x="533" y="994" width="1" height="13" fill="#696969" />
<text x="535" y="1005" font-family='"Liberation Mono", monospace' font-size="12" fill="#000" textLength="5.3" lengthAdjust="spacingAndGlyphs"><tspan font-family='"Liberation Sans", sans-serif' font-size="11.5">0</tspan></text>
<rect x="577" y="972" width="19" height="19" fill="#f0f0f0" />
<rect x="577" y="990" width="19" height="1" fill="#696969" />
<rect x="595" y="972" width="1" height="19" fill="#696969" />
<rect x="577" y="972" width="18" height="1" fill="#ffffff" />
<rect x="577" y="972" width="1" height="18" fill="#ffffff" />
<rect x="578" y="989" width="17" height="1" fill="#a0a0a0" />
<rect x="594" y="973" width="1" height="17" fill="#a0a0a0" />
<rect x="578" y="973" width="16" height="1" fill="#e3e3e3" />
<rect x="578" y="973" width="1" height="16" fill="#e3e3e3" />
<text x="584" y="985.5" font-family='"Liberation Mono", monospace' font-size="12" fill="#000" textLength="5.3" lengthAdjust="spacingAndGlyphs">R</text>
<rect x="598" y="995" width="56" height="21" fill="#f0f0f0" />
<rect x="598" y="1015" width="56" height="1" fill="#696969" />
<rect x="653" y="995" width="1" height="21" fill="#696969" />
<rect x="598" y="995" width="55" height="1" fill="#ffffff" />
<rect x="598" y="995" width="1" height="20" fill="#ffffff" />
<rect x="599" y="1014" width="54" height="1" fill="#a0a0a0" />
<rect x="652" y="996" width="1" height="19" fill="#a0a0a0" />
<rect x="599" y="996" width="53" height="1" fill="#e3e3e3" />
<rect x="599" y="996" width="1" height="18" fill="#e3e3e3" />
<text x="600" y="1009" font-family='"Liberation Mono", monospace' font-size="12" fill="#000" textLength="53.3" lengthAdjust="spacingAndGlyphs">Param(F<tspan font-family='"Liberation Sans", sans-serif' font-size="11.5">3</tspan>)</text>
<rect x="658" y="971" width="75" height="18" fill="#f0f0f0" />
<rect x="658" y="988" width="75" height="1" fill="#ffffff" />
<rect x="732" y="971" width="1" height="18" fill="#ffffff" />
<rect x="658" y="971" width="74" height="1" fill="#a0a0a0" />
<rect x="658" y="971" width="1" height="17" fill="#a0a0a0" />
<clipPath id="clipT"><rect x="659" y="972" width="73" height="16"/></clipPath><g clip-path="url(#clipT)">
<text x="660" y="984" font-family='"Liberation Mono", monospace' font-size="12" fill="#000" textLength="71.3" lengthAdjust="spacingAndGlyphs">-<tspan font-family='"Liberation Sans", sans-serif' font-size="11.5">2</tspan>:-<tspan font-family='"Liberation Sans", sans-serif' font-size="11.5">55</tspan>:-<tspan font-family='"Liberation Sans", sans-serif' font-size="11.5">11</tspan>.-</text>
</g>
<rect x="658" y="996" width="75" height="15" fill="#f0f0f0" />
<rect x="658" y="1010" width="75" height="1" fill="#ffffff" />
<rect x="732" y="996" width="1" height="15" fill="#ffffff" />
<rect x="658" y="996" width="74" height="1" fill="#a0a0a0" />
<rect x="658" y="996" width="1" height="14" fill="#a0a0a0" />
<text x="660" y="1008" font-family='"Liberation Mono", monospace' font-size="12" fill="#000" textLength="71.3" lengthAdjust="spacingAndGlyphs"><tspan font-family='"Liberation Sans", sans-serif' font-size="11.5">00</tspan>:<tspan font-family='"Liberation Sans", sans-serif' font-size="11.5">00</tspan>:<tspan font-family='"Liberation Sans", sans-serif' font-size="11.5">00</tspan>.<tspan font-family='"Liberation Sans", sans-serif' font-size="11.5">004</tspan></text>
<rect x="737" y="976" width="12" height="12" fill="#ffffff" />
<rect x="737" y="987" width="12" height="1" fill="#ffffff" />
<rect x="748" y="976" width="1" height="12" fill="#ffffff" />
<rect x="737" y="976" width="11" height="1" fill="#a0a0a0" />
<rect x="737" y="976" width="1" height="11" fill="#a0a0a0" />
<rect x="738" y="986" width="10" height="1" fill="#e3e3e3" />
<rect x="747" y="977" width="1" height="10" fill="#e3e3e3" />
<rect x="738" y="977" width="9" height="1" fill="#696969" />
<rect x="738" y="977" width="1" height="9" fill="#696969" />
<rect x="737" y="999" width="12" height="12" fill="#ffffff" />
<rect x="737" y="1010" width="12" height="1" fill="#ffffff" />
<rect x="748" y="999" width="1" height="12" fill="#ffffff" />
<rect x="737" y="999" width="11" height="1" fill="#a0a0a0" />
<rect x="737" y="999" width="1" height="11" fill="#a0a0a0" />
<rect x="738" y="1009" width="10" height="1" fill="#e3e3e3" />
<rect x="747" y="1000" width="1" height="10" fill="#e3e3e3" />
<rect x="738" y="1000" width="9" height="1" fill="#696969" />
<rect x="738" y="1000" width="1" height="9" fill="#696969" />
<text x="754" y="985" font-family='"Liberation Mono", monospace' font-size="12" fill="#000" textLength="71.3" lengthAdjust="spacingAndGlyphs">Show contour</text>
<text x="754" y="1008" font-family='"Liberation Mono", monospace' font-size="12" fill="#000" textLength="77.3" lengthAdjust="spacingAndGlyphs">Continue mode</text>
<defs><filter id="fSh" x="-10%" y="-10%" width="120%" height="120%"><feGaussianBlur stdDeviation="5"/></filter></defs>
<g shape-rendering="geometricPrecision"><rect x="345" y="259" width="413" height="469" fill="#000" opacity=".27" filter="url(#fSh)"/></g>
<rect x="347" y="257" width="409" height="467" fill="#f0f0f0" />
<rect x="348" y="258" width="407" height="25" fill="#ffffff" />
<rect x="347" y="257" width="409" height="1" fill="#8a8a8a" />
<rect x="347" y="723" width="409" height="1" fill="#8a8a8a" />
<rect x="347" y="257" width="1" height="467" fill="#8a8a8a" />
<rect x="755" y="257" width="1" height="467" fill="#8a8a8a" />
<text x="351.5" y="274" font-family='"Liberation Sans", sans-serif' font-size="12" fill="#999" textLength="32" lengthAdjust="spacingAndGlyphs" >Hatch</text>
<g shape-rendering="geometricPrecision"><path d="M735 265 l10 10 M745 265 l-10 10" stroke="#666" stroke-width="1"/></g>
<rect x="365" y="300" width="13" height="13" fill="#ffffff" />
<rect x="365" y="312" width="13" height="1" fill="#ffffff" />
<rect x="377" y="300" width="1" height="13" fill="#ffffff" />
<rect x="365" y="300" width="12" height="1" fill="#a0a0a0" />
<rect x="365" y="300" width="1" height="12" fill="#a0a0a0" />
<rect x="366" y="311" width="11" height="1" fill="#e3e3e3" />
<rect x="376" y="301" width="1" height="11" fill="#e3e3e3" />
<rect x="366" y="301" width="10" height="1" fill="#696969" />
<rect x="366" y="301" width="1" height="10" fill="#696969" />
<path d="M368 305.5 l2.5 2.5 l4.5 -4.5" stroke="#000" stroke-width="2" fill="none" shape-rendering="geometricPrecision"/>
<text x="382" y="311" font-family='"Liberation Mono", monospace' font-size="12" fill="#000" textLength="71.3" lengthAdjust="spacingAndGlyphs">Mark Contour</text>
<rect x="475" y="294" width="44" height="24" fill="#f0f0f0" />
<rect x="475" y="317" width="44" height="1" fill="#696969" />
<rect x="518" y="294" width="1" height="24" fill="#696969" />
<rect x="475" y="294" width="43" height="1" fill="#ffffff" />
<rect x="475" y="294" width="1" height="23" fill="#ffffff" />
<rect x="476" y="316" width="42" height="1" fill="#a0a0a0" />
<rect x="517" y="295" width="1" height="22" fill="#a0a0a0" />
<rect x="476" y="295" width="41" height="1" fill="#e3e3e3" />
<rect x="476" y="295" width="1" height="21" fill="#e3e3e3" />
<rect x="484" y="298" width="24" height="16" fill="#ffffff" />
<rect x="484" y="298" width="24" height="1" fill="#000" />
<rect x="484" y="313" width="24" height="1" fill="#000" />
<rect x="484" y="298" width="1" height="16" fill="#000" />
<rect x="507" y="298" width="1" height="16" fill="#000" />
<rect x="485" y="301" width="22" height="1" fill="#0000d0" />
<rect x="485" y="304" width="22" height="1" fill="#0000d0" />
<rect x="485" y="307" width="22" height="1" fill="#0000d0" />
<rect x="485" y="310" width="22" height="1" fill="#0000d0" />
<text x="495" y="311" font-family='"Liberation Sans", sans-serif' font-size="11" fill="#c01030" font-weight="bold" >4</text>
<rect x="365" y="320" width="153" height="1" fill="#a0a0a0" />
<rect x="365" y="343" width="153" height="1" fill="#a0a0a0" />
<rect x="365" y="320" width="1" height="24" fill="#a0a0a0" />
<rect x="517" y="320" width="1" height="24" fill="#a0a0a0" />
<rect x="366" y="321" width="151" height="1" fill="#ffffff" />
<rect x="366" y="321" width="1" height="22" fill="#ffffff" />
<rect x="365" y="344" width="154" height="1" fill="#ffffff" />
<rect x="518" y="320" width="1" height="25" fill="#ffffff" />
<g shape-rendering="geometricPrecision"><circle cx="382.5" cy="330.5" r="5.5" fill="#fff"/><path d="M378.3 334.7 A6 6 0 0 1 386.7 326.3" stroke="#a0a0a0" stroke-width="1" fill="none"/><path d="M379.0 334.0 A5 5 0 0 1 386.0 327.0" stroke="#696969" stroke-width="1" fill="none"/><path d="M378.3 334.7 A6 6 0 0 0 386.7 326.3" stroke="#ffffff" stroke-width="1" fill="none"/><path d="M379.0 334.0 A5 5 0 0 0 386.0 327.0" stroke="#e3e3e3" stroke-width="1" fill="none"/><circle cx="382.5" cy="330.5" r="2" fill="#000"/></g>
<text x="394" y="335" font-family='"Liberation Mono", monospace' font-size="12" fill="#000" textLength="35.3" lengthAdjust="spacingAndGlyphs">Hatch<tspan font-family='"Liberation Sans", sans-serif' font-size="11.5">1</tspan></text>
<g shape-rendering="geometricPrecision"><circle cx="451.5" cy="330.5" r="5.5" fill="#fff"/><path d="M447.3 334.7 A6 6 0 0 1 455.7 326.3" stroke="#a0a0a0" stroke-width="1" fill="none"/><path d="M448.0 334.0 A5 5 0 0 1 455.0 327.0" stroke="#696969" stroke-width="1" fill="none"/><path d="M447.3 334.7 A6 6 0 0 0 455.7 326.3" stroke="#ffffff" stroke-width="1" fill="none"/><path d="M448.0 334.0 A5 5 0 0 0 455.0 327.0" stroke="#e3e3e3" stroke-width="1" fill="none"/></g>
<text x="463" y="335" font-family='"Liberation Mono", monospace' font-size="12" fill="#000" textLength="5.3" lengthAdjust="spacingAndGlyphs"><tspan font-family='"Liberation Sans", sans-serif' font-size="11.5">2</tspan></text>
<g shape-rendering="geometricPrecision"><circle cx="485.5" cy="330.5" r="5.5" fill="#fff"/><path d="M481.3 334.7 A6 6 0 0 1 489.7 326.3" stroke="#a0a0a0" stroke-width="1" fill="none"/><path d="M482.0 334.0 A5 5 0 0 1 489.0 327.0" stroke="#696969" stroke-width="1" fill="none"/><path d="M481.3 334.7 A6 6 0 0 0 489.7 326.3" stroke="#ffffff" stroke-width="1" fill="none"/><path d="M482.0 334.0 A5 5 0 0 0 489.0 327.0" stroke="#e3e3e3" stroke-width="1" fill="none"/></g>
<text x="497" y="335" font-family='"Liberation Mono", monospace' font-size="12" fill="#000" textLength="5.3" lengthAdjust="spacingAndGlyphs"><tspan font-family='"Liberation Sans", sans-serif' font-size="11.5">3</tspan></text>
<rect x="371" y="351" width="12" height="12" fill="#ffffff" />
<rect x="371" y="362" width="12" height="1" fill="#ffffff" />
<rect x="382" y="351" width="1" height="12" fill="#ffffff" />
<rect x="371" y="351" width="11" height="1" fill="#a0a0a0" />
<rect x="371" y="351" width="1" height="11" fill="#a0a0a0" />
<rect x="372" y="361" width="10" height="1" fill="#e3e3e3" />
<rect x="381" y="352" width="1" height="10" fill="#e3e3e3" />
<rect x="372" y="352" width="9" height="1" fill="#696969" />
<rect x="372" y="352" width="1" height="9" fill="#696969" />
<path d="M374 356.5 l2.5 2.5 l4.5 -4.5" stroke="#000" stroke-width="2" fill="none" shape-rendering="geometricPrecision"/>
<text x="389" y="361" font-family='"Liberation Mono", monospace' font-size="12" fill="#000" textLength="35.3" lengthAdjust="spacingAndGlyphs">Enable</text>
<rect x="371" y="367" width="12" height="12" fill="#ffffff" />
<rect x="371" y="378" width="12" height="1" fill="#ffffff" />
<rect x="382" y="367" width="1" height="12" fill="#ffffff" />
<rect x="371" y="367" width="11" height="1" fill="#a0a0a0" />
<rect x="371" y="367" width="1" height="11" fill="#a0a0a0" />
<rect x="372" y="377" width="10" height="1" fill="#e3e3e3" />
<rect x="381" y="368" width="1" height="10" fill="#e3e3e3" />
<rect x="372" y="368" width="9" height="1" fill="#696969" />
<rect x="372" y="368" width="1" height="9" fill="#696969" />
<text x="389" y="377" font-family='"Liberation Mono", monospace' font-size="12" fill="#000" textLength="41.3" lengthAdjust="spacingAndGlyphs">Reverse</text>
<rect x="371" y="384" width="12" height="12" fill="#ffffff" />
<rect x="371" y="395" width="12" height="1" fill="#ffffff" />
<rect x="382" y="384" width="1" height="12" fill="#ffffff" />
<rect x="371" y="384" width="11" height="1" fill="#a0a0a0" />
<rect x="371" y="384" width="1" height="11" fill="#a0a0a0" />
<rect x="372" y="394" width="10" height="1" fill="#e3e3e3" />
<rect x="381" y="385" width="1" height="10" fill="#e3e3e3" />
<rect x="372" y="385" width="9" height="1" fill="#696969" />
<rect x="372" y="385" width="1" height="9" fill="#696969" />
<text x="389" y="394" font-family='"Liberation Mono", monospace' font-size="12" fill="#000" textLength="83.3" lengthAdjust="spacingAndGlyphs">Follow edge on</text>
<text x="488" y="357" font-family='"Liberation Mono", monospace' font-size="12" fill="#000" textLength="23.3" lengthAdjust="spacingAndGlyphs">Type</text>
<rect x="478" y="363" width="38" height="38" fill="#f0f0f0" />
<rect x="478" y="400" width="38" height="1" fill="#696969" />
<rect x="515" y="363" width="1" height="38" fill="#696969" />
<rect x="478" y="363" width="37" height="1" fill="#ffffff" />
<rect x="478" y="363" width="1" height="37" fill="#ffffff" />
<rect x="479" y="399" width="36" height="1" fill="#a0a0a0" />
<rect x="514" y="364" width="1" height="36" fill="#a0a0a0" />
<rect x="479" y="364" width="35" height="1" fill="#e3e3e3" />
<rect x="479" y="364" width="1" height="35" fill="#e3e3e3" />
<rect x="482" y="367" width="30" height="30" fill="#ffffff" />
<rect x="482" y="367" width="30" height="1" fill="#0000c0" />
<rect x="482" y="396" width="30" height="1" fill="#0000c0" />
<rect x="482" y="367" width="1" height="30" fill="#0000c0" />
<rect x="511" y="367" width="1" height="30" fill="#0000c0" />
<rect x="485" y="370" width="24" height="1" fill="#0000c0" />
<rect x="485" y="393" width="24" height="1" fill="#0000c0" />
<rect x="485" y="370" width="1" height="24" fill="#0000c0" />
<rect x="508" y="370" width="1" height="24" fill="#0000c0" />
<rect x="488" y="373" width="18" height="1" fill="#0000c0" />
<rect x="488" y="390" width="18" height="1" fill="#0000c0" />
<rect x="488" y="373" width="1" height="18" fill="#0000c0" />
<rect x="505" y="373" width="1" height="18" fill="#0000c0" />
<rect x="491" y="376" width="12" height="1" fill="#0000c0" />
<rect x="491" y="387" width="12" height="1" fill="#0000c0" />
<rect x="491" y="376" width="1" height="12" fill="#0000c0" />
<rect x="502" y="376" width="1" height="12" fill="#0000c0" />
<rect x="494" y="379" width="6" height="1" fill="#0000c0" />
<rect x="494" y="384" width="6" height="1" fill="#0000c0" />
<rect x="494" y="379" width="1" height="6" fill="#0000c0" />
<rect x="499" y="379" width="1" height="6" fill="#0000c0" />
<text x="373" y="424" font-family='"Liberation Mono", monospace' font-size="12" fill="#000" textLength="29.3" lengthAdjust="spacingAndGlyphs">Angle</text>
<text x="461" y="424" font-family='"Liberation Mono", monospace' font-size="12" fill="#000" textLength="41.3" lengthAdjust="spacingAndGlyphs">Pen No.</text>
<rect x="371" y="429" width="47" height="16" fill="#f0f0f0" />
<rect x="371" y="444" width="47" height="1" fill="#ffffff" />
<rect x="417" y="429" width="1" height="16" fill="#ffffff" />
<rect x="371" y="429" width="46" height="1" fill="#a0a0a0" />
<rect x="371" y="429" width="1" height="15" fill="#a0a0a0" />
<rect x="372" y="443" width="45" height="1" fill="#e3e3e3" />
<rect x="416" y="430" width="1" height="14" fill="#e3e3e3" />
<rect x="372" y="430" width="44" height="1" fill="#696969" />
<rect x="372" y="430" width="1" height="13" fill="#696969" />
<text x="374" y="441" font-family='"Liberation Mono", monospace' font-size="12" fill="#808080" textLength="5.3" lengthAdjust="spacingAndGlyphs"><tspan font-family='"Liberation Sans", sans-serif' font-size="11.5">0</tspan></text>
<clipPath id="clipDeg"><rect x="423" y="430" width="21" height="16"/></clipPath><g clip-path="url(#clipDeg)">
<text x="424" y="441" font-family='"Liberation Mono", monospace' font-size="12" fill="#000" textLength="23.3" lengthAdjust="spacingAndGlyphs">Degr</text>
</g>
<rect x="448" y="429" width="57" height="22" fill="#ffffff" />
<rect x="448" y="450" width="57" height="1" fill="#ffffff" />
<rect x="504" y="429" width="1" height="22" fill="#ffffff" />
<rect x="448" y="429" width="56" height="1" fill="#a0a0a0" />
<rect x="448" y="429" width="1" height="21" fill="#a0a0a0" />
<rect x="449" y="449" width="55" height="1" fill="#e3e3e3" />
<rect x="503" y="430" width="1" height="20" fill="#e3e3e3" />
<rect x="449" y="430" width="54" height="1" fill="#696969" />
<rect x="449" y="430" width="1" height="19" fill="#696969" />
<rect x="453" y="433" width="16" height="14" fill="#000" />
<text x="473" y="444" font-family='"Liberation Mono", monospace' font-size="12" fill="#000" textLength="5.3" lengthAdjust="spacingAndGlyphs"><tspan font-family='"Liberation Sans", sans-serif' font-size="11.5">0</tspan></text>
<rect x="488" y="431" width="15" height="18" fill="#f0f0f0" />
<rect x="488" y="448" width="15" height="1" fill="#696969" />
<rect x="502" y="431" width="1" height="18" fill="#696969" />
<rect x="488" y="431" width="14" height="1" fill="#ffffff" />
<rect x="488" y="431" width="1" height="17" fill="#ffffff" />
<rect x="489" y="447" width="13" height="1" fill="#a0a0a0" />
<rect x="501" y="432" width="1" height="16" fill="#a0a0a0" />
<rect x="489" y="432" width="12" height="1" fill="#e3e3e3" />
<rect x="489" y="432" width="1" height="15" fill="#e3e3e3" />
<g shape-rendering="geometricPrecision"><path d="M491.500 438h8l-4 4.500z" fill="#000"/></g>
<text x="361" y="465.5" font-family='"Liberation Mono", monospace' font-size="12" fill="#000" textLength="29.3" lengthAdjust="spacingAndGlyphs">Count</text>
<rect x="448" y="452" width="43" height="16" fill="#ffffff" />
<rect x="448" y="467" width="43" height="1" fill="#ffffff" />
<rect x="490" y="452" width="1" height="16" fill="#ffffff" />
<rect x="448" y="452" width="42" height="1" fill="#a0a0a0" />
<rect x="448" y="452" width="1" height="15" fill="#a0a0a0" />
<rect x="449" y="466" width="41" height="1" fill="#e3e3e3" />
<rect x="489" y="453" width="1" height="14" fill="#e3e3e3" />
<rect x="449" y="453" width="40" height="1" fill="#696969" />
<rect x="449" y="453" width="1" height="13" fill="#696969" />
<text x="451" y="464" font-family='"Liberation Mono", monospace' font-size="12" fill="#000" textLength="5.3" lengthAdjust="spacingAndGlyphs"><tspan font-family='"Liberation Sans", sans-serif' font-size="11.5">1</tspan></text>
<text x="361" y="486" font-family='"Liberation Mono", monospace' font-size="12" fill="#000" textLength="59.3" lengthAdjust="spacingAndGlyphs">Line Space</text>
<rect x="448" y="473" width="43" height="16" fill="#ffffff" />
<rect x="448" y="488" width="43" height="1" fill="#ffffff" />
<rect x="490" y="473" width="1" height="16" fill="#ffffff" />
<rect x="448" y="473" width="42" height="1" fill="#a0a0a0" />
<rect x="448" y="473" width="1" height="15" fill="#a0a0a0" />
<rect x="449" y="487" width="41" height="1" fill="#e3e3e3" />
<rect x="489" y="474" width="1" height="14" fill="#e3e3e3" />
<rect x="449" y="474" width="40" height="1" fill="#696969" />
<rect x="449" y="474" width="1" height="13" fill="#696969" />
<text x="451" y="485" font-family='"Liberation Mono", monospace' font-size="12" fill="#000" textLength="17.3" lengthAdjust="spacingAndGlyphs"><tspan font-family='"Liberation Sans", sans-serif' font-size="11.5">0</tspan>.<tspan font-family='"Liberation Sans", sans-serif' font-size="11.5">2</tspan></text>
<text x="496" y="487" font-family='"Liberation Mono", monospace' font-size="12" fill="#000" textLength="11.3" lengthAdjust="spacingAndGlyphs">MM</text>
<rect x="362" y="493" width="12" height="12" fill="#f0f0f0" />
<rect x="362" y="504" width="12" height="1" fill="#ffffff" />
<rect x="373" y="493" width="1" height="12" fill="#ffffff" />
<rect x="362" y="493" width="11" height="1" fill="#a0a0a0" />
<rect x="362" y="493" width="1" height="11" fill="#a0a0a0" />
<rect x="363" y="503" width="10" height="1" fill="#e3e3e3" />
<rect x="372" y="494" width="1" height="10" fill="#e3e3e3" />
<rect x="363" y="494" width="9" height="1" fill="#696969" />
<rect x="363" y="494" width="1" height="9" fill="#696969" />
<path d="M365 498.5 l2.5 2.5 l4.5 -4.5" stroke="#a0a0a0" stroke-width="2" fill="none" shape-rendering="geometricPrecision"/>
<text x="380" y="503" font-family='"Liberation Mono", monospace' font-size="12" fill="#9a9a9a" textLength="137.3" lengthAdjust="spacingAndGlyphs">Average distribute line</text>
<text x="361" y="523" font-family='"Liberation Mono", monospace' font-size="12" fill="#000" textLength="65.3" lengthAdjust="spacingAndGlyphs">Edge Offset</text>
<rect x="448" y="511" width="43" height="16" fill="#ffffff" />
<rect x="448" y="526" width="43" height="1" fill="#ffffff" />
<rect x="490" y="511" width="1" height="16" fill="#ffffff" />
<rect x="448" y="511" width="42" height="1" fill="#a0a0a0" />
<rect x="448" y="511" width="1" height="15" fill="#a0a0a0" />
<rect x="449" y="525" width="41" height="1" fill="#e3e3e3" />
<rect x="489" y="512" width="1" height="14" fill="#e3e3e3" />
<rect x="449" y="512" width="40" height="1" fill="#696969" />
<rect x="449" y="512" width="1" height="13" fill="#696969" />
<text x="451" y="523" font-family='"Liberation Mono", monospace' font-size="12" fill="#000" textLength="5.3" lengthAdjust="spacingAndGlyphs"><tspan font-family='"Liberation Sans", sans-serif' font-size="11.5">0</tspan></text>
<text x="496" y="525" font-family='"Liberation Mono", monospace' font-size="12" fill="#000" textLength="11.3" lengthAdjust="spacingAndGlyphs">MM</text>
<text x="361" y="544" font-family='"Liberation Mono", monospace' font-size="12" fill="#000" textLength="71.3" lengthAdjust="spacingAndGlyphs">Start Offset</text>
<rect x="448" y="532" width="43" height="16" fill="#f0f0f0" />
<rect x="448" y="547" width="43" height="1" fill="#ffffff" />
<rect x="490" y="532" width="1" height="16" fill="#ffffff" />
<rect x="448" y="532" width="42" height="1" fill="#a0a0a0" />
<rect x="448" y="532" width="1" height="15" fill="#a0a0a0" />
<rect x="449" y="546" width="41" height="1" fill="#e3e3e3" />
<rect x="489" y="533" width="1" height="14" fill="#e3e3e3" />
<rect x="449" y="533" width="40" height="1" fill="#696969" />
<rect x="449" y="533" width="1" height="13" fill="#696969" />
<text x="451" y="544" font-family='"Liberation Mono", monospace' font-size="12" fill="#808080" textLength="5.3" lengthAdjust="spacingAndGlyphs"><tspan font-family='"Liberation Sans", sans-serif' font-size="11.5">0</tspan></text>
<text x="496" y="546" font-family='"Liberation Mono", monospace' font-size="12" fill="#000" textLength="11.3" lengthAdjust="spacingAndGlyphs">MM</text>
<text x="361" y="565" font-family='"Liberation Mono", monospace' font-size="12" fill="#000" textLength="59.3" lengthAdjust="spacingAndGlyphs">End Offset</text>
<rect x="448" y="553" width="43" height="16" fill="#f0f0f0" />
<rect x="448" y="568" width="43" height="1" fill="#ffffff" />
<rect x="490" y="553" width="1" height="16" fill="#ffffff" />
<rect x="448" y="553" width="42" height="1" fill="#a0a0a0" />
<rect x="448" y="553" width="1" height="15" fill="#a0a0a0" />
<rect x="449" y="567" width="41" height="1" fill="#e3e3e3" />
<rect x="489" y="554" width="1" height="14" fill="#e3e3e3" />
<rect x="449" y="554" width="40" height="1" fill="#696969" />
<rect x="449" y="554" width="1" height="13" fill="#696969" />
<text x="451" y="565" font-family='"Liberation Mono", monospace' font-size="12" fill="#808080" textLength="5.3" lengthAdjust="spacingAndGlyphs"><tspan font-family='"Liberation Sans", sans-serif' font-size="11.5">0</tspan></text>
<text x="496" y="567" font-family='"Liberation Mono", monospace' font-size="12" fill="#000" textLength="11.3" lengthAdjust="spacingAndGlyphs">MM</text>
<text x="361" y="586" font-family='"Liberation Mono", monospace' font-size="12" fill="#000" textLength="77.3" lengthAdjust="spacingAndGlyphs">Linereduction</text>
<rect x="448" y="574" width="43" height="16" fill="#f0f0f0" />
<rect x="448" y="589" width="43" height="1" fill="#ffffff" />
<rect x="490" y="574" width="1" height="16" fill="#ffffff" />
<rect x="448" y="574" width="42" height="1" fill="#a0a0a0" />
<rect x="448" y="574" width="1" height="15" fill="#a0a0a0" />
<rect x="449" y="588" width="41" height="1" fill="#e3e3e3" />
<rect x="489" y="575" width="1" height="14" fill="#e3e3e3" />
<rect x="449" y="575" width="40" height="1" fill="#696969" />
<rect x="449" y="575" width="1" height="13" fill="#696969" />
<text x="451" y="586" font-family='"Liberation Mono", monospace' font-size="12" fill="#808080" textLength="5.3" lengthAdjust="spacingAndGlyphs"><tspan font-family='"Liberation Sans", sans-serif' font-size="11.5">0</tspan></text>
<text x="496" y="588" font-family='"Liberation Mono", monospace' font-size="12" fill="#000" textLength="11.3" lengthAdjust="spacingAndGlyphs">MM</text>
<text x="361" y="607" font-family='"Liberation Mono", monospace' font-size="12" fill="#000" textLength="47.3" lengthAdjust="spacingAndGlyphs">NumLoops</text>
<rect x="448" y="595" width="43" height="16" fill="#f0f0f0" />
<rect x="448" y="610" width="43" height="1" fill="#ffffff" />
<rect x="490" y="595" width="1" height="16" fill="#ffffff" />
<rect x="448" y="595" width="42" height="1" fill="#a0a0a0" />
<rect x="448" y="595" width="1" height="15" fill="#a0a0a0" />
<rect x="449" y="609" width="41" height="1" fill="#e3e3e3" />
<rect x="489" y="596" width="1" height="14" fill="#e3e3e3" />
<rect x="449" y="596" width="40" height="1" fill="#696969" />
<rect x="449" y="596" width="1" height="13" fill="#696969" />
<text x="451" y="607" font-family='"Liberation Mono", monospace' font-size="12" fill="#808080" textLength="5.3" lengthAdjust="spacingAndGlyphs"><tspan font-family='"Liberation Sans", sans-serif' font-size="11.5">0</tspan></text>
<text x="361" y="628" font-family='"Liberation Mono", monospace' font-size="12" fill="#000" textLength="77.3" lengthAdjust="spacingAndGlyphs">Loop distance</text>
<rect x="448" y="616" width="43" height="16" fill="#f0f0f0" />
<rect x="448" y="631" width="43" height="1" fill="#ffffff" />
<rect x="490" y="616" width="1" height="16" fill="#ffffff" />
<rect x="448" y="616" width="42" height="1" fill="#a0a0a0" />
<rect x="448" y="616" width="1" height="15" fill="#a0a0a0" />
<rect x="449" y="630" width="41" height="1" fill="#e3e3e3" />
<rect x="489" y="617" width="1" height="14" fill="#e3e3e3" />
<rect x="449" y="617" width="40" height="1" fill="#696969" />
<rect x="449" y="617" width="1" height="13" fill="#696969" />
<text x="451" y="628" font-family='"Liberation Mono", monospace' font-size="12" fill="#808080" textLength="17.3" lengthAdjust="spacingAndGlyphs"><tspan font-family='"Liberation Sans", sans-serif' font-size="11.5">0</tspan>.<tspan font-family='"Liberation Sans", sans-serif' font-size="11.5">5</tspan></text>
<text x="496" y="630" font-family='"Liberation Mono", monospace' font-size="12" fill="#000" textLength="11.3" lengthAdjust="spacingAndGlyphs">MM</text>
<rect x="371" y="634" width="12" height="12" fill="#f0f0f0" />
<rect x="371" y="645" width="12" height="1" fill="#ffffff" />
<rect x="382" y="634" width="1" height="12" fill="#ffffff" />
<rect x="371" y="634" width="11" height="1" fill="#a0a0a0" />
<rect x="371" y="634" width="1" height="11" fill="#a0a0a0" />
<rect x="372" y="644" width="10" height="1" fill="#e3e3e3" />
<rect x="381" y="635" width="1" height="10" fill="#e3e3e3" />
<rect x="372" y="635" width="9" height="1" fill="#696969" />
<rect x="372" y="635" width="1" height="9" fill="#696969" />
<text x="389" y="644" font-family='"Liberation Mono", monospace' font-size="12" fill="#9a9a9a" textLength="101.3" lengthAdjust="spacingAndGlyphs">Auto rorate hatch</text>
<rect x="395" y="650" width="59" height="20" fill="#f0f0f0" />
<rect x="395" y="669" width="59" height="1" fill="#ffffff" />
<rect x="453" y="650" width="1" height="20" fill="#ffffff" />
<rect x="395" y="650" width="58" height="1" fill="#a0a0a0" />
<rect x="395" y="650" width="1" height="19" fill="#a0a0a0" />
<rect x="396" y="668" width="57" height="1" fill="#e3e3e3" />
<rect x="452" y="651" width="1" height="18" fill="#e3e3e3" />
<rect x="396" y="651" width="56" height="1" fill="#696969" />
<rect x="396" y="651" width="1" height="17" fill="#696969" />
<text x="398" y="662.5" font-family='"Liberation Mono", monospace' font-size="12" fill="#808080" textLength="11.3" lengthAdjust="spacingAndGlyphs"><tspan font-family='"Liberation Sans", sans-serif' font-size="11.5">10</tspan></text>
<text x="461" y="665.5" font-family='"Liberation Mono", monospace' font-size="12" fill="#000" textLength="35.3" lengthAdjust="spacingAndGlyphs">Degree</text>
<rect x="647" y="294" width="98" height="30" fill="#f0f0f0" />
<rect x="647" y="323" width="98" height="1" fill="#696969" />
<rect x="744" y="294" width="1" height="30" fill="#696969" />
<rect x="647" y="294" width="97" height="1" fill="#ffffff" />
<rect x="647" y="294" width="1" height="29" fill="#ffffff" />
<rect x="648" y="322" width="96" height="1" fill="#a0a0a0" />
<rect x="743" y="295" width="1" height="28" fill="#a0a0a0" />
<rect x="648" y="295" width="95" height="1" fill="#e3e3e3" />
<rect x="648" y="295" width="1" height="27" fill="#e3e3e3" />
<text x="690" y="312.5" font-family='"Liberation Mono", monospace' font-size="12" fill="#000" textLength="11.3" lengthAdjust="spacingAndGlyphs">OK</text>
<rect x="647" y="328" width="98" height="30" fill="#f0f0f0" />
<rect x="647" y="357" width="98" height="1" fill="#696969" />
<rect x="744" y="328" width="1" height="30" fill="#696969" />
<rect x="647" y="328" width="97" height="1" fill="#ffffff" />
<rect x="647" y="328" width="1" height="29" fill="#ffffff" />
<rect x="648" y="356" width="96" height="1" fill="#a0a0a0" />
<rect x="743" y="329" width="1" height="28" fill="#a0a0a0" />
<rect x="648" y="329" width="95" height="1" fill="#e3e3e3" />
<rect x="648" y="329" width="1" height="27" fill="#e3e3e3" />
<text x="678" y="346" font-family='"Liberation Mono", monospace' font-size="12" fill="#000" textLength="35.3" lengthAdjust="spacingAndGlyphs">Cancel</text>
<rect x="615" y="370" width="129" height="30" fill="#f0f0f0" />
<rect x="615" y="399" width="129" height="1" fill="#696969" />
<rect x="743" y="370" width="1" height="30" fill="#696969" />
<rect x="615" y="370" width="128" height="1" fill="#ffffff" />
<rect x="615" y="370" width="1" height="29" fill="#ffffff" />
<rect x="616" y="398" width="127" height="1" fill="#a0a0a0" />
<rect x="742" y="371" width="1" height="28" fill="#a0a0a0" />
<rect x="616" y="371" width="126" height="1" fill="#e3e3e3" />
<rect x="616" y="371" width="1" height="27" fill="#e3e3e3" />
<text x="650" y="388" font-family='"Liberation Mono", monospace' font-size="12" fill="#000" textLength="59.3" lengthAdjust="spacingAndGlyphs">Undo Hatch</text>
<rect x="582" y="421" width="12" height="12" fill="#ffffff" />
<rect x="582" y="432" width="12" height="1" fill="#ffffff" />
<rect x="593" y="421" width="1" height="12" fill="#ffffff" />
<rect x="582" y="421" width="11" height="1" fill="#a0a0a0" />
<rect x="582" y="421" width="1" height="11" fill="#a0a0a0" />
<rect x="583" y="431" width="10" height="1" fill="#e3e3e3" />
<rect x="592" y="422" width="1" height="10" fill="#e3e3e3" />
<rect x="583" y="422" width="9" height="1" fill="#696969" />
<rect x="583" y="422" width="1" height="9" fill="#696969" />
<text x="600" y="431" font-family='"Liberation Mono", monospace' font-size="12" fill="#000" textLength="95.3" lengthAdjust="spacingAndGlyphs">Hatch one by one</text>
<g shape-rendering="geometricPrecision">
<rect x="1422" y="30" width="216" height="624" rx="11" ry="11" fill="none" stroke="#ed1c24" stroke-width="1.9" stroke-dasharray="6.4 3.3"/>
<rect x="267" y="967.5" width="122" height="50" rx="8" ry="8" fill="none" stroke="#ed1c24" stroke-width="1.6" stroke-dasharray="4.2 2.4"/>
<rect x="357" y="286.5" width="178" height="122.5" rx="11" ry="11" fill="none" stroke="#ed1c24" stroke-width="1.8" stroke-dasharray="6.7 3.6"/>
<rect x="351.5" y="468.5" width="182" height="24" rx="11" ry="11" fill="none" stroke="#ed1c24" stroke-width="1.8" stroke-dasharray="6.7 3.6"/>
<path d="M1298 89L1405.1 259.1" stroke="#ed1c24" stroke-width="1.4" fill="none"/>
<path d="M1411.5 269.3L1402.2 261.0L1407.0 262.2L1408.0 257.3z" fill="#ed1c24"/>
<path d="M591.7 456.3L546.1 401.9" stroke="#ed1c24" stroke-width="1.3" fill="none"/>
<path d="M539 393.5L548.5 399.9L543.9 399.4L543.6 404.0z" fill="#ed1c24"/>
<path d="M583.7 504.7L546.5 478.1" stroke="#ed1c24" stroke-width="1.3" fill="none"/>
<path d="M537.5 471.7L548.3 475.5L543.8 476.2L544.6 480.7z" fill="#ed1c24"/>
<path d="M327.5 919.6L298.8 954.2" stroke="#ed1c24" stroke-width="1.3" fill="none"/>
<path d="M291.8 962.7L296.4 952.2L296.7 956.8L301.3 956.3z" fill="#ed1c24"/>
<path d="M407.4 911.6L372.8 954.2" stroke="#ed1c24" stroke-width="1.3" fill="none"/>
<path d="M365.9 962.7L370.4 952.1L370.8 956.7L375.3 956.2z" fill="#ed1c24"/>
</g>
<text x="1141" y="73.8" font-family='"Liberation Sans", sans-serif' font-size="30.2" fill="#f20a24" textLength="215" lengthAdjust="spacingAndGlyphs" >Marking parameters</text>
<text x="590.5" y="477.5" font-family='"Liberation Sans", sans-serif' font-size="19.2" fill="#f20a24" textLength="128" lengthAdjust="spacingAndGlyphs" >Filling method</text>
<text x="590.5" y="510.3" font-family='"Liberation Sans", sans-serif' font-size="19.2" fill="#f20a24" textLength="122.5" lengthAdjust="spacingAndGlyphs" >Filling density</text>
<text x="219.8" y="904.7" font-family='"Liberation Sans", sans-serif' font-size="19.2" fill="#f20a24" textLength="219" lengthAdjust="spacingAndGlyphs" >Red light preview / Mark</text>
</svg>
</body></html>
